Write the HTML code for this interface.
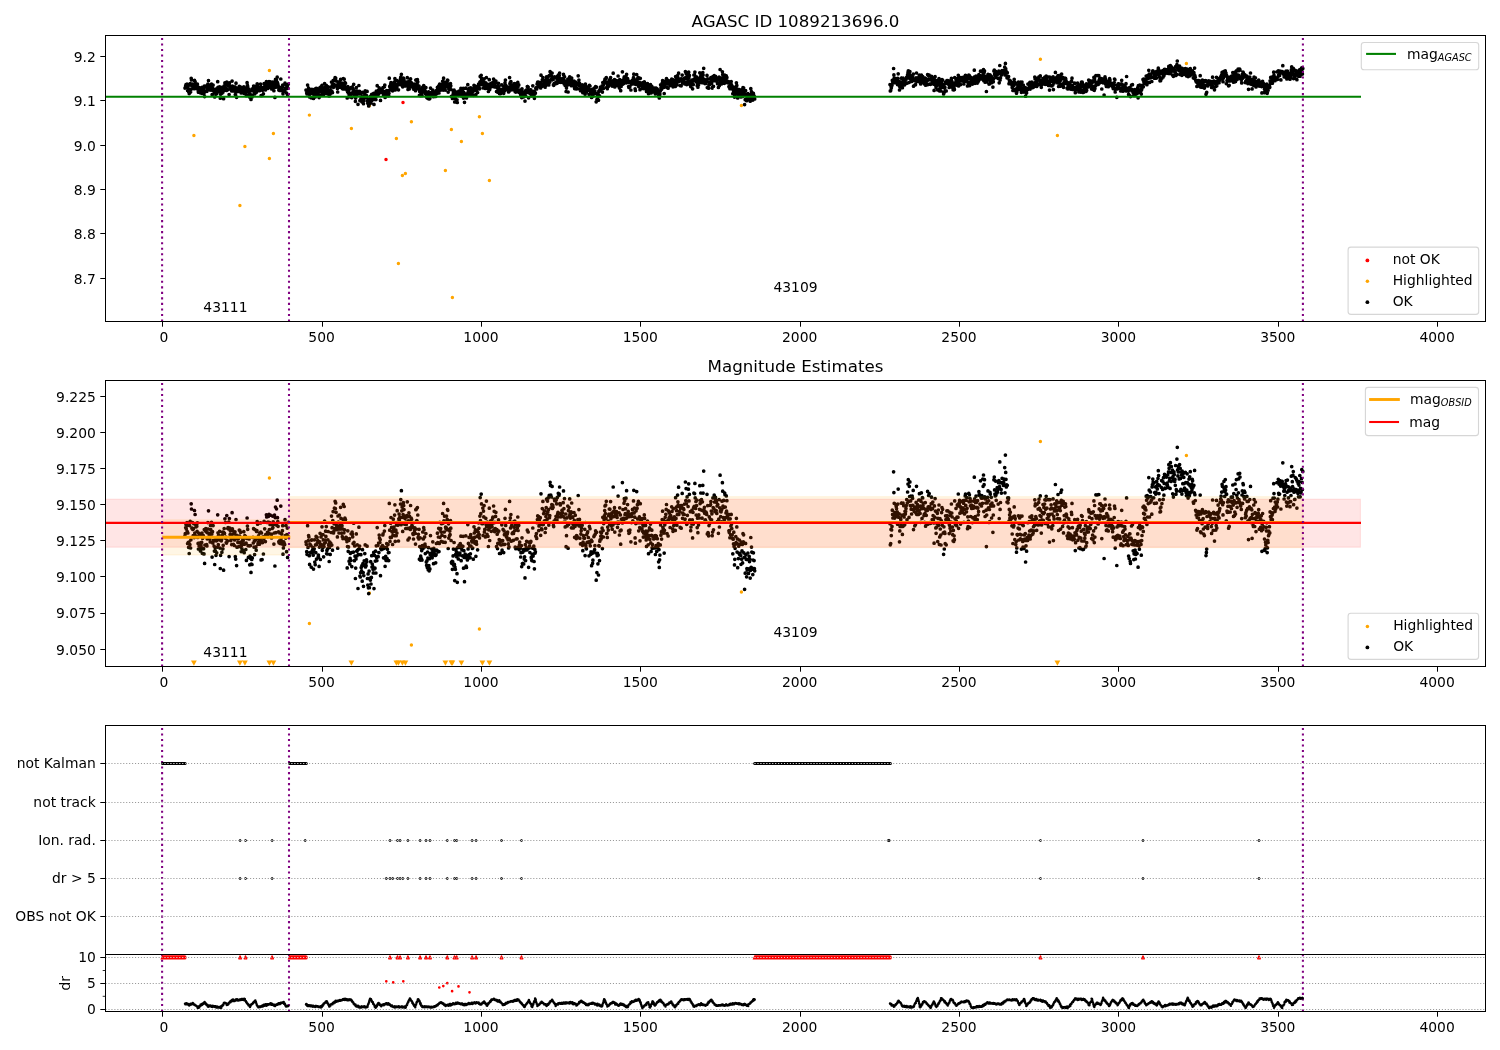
<!DOCTYPE html>
<html><head><meta charset="utf-8"><title>AGASC ID 1089213696.0</title>
<style>html,body{margin:0;padding:0;background:#fff}svg{display:block;will-change:transform}</style></head>
<body>
<svg width="1500" height="1050" viewBox="0 0 1500 1050" font-family="'DejaVu Sans','Liberation Sans',sans-serif" fill="#000">
<rect width="1500" height="1050" fill="#fff"/>
<defs>
<clipPath id="c0"><rect x="105.5" y="35.5" width="1380.0" height="286.0"/></clipPath>
<clipPath id="c1"><rect x="105.5" y="380.5" width="1380.0" height="286.0"/></clipPath>
<clipPath id="c2"><rect x="105.5" y="725.5" width="1380.0" height="286.0"/></clipPath>
</defs>
<g clip-path="url(#c0)">
<path d="M386.0 159.5h0M403.0 102.5h0" stroke="#ff0000" stroke-width="3.50" stroke-linecap="round" fill="none"/>
<path d="M269.4 70.4h0M193.9 135.5h0M244.9 146.5h0M273.4 133.5h0M269.4 158.5h0M239.9 205.5h0M309.4 115.1h0M351.4 128.5h0M369.4 105.7h0M396.4 138.5h0M411.4 121.7h0M402.4 175.5h0M405.4 173.5h0M398.4 263.5h0M445.4 170.5h0M451.4 129.5h0M461.4 141.5h0M479.4 116.8h0M482.4 133.5h0M489.4 180.5h0M452.4 297.5h0M741.4 105.4h0M1040.4 59.2h0M1057.4 135.5h0M1186.4 63.5h0" stroke="#ffa500" stroke-width="3.45" stroke-linecap="round" fill="none"/>
<path d="M185.0 88.1h0M185.3 87.5h0M185.7 85.6h0M186.0 84.7h0M186.3 86.1h0M186.6 85.1h0M187.0 84.2h0M187.3 86.8h0M187.6 90.5h0M187.9 87.3h0M188.3 90.2h0M188.6 91.7h0M188.9 90.1h0M189.2 93.6h0M189.6 85.0h0M189.9 90.9h0M190.2 83.7h0M190.6 91.9h0M190.9 89.4h0M191.2 78.3h0M191.5 79.9h0M191.9 85.8h0M192.2 85.8h0M192.5 84.1h0M192.8 86.2h0M193.2 88.1h0M193.5 86.0h0M193.8 84.5h0M194.2 88.7h0M194.5 80.4h0M194.8 87.3h0M195.1 81.6h0M195.5 88.3h0M195.8 84.9h0M196.1 85.4h0M196.4 88.4h0M196.8 85.2h0M197.1 86.8h0M197.4 84.2h0M197.7 88.7h0M198.1 90.5h0M198.4 92.2h0M198.7 87.3h0M199.1 91.3h0M199.4 90.4h0M199.7 87.9h0M200.0 91.3h0M200.4 92.8h0M200.7 87.9h0M201.0 91.0h0M201.3 91.7h0M201.7 90.2h0M202.0 87.3h0M202.3 93.5h0M202.6 88.9h0M203.0 92.2h0M203.3 88.1h0M203.6 92.1h0M204.0 93.7h0M204.3 86.2h0M204.6 96.6h0M204.9 91.0h0M205.3 86.6h0M205.6 91.1h0M205.9 86.0h0M206.2 86.9h0M206.6 90.8h0M206.9 91.3h0M207.2 89.1h0M207.6 87.2h0M207.9 84.1h0M208.2 86.1h0M208.5 80.5h0M208.9 88.4h0M209.2 87.5h0M209.5 88.4h0M209.8 89.2h0M210.2 90.1h0M210.5 85.0h0M210.8 86.3h0M211.1 87.3h0M211.5 84.1h0M211.8 87.6h0M212.1 94.7h0M212.5 86.9h0M212.8 90.4h0M213.1 85.0h0M213.4 89.6h0M213.8 89.8h0M214.1 91.3h0M214.4 92.9h0M214.7 97.0h0M215.1 91.7h0M215.4 92.8h0M215.7 89.2h0M216.0 94.2h0M216.4 89.7h0M216.7 93.4h0M217.0 88.6h0M217.4 91.6h0M217.7 81.7h0M218.0 87.3h0M218.3 90.9h0M218.7 88.0h0M219.0 88.6h0M219.3 89.4h0M219.6 86.8h0M220.0 92.0h0M220.3 98.2h0M220.6 94.2h0M221.0 88.6h0M221.3 89.7h0M221.6 89.3h0M221.9 93.2h0M222.3 87.9h0M222.6 87.0h0M222.9 92.2h0M223.2 91.1h0M223.6 98.7h0M223.9 87.2h0M224.2 85.9h0M224.5 87.4h0M224.9 82.9h0M225.2 88.9h0M225.5 84.1h0M225.9 88.6h0M226.2 90.2h0M226.5 90.4h0M226.8 82.0h0M227.2 89.6h0M227.5 89.8h0M227.8 85.9h0M228.1 85.6h0M228.5 86.0h0M228.8 83.9h0M229.1 94.6h0M229.4 82.9h0M229.8 85.8h0M230.1 87.8h0M230.4 86.7h0M230.8 89.6h0M231.1 89.2h0M231.4 87.9h0M231.7 90.9h0M232.1 81.1h0M232.4 86.0h0M232.7 86.5h0M233.0 89.0h0M233.4 90.8h0M233.7 87.6h0M234.0 87.3h0M234.4 91.1h0M234.7 89.4h0M235.0 86.9h0M235.3 94.6h0M235.7 95.3h0M236.0 83.2h0M236.3 87.9h0M236.6 97.3h0M237.0 91.7h0M237.3 89.0h0M237.6 88.9h0M237.9 90.2h0M238.3 89.1h0M238.6 88.2h0M238.9 91.5h0M239.3 86.4h0M239.6 88.3h0M239.9 86.6h0M240.2 90.3h0M240.6 87.1h0M240.9 90.1h0M241.2 93.0h0M241.5 91.2h0M241.9 92.1h0M242.2 88.8h0M242.5 90.5h0M242.8 89.5h0M243.2 89.6h0M243.5 92.7h0M243.8 86.9h0M244.2 93.4h0M244.5 90.8h0M244.8 88.1h0M245.1 88.8h0M245.5 88.4h0M245.8 92.4h0M246.1 90.4h0M246.4 95.7h0M246.8 89.0h0M247.1 82.7h0M247.4 85.2h0M247.7 86.2h0M248.1 91.2h0M248.4 94.8h0M248.7 89.1h0M249.1 89.1h0M249.4 91.3h0M249.7 97.1h0M250.0 94.4h0M250.4 91.1h0M250.7 95.1h0M251.0 99.4h0M251.3 96.8h0M251.7 95.4h0M252.0 97.0h0M252.3 95.0h0M252.7 88.7h0M253.0 88.7h0M253.3 90.4h0M253.6 86.0h0M254.0 91.6h0M254.3 89.8h0M254.6 94.0h0M254.9 86.3h0M255.3 89.2h0M255.6 89.3h0M255.9 91.6h0M256.2 92.6h0M256.6 86.8h0M256.9 86.6h0M257.2 83.8h0M257.6 84.6h0M257.9 90.7h0M258.2 90.0h0M258.5 88.2h0M258.9 89.1h0M259.2 90.0h0M259.5 90.7h0M259.8 87.3h0M260.2 89.4h0M260.5 84.2h0M260.8 87.0h0M261.1 95.6h0M261.5 87.3h0M261.8 90.0h0M262.1 95.5h0M262.5 90.3h0M262.8 88.6h0M263.1 88.5h0M263.4 93.8h0M263.8 89.1h0M264.1 83.7h0M264.4 88.6h0M264.7 86.0h0M265.1 88.3h0M265.4 89.9h0M265.7 87.8h0M266.1 87.9h0M266.4 81.7h0M266.7 82.4h0M267.0 84.1h0M267.4 87.1h0M267.7 88.4h0M268.0 83.9h0M268.3 82.2h0M268.7 87.4h0M269.0 81.6h0M269.3 86.3h0M269.6 84.1h0M270.0 84.7h0M270.3 81.8h0M270.6 84.7h0M271.0 87.7h0M271.3 87.9h0M271.6 88.9h0M271.9 84.7h0M272.3 85.9h0M272.6 82.1h0M272.9 85.6h0M273.2 83.9h0M273.6 84.7h0M273.9 90.7h0M274.2 87.3h0M274.5 81.8h0M274.9 97.4h0M275.2 82.6h0M275.5 79.3h0M275.9 87.2h0M276.2 84.4h0M276.5 79.9h0M276.8 84.9h0M277.2 77.2h0M277.5 82.6h0M277.8 83.8h0M278.1 85.2h0M278.5 86.9h0M278.8 90.0h0M279.1 90.3h0M279.5 89.7h0M279.8 87.3h0M280.1 90.5h0M280.4 89.8h0M280.8 79.0h0M281.1 88.9h0M281.4 89.8h0M281.7 87.6h0M282.1 90.7h0M282.4 86.6h0M282.7 85.1h0M283.0 93.8h0M283.4 91.9h0M283.7 90.0h0M284.0 91.0h0M284.4 90.5h0M284.7 90.8h0M285.0 83.2h0M285.3 88.1h0M285.7 88.9h0M286.0 85.0h0M286.3 88.7h0M286.6 93.0h0M287.0 87.8h0M287.3 85.8h0M287.6 94.8h0M287.9 88.2h0M288.3 84.1h0M306.0 90.0h0M306.3 90.8h0M306.7 93.0h0M307.0 93.9h0M307.3 93.2h0M307.6 85.1h0M308.0 91.7h0M308.3 89.7h0M308.6 88.1h0M308.9 88.5h0M309.3 94.3h0M309.6 96.9h0M309.9 90.7h0M310.2 90.8h0M310.6 93.3h0M310.9 91.2h0M311.2 97.8h0M311.6 89.5h0M311.9 89.4h0M312.2 93.4h0M312.5 92.6h0M312.9 91.8h0M313.2 94.1h0M313.5 98.4h0M313.8 92.9h0M314.2 92.2h0M314.5 89.4h0M314.8 96.2h0M315.2 97.0h0M315.5 91.0h0M315.8 93.3h0M316.1 88.4h0M316.5 95.3h0M316.8 90.7h0M317.1 88.6h0M317.4 90.3h0M317.8 89.6h0M318.1 94.7h0M318.4 94.1h0M318.7 94.8h0M319.1 97.6h0M319.4 91.6h0M319.7 90.1h0M320.1 87.4h0M320.4 95.4h0M320.7 90.9h0M321.0 88.5h0M321.4 91.0h0M321.7 91.1h0M322.0 85.4h0M322.3 92.6h0M322.7 91.8h0M323.0 87.8h0M323.3 89.4h0M323.6 94.6h0M324.0 91.5h0M324.3 90.6h0M324.6 83.6h0M325.0 89.5h0M325.3 90.2h0M325.6 86.7h0M325.9 88.4h0M326.3 85.3h0M326.6 93.6h0M326.9 92.6h0M327.2 93.7h0M327.6 92.2h0M327.9 89.4h0M328.2 86.8h0M328.6 91.1h0M328.9 90.6h0M329.2 96.0h0M329.5 91.7h0M329.9 90.1h0M330.2 93.9h0M330.5 91.0h0M330.8 90.5h0M331.2 87.1h0M331.5 82.1h0M331.8 91.0h0M332.1 85.7h0M332.5 92.6h0M332.8 83.5h0M333.1 80.7h0M333.5 87.3h0M333.8 86.8h0M334.1 84.5h0M334.4 79.7h0M334.8 85.9h0M335.1 77.6h0M335.4 79.8h0M335.7 78.0h0M336.1 80.9h0M336.4 86.0h0M336.7 85.1h0M337.0 86.3h0M337.4 88.5h0M337.7 92.0h0M338.0 82.1h0M338.4 83.9h0M338.7 85.7h0M339.0 87.3h0M339.3 81.8h0M339.7 85.1h0M340.0 86.1h0M340.3 84.4h0M340.6 79.4h0M341.0 82.8h0M341.3 82.9h0M341.6 87.3h0M342.0 85.0h0M342.3 88.5h0M342.6 86.1h0M342.9 89.0h0M343.3 78.5h0M343.6 83.3h0M343.9 87.2h0M344.2 79.2h0M344.6 86.3h0M344.9 82.7h0M345.2 89.0h0M345.5 83.2h0M345.9 88.7h0M346.2 88.6h0M346.5 89.3h0M346.9 90.0h0M347.2 98.0h0M347.5 91.4h0M347.8 86.6h0M348.2 92.9h0M348.5 91.6h0M348.8 89.6h0M349.1 96.0h0M349.5 89.0h0M349.8 96.8h0M350.1 95.1h0M350.4 93.5h0M350.8 95.7h0M351.1 87.5h0M351.4 93.3h0M351.8 97.6h0M352.1 87.0h0M352.4 87.6h0M352.7 88.5h0M353.1 90.6h0M353.4 93.2h0M353.7 84.3h0M354.0 90.2h0M354.4 95.8h0M354.7 91.3h0M355.0 94.4h0M355.4 101.3h0M355.7 98.1h0M356.0 95.3h0M356.3 87.6h0M356.7 92.9h0M357.0 94.3h0M357.3 91.0h0M357.6 92.6h0M358.0 104.3h0M358.3 93.9h0M358.6 92.3h0M358.9 85.5h0M359.3 92.1h0M359.6 91.3h0M359.9 100.5h0M360.3 100.8h0M360.6 99.5h0M360.9 94.0h0M361.2 97.9h0M361.6 99.0h0M361.9 97.3h0M362.2 102.1h0M362.5 92.4h0M362.9 96.8h0M363.2 99.4h0M363.5 103.7h0M363.8 100.4h0M364.2 95.9h0M364.5 97.4h0M364.8 93.6h0M365.2 90.9h0M365.5 97.7h0M365.8 97.1h0M366.1 97.4h0M366.5 95.5h0M366.8 96.2h0M367.1 91.4h0M367.4 101.3h0M367.8 103.3h0M368.1 99.9h0M368.4 104.1h0M368.7 105.9h0M369.1 99.0h0M369.4 104.1h0M369.7 101.3h0M370.1 101.3h0M370.4 101.8h0M370.7 96.1h0M371.0 103.0h0M371.4 100.9h0M371.7 94.3h0M372.0 97.8h0M372.3 96.8h0M372.7 97.6h0M373.0 98.4h0M373.3 99.6h0M373.7 93.3h0M374.0 104.4h0M374.3 98.3h0M374.6 94.2h0M375.0 98.1h0M375.3 95.9h0M375.6 92.9h0M375.9 99.6h0M376.3 91.2h0M376.6 94.8h0M376.9 95.8h0M377.2 85.7h0M377.6 94.5h0M377.9 91.1h0M378.2 94.6h0M378.6 90.4h0M378.9 93.3h0M379.2 87.9h0M379.5 88.9h0M379.9 90.2h0M380.2 89.3h0M380.5 100.4h0M380.8 92.0h0M381.2 92.4h0M381.5 92.4h0M381.8 91.5h0M382.1 92.3h0M382.5 91.2h0M382.8 87.9h0M383.1 87.6h0M383.5 94.9h0M383.8 92.0h0M384.1 91.6h0M384.4 86.7h0M384.8 85.0h0M385.1 97.5h0M385.4 95.3h0M385.7 94.5h0M386.1 95.7h0M386.4 91.8h0M386.7 90.5h0M387.1 95.2h0M387.4 92.3h0M387.7 90.9h0M388.0 90.8h0M388.4 93.4h0M388.7 95.8h0M389.0 93.3h0M389.3 78.2h0M389.7 86.4h0M390.0 89.9h0M390.3 88.6h0M390.6 84.3h0M391.0 82.5h0M391.3 88.7h0M391.6 85.6h0M392.0 86.9h0M392.3 87.0h0M392.6 90.8h0M392.9 88.0h0M393.3 83.1h0M393.6 86.2h0M393.9 85.5h0M394.2 88.1h0M394.6 81.8h0M394.9 78.6h0M395.2 89.9h0M395.5 86.8h0M395.9 86.4h0M396.2 88.1h0M396.5 84.8h0M396.9 87.3h0M397.2 80.5h0M397.5 84.0h0M397.8 84.9h0M398.2 84.3h0M398.5 89.8h0M398.8 82.9h0M399.1 81.5h0M399.5 83.2h0M399.8 82.5h0M400.1 84.4h0M400.5 78.4h0M400.8 77.0h0M401.1 84.8h0M401.4 74.3h0M401.8 80.5h0M402.1 79.3h0M402.4 82.5h0M402.7 86.8h0M403.1 81.6h0M403.4 78.0h0M403.7 78.9h0M404.0 80.1h0M404.4 84.6h0M404.7 82.1h0M405.0 82.9h0M405.4 82.4h0M405.7 85.9h0M406.0 84.0h0M406.3 84.7h0M406.7 82.0h0M407.0 82.4h0M407.3 77.7h0M407.6 85.9h0M408.0 89.4h0M408.3 83.6h0M408.6 83.6h0M408.9 81.1h0M409.3 88.9h0M409.6 82.2h0M409.9 85.7h0M410.3 86.2h0M410.6 78.9h0M410.9 83.5h0M411.2 82.7h0M411.6 83.1h0M411.9 85.0h0M412.2 85.6h0M412.5 85.3h0M412.9 87.5h0M413.2 87.7h0M413.5 89.1h0M413.9 85.8h0M414.2 84.1h0M414.5 86.6h0M414.8 85.7h0M415.2 87.4h0M415.5 90.7h0M415.8 80.1h0M416.1 86.1h0M416.5 79.9h0M416.8 83.5h0M417.1 83.7h0M417.4 79.5h0M417.8 81.8h0M418.1 88.7h0M418.4 87.7h0M418.8 89.1h0M419.1 86.2h0M419.4 95.3h0M419.7 91.4h0M420.1 88.8h0M420.4 95.6h0M420.7 94.4h0M421.0 91.8h0M421.4 95.2h0M421.7 92.7h0M422.0 95.6h0M422.3 91.2h0M422.7 87.0h0M423.0 92.0h0M423.3 89.1h0M423.7 85.7h0M424.0 86.3h0M424.3 91.6h0M424.6 88.5h0M425.0 90.7h0M425.3 93.6h0M425.6 91.5h0M425.9 87.5h0M426.3 96.2h0M426.6 97.2h0M426.9 95.9h0M427.3 97.9h0M427.6 93.1h0M427.9 95.0h0M428.2 98.6h0M428.6 91.8h0M428.9 97.4h0M429.2 98.9h0M429.5 95.2h0M429.9 98.3h0M430.2 94.0h0M430.5 88.1h0M430.8 93.6h0M431.2 94.6h0M431.5 93.9h0M431.8 92.2h0M432.2 94.9h0M432.5 92.6h0M432.8 90.0h0M433.1 93.5h0M433.5 96.7h0M433.8 92.0h0M434.1 94.0h0M434.4 93.5h0M434.8 92.8h0M435.1 92.7h0M435.4 94.2h0M435.7 96.4h0M436.1 94.0h0M436.4 90.5h0M436.7 92.6h0M437.1 92.7h0M437.4 87.4h0M437.7 90.3h0M438.0 93.1h0M438.4 88.5h0M438.7 85.9h0M439.0 93.0h0M439.3 90.5h0M439.7 84.0h0M440.0 88.6h0M440.3 86.4h0M440.7 85.9h0M441.0 86.9h0M441.3 89.9h0M441.6 84.5h0M442.0 88.0h0M442.3 84.3h0M442.6 81.3h0M442.9 84.3h0M443.3 90.1h0M443.6 78.2h0M443.9 83.6h0M444.2 87.0h0M444.6 82.1h0M444.9 88.4h0M445.2 90.1h0M445.6 85.5h0M445.9 86.0h0M446.2 85.6h0M446.5 82.1h0M446.9 86.3h0M447.2 83.1h0M447.5 80.1h0M447.8 80.3h0M448.2 92.1h0M448.5 84.5h0M448.8 88.9h0M449.1 86.2h0M449.5 88.1h0M449.8 86.7h0M450.1 87.8h0M450.5 83.5h0M450.8 85.8h0M451.1 89.6h0M451.4 96.3h0M451.8 96.7h0M452.1 96.0h0M452.4 98.4h0M452.7 96.1h0M453.1 94.3h0M453.4 92.3h0M453.7 97.2h0M454.1 90.2h0M454.4 97.0h0M454.7 101.9h0M455.0 97.8h0M455.4 98.5h0M455.7 93.8h0M456.0 92.2h0M456.3 93.0h0M456.7 94.6h0M457.0 99.8h0M457.3 102.5h0M457.6 91.8h0M458.0 93.6h0M458.3 95.3h0M458.6 93.5h0M459.0 91.1h0M459.3 91.7h0M459.6 94.1h0M459.9 93.4h0M460.3 90.5h0M460.6 91.3h0M460.9 88.3h0M461.2 95.8h0M461.6 91.6h0M461.9 92.5h0M462.2 91.4h0M462.5 94.3h0M462.9 91.4h0M463.2 88.3h0M463.5 98.1h0M463.9 92.7h0M464.2 94.8h0M464.5 102.3h0M464.8 94.4h0M465.2 93.8h0M465.5 94.2h0M465.8 88.2h0M466.1 97.5h0M466.5 97.9h0M466.8 94.2h0M467.1 95.1h0M467.4 95.6h0M467.8 84.7h0M468.1 92.2h0M468.4 90.5h0M468.8 94.0h0M469.1 88.6h0M469.4 95.0h0M469.7 91.2h0M470.1 94.9h0M470.4 93.7h0M470.7 87.8h0M471.0 91.4h0M471.4 88.7h0M471.7 89.8h0M472.0 90.0h0M472.4 92.1h0M472.7 91.9h0M473.0 89.4h0M473.3 95.3h0M473.7 89.5h0M474.0 85.4h0M474.3 87.3h0M474.6 88.6h0M475.0 90.4h0M475.3 86.5h0M475.6 86.3h0M475.9 94.5h0M476.3 90.0h0M476.6 90.7h0M476.9 88.4h0M477.3 86.7h0M477.6 92.5h0M477.9 88.0h0M478.2 87.0h0M478.6 84.2h0M478.9 85.8h0M479.2 87.8h0M479.5 88.8h0M479.9 82.1h0M480.2 76.4h0M480.5 83.5h0M480.8 81.4h0M481.2 75.3h0M481.5 78.4h0M481.8 84.4h0M482.2 84.1h0M482.5 84.5h0M482.8 79.6h0M483.1 88.0h0M483.5 80.6h0M483.8 82.4h0M484.1 78.9h0M484.4 87.0h0M484.8 86.2h0M485.1 86.2h0M485.4 88.5h0M485.8 82.8h0M486.1 84.7h0M486.4 77.5h0M486.7 85.3h0M487.1 87.7h0M487.4 84.0h0M487.7 84.8h0M488.0 88.3h0M488.4 91.5h0M488.7 86.3h0M489.0 85.9h0M489.3 79.7h0M489.7 89.6h0M490.0 85.0h0M490.3 85.5h0M490.7 83.6h0M491.0 84.8h0M491.3 86.8h0M491.6 84.7h0M492.0 85.3h0M492.3 83.9h0M492.6 82.8h0M492.9 82.4h0M493.3 84.2h0M493.6 79.0h0M493.9 86.3h0M494.2 80.6h0M494.6 86.9h0M494.9 84.1h0M495.2 85.9h0M495.6 82.2h0M495.9 81.0h0M496.2 86.4h0M496.5 91.5h0M496.9 86.3h0M497.2 87.7h0M497.5 92.1h0M497.8 90.5h0M498.2 87.0h0M498.5 83.3h0M498.8 86.7h0M499.2 89.3h0M499.5 93.6h0M499.8 90.7h0M500.1 89.7h0M500.5 93.6h0M500.8 89.7h0M501.1 91.0h0M501.4 89.8h0M501.8 84.8h0M502.1 92.6h0M502.4 89.7h0M502.7 89.6h0M503.1 86.2h0M503.4 90.8h0M503.7 93.3h0M504.1 86.6h0M504.4 87.8h0M504.7 90.8h0M505.0 82.8h0M505.4 80.1h0M505.7 85.0h0M506.0 87.4h0M506.3 88.3h0M506.7 88.3h0M507.0 88.8h0M507.3 87.5h0M507.6 87.0h0M508.0 89.4h0M508.3 90.7h0M508.6 91.9h0M509.0 91.6h0M509.3 89.1h0M509.6 77.6h0M509.9 83.7h0M510.3 82.7h0M510.6 85.7h0M510.9 81.6h0M511.2 89.8h0M511.6 85.1h0M511.9 85.0h0M512.2 87.5h0M512.6 87.2h0M512.9 87.5h0M513.2 89.6h0M513.5 87.5h0M513.9 83.8h0M514.2 85.5h0M514.5 86.6h0M514.8 83.7h0M515.2 91.7h0M515.5 84.6h0M515.8 92.1h0M516.1 89.1h0M516.5 84.5h0M516.8 86.4h0M517.1 89.1h0M517.5 85.6h0M517.8 82.4h0M518.1 86.5h0M518.4 91.6h0M518.8 84.9h0M519.1 92.4h0M519.4 91.0h0M519.7 90.1h0M520.1 91.9h0M520.4 91.6h0M520.7 94.7h0M521.0 93.4h0M521.4 91.2h0M521.7 97.6h0M522.0 88.8h0M522.4 96.7h0M522.7 93.2h0M523.0 96.6h0M523.3 92.4h0M523.7 96.8h0M524.0 92.8h0M524.3 95.3h0M524.6 94.6h0M525.0 101.1h0M525.3 90.9h0M525.6 95.8h0M526.0 92.0h0M526.3 91.8h0M526.6 89.8h0M526.9 92.5h0M527.3 86.5h0M527.6 86.7h0M527.9 92.2h0M528.2 87.0h0M528.6 97.8h0M528.9 90.1h0M529.2 91.9h0M529.5 91.2h0M529.9 93.3h0M530.2 90.2h0M530.5 90.2h0M530.9 89.9h0M531.2 94.8h0M531.5 95.4h0M531.8 95.8h0M532.2 93.9h0M532.5 92.0h0M532.8 85.8h0M533.1 94.4h0M533.5 93.8h0M533.8 91.3h0M534.1 96.0h0M534.4 98.3h0M534.8 92.3h0M535.1 93.5h0M535.4 93.1h0M535.8 88.3h0M536.1 88.4h0M536.4 87.5h0M536.7 89.0h0M537.1 84.1h0M537.4 83.2h0M537.7 82.0h0M538.0 83.1h0M538.4 82.2h0M538.7 86.6h0M539.0 85.1h0M539.4 83.3h0M539.7 84.3h0M540.0 84.7h0M540.3 82.6h0M540.7 88.0h0M541.0 75.2h0M541.3 84.3h0M541.6 86.0h0M542.0 86.3h0M542.3 79.8h0M542.6 84.7h0M542.9 77.6h0M543.3 84.7h0M543.6 81.4h0M543.9 83.9h0M544.3 80.6h0M544.6 83.6h0M544.9 80.5h0M545.2 87.2h0M545.6 85.9h0M545.9 82.2h0M546.2 79.5h0M546.5 76.9h0M546.9 81.5h0M547.2 83.1h0M547.5 77.5h0M547.8 80.9h0M548.2 76.5h0M548.5 80.1h0M548.8 84.9h0M549.2 75.7h0M549.5 82.6h0M549.8 81.9h0M550.1 71.7h0M550.5 72.7h0M550.8 75.7h0M551.1 79.5h0M551.4 76.2h0M551.8 78.6h0M552.1 73.0h0M552.4 79.8h0M552.8 78.8h0M553.1 79.4h0M553.4 84.9h0M553.7 85.3h0M554.1 83.7h0M554.4 76.8h0M554.7 77.4h0M555.0 83.9h0M555.4 83.2h0M555.7 77.4h0M556.0 82.2h0M556.3 77.1h0M556.7 78.3h0M557.0 83.3h0M557.3 76.3h0M557.7 81.4h0M558.0 80.9h0M558.3 75.1h0M558.6 82.3h0M559.0 75.8h0M559.3 75.4h0M559.6 73.2h0M559.9 78.3h0M560.3 78.7h0M560.6 81.3h0M560.9 82.3h0M561.2 82.1h0M561.6 81.4h0M561.9 80.4h0M562.2 80.3h0M562.6 81.1h0M562.9 82.2h0M563.2 78.0h0M563.5 74.4h0M563.9 79.8h0M564.2 84.0h0M564.5 76.7h0M564.8 82.7h0M565.2 85.4h0M565.5 83.9h0M565.8 81.5h0M566.1 91.5h0M566.5 88.1h0M566.8 82.7h0M567.1 85.1h0M567.5 84.9h0M567.8 79.0h0M568.1 92.0h0M568.4 80.4h0M568.8 84.6h0M569.1 79.5h0M569.4 82.0h0M569.7 76.8h0M570.1 81.3h0M570.4 82.7h0M570.7 81.4h0M571.1 80.8h0M571.4 85.7h0M571.7 78.1h0M572.0 82.5h0M572.4 82.5h0M572.7 82.4h0M573.0 84.6h0M573.3 85.7h0M573.7 84.6h0M574.0 81.0h0M574.3 83.4h0M574.6 88.6h0M575.0 85.3h0M575.3 81.8h0M575.6 84.6h0M576.0 84.8h0M576.3 89.0h0M576.6 88.1h0M576.9 88.2h0M577.3 83.9h0M577.6 88.7h0M577.9 83.2h0M578.2 75.8h0M578.6 84.3h0M578.9 80.1h0M579.2 85.2h0M579.5 83.1h0M579.9 88.9h0M580.2 84.5h0M580.5 90.7h0M580.9 87.6h0M581.2 86.6h0M581.5 85.7h0M581.8 90.6h0M582.2 84.9h0M582.5 91.1h0M582.8 92.7h0M583.1 90.1h0M583.5 88.1h0M583.8 88.9h0M584.1 90.7h0M584.5 88.9h0M584.8 86.2h0M585.1 94.2h0M585.4 84.1h0M585.8 91.1h0M586.1 91.9h0M586.4 92.1h0M586.7 87.8h0M587.1 90.2h0M587.4 87.2h0M587.7 86.9h0M588.0 90.2h0M588.4 88.7h0M588.7 90.0h0M589.0 94.3h0M589.4 85.3h0M589.7 90.3h0M590.0 86.0h0M590.3 91.2h0M590.7 93.9h0M591.0 93.1h0M591.3 89.5h0M591.6 97.4h0M592.0 89.8h0M592.3 93.5h0M592.6 96.6h0M592.9 95.7h0M593.3 93.1h0M593.6 93.0h0M593.9 88.4h0M594.3 88.1h0M594.6 92.4h0M594.9 91.2h0M595.2 87.7h0M595.6 86.6h0M595.9 93.5h0M596.2 101.8h0M596.5 87.1h0M596.9 99.5h0M597.2 94.3h0M597.5 93.5h0M597.9 96.8h0M598.2 94.1h0M598.5 100.2h0M598.8 91.2h0M599.2 91.3h0M599.5 95.8h0M599.8 89.8h0M600.1 89.4h0M600.5 87.0h0M600.8 88.3h0M601.1 89.1h0M601.4 87.3h0M601.8 88.4h0M602.1 85.8h0M602.4 92.1h0M602.8 82.5h0M603.1 86.6h0M603.4 88.5h0M603.7 84.4h0M604.1 83.3h0M604.4 82.0h0M604.7 80.4h0M605.0 79.0h0M605.4 81.3h0M605.7 78.7h0M606.0 82.8h0M606.3 77.6h0M606.7 87.4h0M607.0 87.4h0M607.3 88.7h0M607.7 85.5h0M608.0 83.6h0M608.3 86.4h0M608.6 81.9h0M609.0 81.5h0M609.3 79.9h0M609.6 84.6h0M609.9 80.0h0M610.3 82.2h0M610.6 77.6h0M610.9 82.9h0M611.3 85.1h0M611.6 82.0h0M611.9 81.1h0M612.2 86.1h0M612.6 82.3h0M612.9 84.8h0M613.2 73.2h0M613.5 80.7h0M613.9 82.3h0M614.2 80.5h0M614.5 79.5h0M614.8 87.0h0M615.2 81.5h0M615.5 81.0h0M615.8 84.2h0M616.2 81.4h0M616.5 80.7h0M616.8 82.1h0M617.1 82.5h0M617.5 85.6h0M617.8 83.9h0M618.1 76.0h0M618.4 84.4h0M618.8 83.9h0M619.1 81.1h0M619.4 87.9h0M619.7 79.6h0M620.1 86.7h0M620.4 81.8h0M620.7 90.7h0M621.1 86.4h0M621.4 83.0h0M621.7 84.1h0M622.0 84.2h0M622.4 71.8h0M622.7 84.2h0M623.0 80.1h0M623.3 82.8h0M623.7 83.4h0M624.0 78.1h0M624.3 76.8h0M624.7 77.4h0M625.0 81.7h0M625.3 81.4h0M625.6 79.8h0M626.0 76.6h0M626.3 82.8h0M626.6 74.3h0M626.9 81.4h0M627.3 81.5h0M627.6 78.6h0M627.9 82.4h0M628.2 80.7h0M628.6 86.6h0M628.9 87.4h0M629.2 82.3h0M629.6 87.1h0M629.9 86.4h0M630.2 82.2h0M630.5 81.6h0M630.9 90.0h0M631.2 82.0h0M631.5 84.1h0M631.8 82.2h0M632.2 81.2h0M632.5 80.0h0M632.8 83.6h0M633.1 83.8h0M633.5 77.5h0M633.8 74.2h0M634.1 81.1h0M634.5 79.6h0M634.8 82.4h0M635.1 88.8h0M635.4 90.4h0M635.8 84.4h0M636.1 80.5h0M636.4 84.2h0M636.7 74.6h0M637.1 79.7h0M637.4 78.6h0M637.7 83.0h0M638.1 78.2h0M638.4 77.6h0M638.7 86.6h0M639.0 84.1h0M639.4 82.3h0M639.7 85.6h0M640.0 89.7h0M640.3 78.3h0M640.7 86.0h0M641.0 83.4h0M641.3 83.4h0M641.6 84.2h0M642.0 86.0h0M642.3 82.8h0M642.6 86.8h0M643.0 85.0h0M643.3 88.6h0M643.6 87.3h0M643.9 85.1h0M644.3 81.8h0M644.6 82.8h0M644.9 87.5h0M645.2 88.5h0M645.6 85.0h0M645.9 86.7h0M646.2 89.4h0M646.5 91.4h0M646.9 87.6h0M647.2 88.6h0M647.5 83.6h0M647.9 86.7h0M648.2 90.9h0M648.5 93.7h0M648.8 88.9h0M649.2 88.1h0M649.5 85.7h0M649.8 89.3h0M650.1 86.2h0M650.5 84.6h0M650.8 90.3h0M651.1 93.0h0M651.5 88.0h0M651.8 86.4h0M652.1 91.8h0M652.4 90.8h0M652.8 92.0h0M653.1 88.6h0M653.4 88.6h0M653.7 89.1h0M654.1 88.7h0M654.4 88.2h0M654.7 91.9h0M655.0 88.9h0M655.4 93.9h0M655.7 88.1h0M656.0 91.2h0M656.4 88.3h0M656.7 93.0h0M657.0 91.7h0M657.3 89.1h0M657.7 91.7h0M658.0 91.4h0M658.3 90.6h0M658.6 96.1h0M659.0 92.4h0M659.3 97.9h0M659.6 95.5h0M659.9 94.1h0M660.3 91.0h0M660.6 84.8h0M660.9 88.0h0M661.3 86.9h0M661.6 89.2h0M661.9 86.7h0M662.2 83.1h0M662.6 80.6h0M662.9 85.6h0M663.2 85.9h0M663.5 83.4h0M663.9 87.3h0M664.2 93.5h0M664.5 86.5h0M664.8 84.8h0M665.2 82.5h0M665.5 84.1h0M665.8 81.6h0M666.2 80.1h0M666.5 78.5h0M666.8 83.6h0M667.1 87.5h0M667.5 83.8h0M667.8 83.8h0M668.1 88.2h0M668.4 80.5h0M668.8 83.1h0M669.1 82.6h0M669.4 81.1h0M669.8 82.3h0M670.1 85.6h0M670.4 82.3h0M670.7 82.0h0M671.1 82.8h0M671.4 82.8h0M671.7 79.2h0M672.0 80.7h0M672.4 83.1h0M672.7 86.1h0M673.0 86.8h0M673.3 79.8h0M673.7 85.0h0M674.0 83.4h0M674.3 82.3h0M674.7 83.2h0M675.0 84.5h0M675.3 86.5h0M675.6 76.5h0M676.0 82.8h0M676.3 79.4h0M676.6 80.5h0M676.9 84.9h0M677.3 81.7h0M677.6 75.7h0M677.9 77.7h0M678.2 78.7h0M678.6 73.2h0M678.9 81.6h0M679.2 79.1h0M679.6 80.7h0M679.9 80.8h0M680.2 85.6h0M680.5 79.7h0M680.9 78.9h0M681.2 85.8h0M681.5 79.6h0M681.8 78.9h0M682.2 75.1h0M682.5 82.8h0M682.8 81.2h0M683.2 81.6h0M683.5 79.8h0M683.8 80.1h0M684.1 81.6h0M684.5 78.4h0M684.8 83.9h0M685.1 83.0h0M685.4 71.6h0M685.8 77.3h0M686.1 73.6h0M686.4 78.3h0M686.7 84.6h0M687.1 76.2h0M687.4 81.9h0M687.7 84.2h0M688.1 79.2h0M688.4 73.9h0M688.7 72.2h0M689.0 77.4h0M689.4 75.4h0M689.7 83.3h0M690.0 83.2h0M690.3 80.8h0M690.7 86.6h0M691.0 85.4h0M691.3 84.2h0M691.6 84.4h0M692.0 80.2h0M692.3 83.2h0M692.6 88.8h0M693.0 80.9h0M693.3 84.6h0M693.6 79.5h0M693.9 75.0h0M694.3 79.1h0M694.6 75.2h0M694.9 72.1h0M695.2 76.5h0M695.6 79.8h0M695.9 77.6h0M696.2 81.8h0M696.6 78.9h0M696.9 77.2h0M697.2 85.7h0M697.5 82.8h0M697.9 87.2h0M698.2 81.8h0M698.5 84.9h0M698.8 81.7h0M699.2 82.7h0M699.5 80.0h0M699.8 72.8h0M700.1 78.3h0M700.5 77.3h0M700.8 75.0h0M701.1 77.9h0M701.5 77.0h0M701.8 80.3h0M702.1 82.7h0M702.4 77.7h0M702.8 72.6h0M703.1 75.0h0M703.4 80.5h0M703.7 68.3h0M704.1 80.3h0M704.4 79.4h0M704.7 81.3h0M705.0 83.6h0M705.4 83.3h0M705.7 83.5h0M706.0 80.8h0M706.4 81.2h0M706.7 81.6h0M707.0 75.4h0M707.3 87.6h0M707.7 78.9h0M708.0 87.2h0M708.3 87.4h0M708.6 88.2h0M709.0 85.0h0M709.3 82.4h0M709.6 84.4h0M710.0 78.8h0M710.3 83.0h0M710.6 78.6h0M710.9 77.6h0M711.3 80.5h0M711.6 83.3h0M711.9 81.4h0M712.2 88.1h0M712.6 87.0h0M712.9 76.5h0M713.2 79.5h0M713.5 86.3h0M713.9 79.9h0M714.2 75.7h0M714.5 77.8h0M714.9 80.7h0M715.2 80.6h0M715.5 76.3h0M715.8 77.2h0M716.2 80.4h0M716.5 77.9h0M716.8 81.3h0M717.1 79.0h0M717.5 83.7h0M717.8 78.5h0M718.1 83.6h0M718.4 87.4h0M718.8 83.0h0M719.1 77.0h0M719.4 85.5h0M719.8 79.6h0M720.1 69.5h0M720.4 80.6h0M720.7 82.3h0M721.1 80.8h0M721.4 83.9h0M721.7 80.1h0M722.0 77.5h0M722.4 71.8h0M722.7 74.5h0M723.0 79.1h0M723.4 82.6h0M723.7 77.3h0M724.0 79.4h0M724.3 83.3h0M724.7 75.1h0M725.0 75.5h0M725.3 79.3h0M725.6 82.6h0M726.0 81.1h0M726.3 75.9h0M726.6 80.6h0M726.9 77.4h0M727.3 82.3h0M727.6 81.6h0M727.9 82.6h0M728.3 83.0h0M728.6 81.6h0M728.9 86.6h0M729.2 87.1h0M729.6 86.6h0M729.9 88.7h0M730.2 82.9h0M730.5 87.8h0M730.9 85.2h0M731.2 81.6h0M731.5 84.6h0M731.8 85.9h0M732.2 87.9h0M732.5 88.9h0M732.8 93.7h0M733.2 89.2h0M733.5 90.7h0M733.8 87.0h0M734.1 91.4h0M734.5 97.1h0M734.8 95.4h0M735.1 92.0h0M735.4 90.7h0M735.8 88.4h0M736.1 90.2h0M736.4 82.8h0M736.8 85.4h0M737.1 93.2h0M737.4 89.1h0M737.7 98.0h0M738.1 90.7h0M738.4 95.2h0M738.7 91.4h0M739.0 93.5h0M739.4 89.5h0M739.7 93.9h0M740.0 93.6h0M740.3 90.7h0M740.7 94.2h0M741.0 96.9h0M741.3 90.1h0M741.7 95.3h0M742.0 92.8h0M742.3 90.8h0M742.6 96.5h0M743.0 87.5h0M743.3 90.0h0M743.6 87.8h0M743.9 93.4h0M744.3 94.8h0M744.6 104.6h0M744.9 94.9h0M745.2 99.7h0M745.6 90.5h0M745.9 94.0h0M746.2 95.4h0M746.6 100.7h0M746.9 98.2h0M747.2 98.6h0M747.5 98.5h0M747.9 93.5h0M748.2 95.5h0M748.5 99.7h0M748.8 98.3h0M749.2 94.5h0M749.5 96.1h0M749.8 95.3h0M750.2 101.2h0M750.5 98.8h0M750.8 88.7h0M751.1 97.8h0M751.5 91.6h0M751.8 93.2h0M752.1 98.1h0M752.4 93.3h0M752.8 100.1h0M753.1 95.6h0M753.4 93.4h0M753.7 98.5h0M754.1 95.8h0M754.4 98.2h0M754.7 98.9h0M890.0 84.5h0M890.3 90.9h0M890.7 90.6h0M891.0 86.2h0M891.3 88.1h0M891.6 86.3h0M892.0 85.3h0M892.3 80.3h0M892.6 81.6h0M892.9 82.7h0M893.3 81.7h0M893.6 68.5h0M893.9 74.9h0M894.2 78.2h0M894.6 82.7h0M894.9 80.9h0M895.2 82.5h0M895.6 81.8h0M895.9 78.6h0M896.2 79.1h0M896.5 79.8h0M896.9 81.8h0M897.2 80.8h0M897.5 84.6h0M897.8 78.4h0M898.2 73.8h0M898.5 82.5h0M898.8 81.5h0M899.2 81.4h0M899.5 90.0h0M899.8 86.7h0M900.1 85.3h0M900.5 82.7h0M900.8 83.2h0M901.1 84.8h0M901.4 78.2h0M901.8 78.1h0M902.1 81.8h0M902.4 87.7h0M902.7 85.3h0M903.1 78.2h0M903.4 85.1h0M903.7 78.9h0M904.1 82.4h0M904.4 81.7h0M904.7 84.8h0M905.0 80.6h0M905.4 81.5h0M905.7 80.6h0M906.0 79.7h0M906.3 78.9h0M906.7 77.0h0M907.0 83.2h0M907.3 78.1h0M907.6 74.7h0M908.0 72.3h0M908.3 70.9h0M908.6 77.6h0M909.0 82.5h0M909.3 73.0h0M909.6 76.1h0M909.9 71.6h0M910.3 78.9h0M910.6 77.4h0M910.9 75.9h0M911.2 80.0h0M911.6 81.5h0M911.9 78.8h0M912.2 76.0h0M912.6 76.7h0M912.9 78.8h0M913.2 74.2h0M913.5 86.2h0M913.9 80.2h0M914.2 80.6h0M914.5 79.8h0M914.8 85.1h0M915.2 79.3h0M915.5 84.7h0M915.8 81.1h0M916.1 77.9h0M916.5 73.0h0M916.8 81.6h0M917.1 79.8h0M917.5 78.6h0M917.8 80.5h0M918.1 79.5h0M918.4 81.6h0M918.8 77.2h0M919.1 80.5h0M919.4 75.2h0M919.7 77.1h0M920.1 81.3h0M920.4 79.1h0M920.7 84.0h0M921.0 77.6h0M921.4 75.0h0M921.7 79.8h0M922.0 82.8h0M922.4 76.4h0M922.7 76.6h0M923.0 78.9h0M923.3 78.2h0M923.7 79.7h0M924.0 82.0h0M924.3 81.5h0M924.6 84.1h0M925.0 81.3h0M925.3 78.0h0M925.6 85.2h0M926.0 80.5h0M926.3 81.9h0M926.6 79.9h0M926.9 84.6h0M927.3 80.4h0M927.6 74.5h0M927.9 84.6h0M928.2 79.3h0M928.6 75.8h0M928.9 79.4h0M929.2 75.2h0M929.5 84.1h0M929.9 79.3h0M930.2 79.7h0M930.5 84.3h0M930.9 80.0h0M931.2 78.3h0M931.5 76.3h0M931.8 78.2h0M932.2 83.1h0M932.5 79.8h0M932.8 77.8h0M933.1 82.0h0M933.5 83.2h0M933.8 84.2h0M934.1 90.4h0M934.4 79.0h0M934.8 82.5h0M935.1 76.7h0M935.4 80.5h0M935.8 85.7h0M936.1 87.4h0M936.4 80.8h0M936.7 85.5h0M937.1 84.4h0M937.4 81.3h0M937.7 89.9h0M938.0 82.8h0M938.4 80.2h0M938.7 84.9h0M939.0 78.7h0M939.4 90.8h0M939.7 88.5h0M940.0 82.9h0M940.3 86.1h0M940.7 87.9h0M941.0 91.0h0M941.3 83.5h0M941.6 81.0h0M942.0 79.5h0M942.3 84.9h0M942.6 80.0h0M942.9 84.1h0M943.3 87.3h0M943.6 93.9h0M943.9 85.4h0M944.3 92.2h0M944.6 87.0h0M944.9 87.4h0M945.2 90.6h0M945.6 82.0h0M945.9 83.2h0M946.2 90.9h0M946.5 83.3h0M946.9 80.5h0M947.2 82.0h0M947.5 82.8h0M947.8 80.5h0M948.2 83.0h0M948.5 84.2h0M948.8 83.6h0M949.2 87.5h0M949.5 84.9h0M949.8 80.9h0M950.1 85.8h0M950.5 81.9h0M950.8 86.7h0M951.1 83.9h0M951.4 78.4h0M951.8 81.2h0M952.1 82.3h0M952.4 85.5h0M952.7 87.8h0M953.1 89.7h0M953.4 86.5h0M953.7 89.9h0M954.1 88.2h0M954.4 89.4h0M954.7 77.5h0M955.0 82.9h0M955.4 84.7h0M955.7 84.9h0M956.0 79.7h0M956.3 83.6h0M956.7 85.1h0M957.0 82.4h0M957.3 78.7h0M957.7 79.0h0M958.0 82.5h0M958.3 75.3h0M958.6 85.9h0M959.0 78.1h0M959.3 78.3h0M959.6 77.3h0M959.9 81.2h0M960.3 79.2h0M960.6 84.6h0M960.9 79.6h0M961.2 80.5h0M961.6 79.9h0M961.9 77.6h0M962.2 80.9h0M962.6 80.9h0M962.9 79.6h0M963.2 77.4h0M963.5 78.2h0M963.9 84.0h0M964.2 80.0h0M964.5 81.4h0M964.8 77.3h0M965.2 75.9h0M965.5 75.4h0M965.8 78.8h0M966.1 77.2h0M966.5 80.8h0M966.8 76.4h0M967.1 79.7h0M967.5 86.0h0M967.8 82.3h0M968.1 85.4h0M968.4 83.6h0M968.8 75.1h0M969.1 77.7h0M969.4 75.6h0M969.7 85.6h0M970.1 76.8h0M970.4 79.0h0M970.7 82.2h0M971.1 77.5h0M971.4 78.7h0M971.7 79.8h0M972.0 79.7h0M972.4 84.1h0M972.7 82.6h0M973.0 82.7h0M973.3 79.7h0M973.7 79.0h0M974.0 77.5h0M974.3 70.2h0M974.6 76.8h0M975.0 83.3h0M975.3 82.3h0M975.6 77.9h0M976.0 76.0h0M976.3 77.9h0M976.6 79.6h0M976.9 79.4h0M977.3 83.1h0M977.6 77.4h0M977.9 79.6h0M978.2 81.7h0M978.6 80.7h0M978.9 74.5h0M979.2 75.4h0M979.5 75.8h0M979.9 78.4h0M980.2 78.5h0M980.5 71.2h0M980.9 76.2h0M981.2 76.6h0M981.5 79.0h0M981.8 75.8h0M982.2 76.6h0M982.5 78.2h0M982.8 70.7h0M983.1 73.0h0M983.5 69.5h0M983.8 80.7h0M984.1 72.5h0M984.5 70.9h0M984.8 76.2h0M985.1 82.2h0M985.4 76.9h0M985.8 78.1h0M986.1 80.3h0M986.4 91.5h0M986.7 81.8h0M987.1 78.1h0M987.4 77.7h0M987.7 76.3h0M988.0 74.4h0M988.4 79.6h0M988.7 77.4h0M989.0 84.1h0M989.4 80.1h0M989.7 83.8h0M990.0 74.8h0M990.3 75.3h0M990.7 78.6h0M991.0 79.0h0M991.3 76.3h0M991.6 82.7h0M992.0 78.1h0M992.3 78.8h0M992.6 78.9h0M992.9 87.1h0M993.3 81.8h0M993.6 79.0h0M993.9 71.0h0M994.3 70.1h0M994.6 74.0h0M994.9 75.4h0M995.2 75.9h0M995.6 71.4h0M995.9 75.7h0M996.2 77.3h0M996.5 74.9h0M996.9 75.0h0M997.2 73.3h0M997.5 74.7h0M997.9 73.9h0M998.2 78.4h0M998.5 71.8h0M998.8 71.2h0M999.2 82.8h0M999.5 73.1h0M999.8 65.5h0M1000.1 80.0h0M1000.5 77.9h0M1000.8 71.9h0M1001.1 73.9h0M1001.4 75.1h0M1001.8 71.9h0M1002.1 70.5h0M1002.4 71.8h0M1002.8 71.9h0M1003.1 72.2h0M1003.4 72.6h0M1003.7 71.9h0M1004.1 70.7h0M1004.4 70.8h0M1004.7 67.2h0M1005.0 75.0h0M1005.4 63.4h0M1005.7 68.7h0M1006.0 70.8h0M1006.3 73.2h0M1006.7 72.5h0M1007.0 77.8h0M1007.3 72.7h0M1007.7 76.5h0M1008.0 78.0h0M1008.3 77.0h0M1008.6 76.5h0M1009.0 83.7h0M1009.3 80.1h0M1009.6 81.7h0M1009.9 82.8h0M1010.3 80.9h0M1010.6 83.3h0M1010.9 82.8h0M1011.3 82.8h0M1011.6 82.8h0M1011.9 85.1h0M1012.2 87.6h0M1012.6 82.5h0M1012.9 90.5h0M1013.2 82.3h0M1013.5 85.5h0M1013.9 85.1h0M1014.2 79.3h0M1014.5 82.1h0M1014.8 89.3h0M1015.2 82.8h0M1015.5 84.0h0M1015.8 90.9h0M1016.2 89.9h0M1016.5 93.2h0M1016.8 91.9h0M1017.1 87.8h0M1017.5 87.9h0M1017.8 87.8h0M1018.1 85.8h0M1018.4 82.0h0M1018.8 89.5h0M1019.1 84.4h0M1019.4 86.0h0M1019.7 82.7h0M1020.1 87.7h0M1020.4 89.1h0M1020.7 82.1h0M1021.1 87.8h0M1021.4 92.3h0M1021.7 89.4h0M1022.0 82.1h0M1022.4 84.8h0M1022.7 89.9h0M1023.0 91.7h0M1023.3 85.0h0M1023.7 89.5h0M1024.0 92.1h0M1024.3 87.9h0M1024.7 89.2h0M1025.0 89.6h0M1025.3 87.5h0M1025.6 96.2h0M1026.0 91.2h0M1026.3 89.6h0M1026.6 92.9h0M1026.9 89.2h0M1027.3 88.7h0M1027.6 89.6h0M1027.9 84.1h0M1028.2 89.0h0M1028.6 88.9h0M1028.9 87.9h0M1029.2 83.8h0M1029.6 86.7h0M1029.9 82.4h0M1030.2 89.1h0M1030.5 88.3h0M1030.9 88.1h0M1031.2 86.4h0M1031.5 82.6h0M1031.8 82.1h0M1032.2 83.6h0M1032.5 84.0h0M1032.8 87.6h0M1033.1 87.4h0M1033.5 85.4h0M1033.8 86.6h0M1034.1 83.1h0M1034.5 84.9h0M1034.8 77.1h0M1035.1 78.9h0M1035.4 78.4h0M1035.8 82.3h0M1036.1 82.9h0M1036.4 82.9h0M1036.7 86.5h0M1037.1 78.4h0M1037.4 84.6h0M1037.7 84.8h0M1038.1 80.0h0M1038.4 84.8h0M1038.7 77.9h0M1039.0 76.9h0M1039.4 79.7h0M1039.7 83.6h0M1040.0 82.0h0M1040.3 75.9h0M1040.7 80.3h0M1041.0 82.2h0M1041.3 87.3h0M1041.6 84.8h0M1042.0 83.3h0M1042.3 81.0h0M1042.6 83.9h0M1043.0 78.5h0M1043.3 83.4h0M1043.6 81.4h0M1043.9 79.4h0M1044.3 81.0h0M1044.6 78.4h0M1044.9 77.1h0M1045.2 84.3h0M1045.6 80.0h0M1045.9 77.2h0M1046.2 76.0h0M1046.5 79.7h0M1046.9 79.7h0M1047.2 82.8h0M1047.5 84.5h0M1047.9 81.7h0M1048.2 77.0h0M1048.5 85.4h0M1048.8 82.1h0M1049.2 83.4h0M1049.5 90.1h0M1049.8 77.1h0M1050.1 81.5h0M1050.5 79.9h0M1050.8 85.5h0M1051.1 78.6h0M1051.4 79.7h0M1051.8 86.0h0M1052.1 81.5h0M1052.4 79.8h0M1052.8 85.0h0M1053.1 76.8h0M1053.4 89.6h0M1053.7 82.2h0M1054.1 83.0h0M1054.4 80.5h0M1054.7 78.3h0M1055.0 79.8h0M1055.4 72.4h0M1055.7 80.3h0M1056.0 79.1h0M1056.4 80.6h0M1056.7 77.4h0M1057.0 78.1h0M1057.3 81.6h0M1057.7 82.9h0M1058.0 75.5h0M1058.3 80.2h0M1058.6 86.5h0M1059.0 79.4h0M1059.3 77.9h0M1059.6 83.0h0M1059.9 79.5h0M1060.3 80.4h0M1060.6 86.1h0M1060.9 74.8h0M1061.3 77.3h0M1061.6 74.1h0M1061.9 78.8h0M1062.2 77.8h0M1062.6 85.3h0M1062.9 83.9h0M1063.2 77.6h0M1063.5 87.3h0M1063.9 84.2h0M1064.2 82.0h0M1064.5 83.4h0M1064.8 79.3h0M1065.2 78.4h0M1065.5 78.3h0M1065.8 79.1h0M1066.2 81.5h0M1066.5 81.7h0M1066.8 82.4h0M1067.1 88.2h0M1067.5 84.0h0M1067.8 89.0h0M1068.1 85.4h0M1068.4 87.3h0M1068.8 82.9h0M1069.1 87.6h0M1069.4 85.8h0M1069.8 83.9h0M1070.1 87.6h0M1070.4 88.6h0M1070.7 89.1h0M1071.1 88.1h0M1071.4 81.0h0M1071.7 81.6h0M1072.0 78.2h0M1072.4 85.7h0M1072.7 89.4h0M1073.0 88.2h0M1073.3 88.9h0M1073.7 88.4h0M1074.0 88.4h0M1074.3 89.2h0M1074.7 83.2h0M1075.0 87.3h0M1075.3 92.7h0M1075.6 90.3h0M1076.0 87.4h0M1076.3 87.7h0M1076.6 87.9h0M1076.9 86.5h0M1077.3 86.1h0M1077.6 83.1h0M1077.9 89.5h0M1078.2 85.4h0M1078.6 85.1h0M1078.9 91.9h0M1079.2 88.6h0M1079.6 85.6h0M1079.9 91.8h0M1080.2 84.9h0M1080.5 92.1h0M1080.9 88.9h0M1081.2 86.7h0M1081.5 82.0h0M1081.8 89.8h0M1082.2 82.2h0M1082.5 83.5h0M1082.8 92.4h0M1083.2 86.3h0M1083.5 92.3h0M1083.8 86.2h0M1084.1 89.8h0M1084.5 87.4h0M1084.8 88.9h0M1085.1 87.8h0M1085.4 85.0h0M1085.8 91.5h0M1086.1 91.3h0M1086.4 83.8h0M1086.7 90.3h0M1087.1 86.7h0M1087.4 85.9h0M1087.7 87.0h0M1088.1 85.5h0M1088.4 87.0h0M1088.7 80.1h0M1089.0 80.8h0M1089.4 82.5h0M1089.7 85.8h0M1090.0 80.9h0M1090.3 85.9h0M1090.7 84.7h0M1091.0 81.2h0M1091.3 84.3h0M1091.6 89.0h0M1092.0 82.9h0M1092.3 81.1h0M1092.6 87.9h0M1093.0 89.4h0M1093.3 80.8h0M1093.6 86.7h0M1093.9 77.4h0M1094.3 90.3h0M1094.6 78.9h0M1094.9 88.6h0M1095.2 81.9h0M1095.6 85.7h0M1095.9 75.6h0M1096.2 82.7h0M1096.6 84.1h0M1096.9 84.2h0M1097.2 75.6h0M1097.5 82.0h0M1097.9 84.2h0M1098.2 84.5h0M1098.5 82.8h0M1098.8 75.5h0M1099.2 79.9h0M1099.5 83.0h0M1099.8 78.3h0M1100.1 81.9h0M1100.5 78.3h0M1100.8 80.5h0M1101.1 82.2h0M1101.5 78.8h0M1101.8 89.0h0M1102.1 78.8h0M1102.4 80.4h0M1102.8 79.9h0M1103.1 82.8h0M1103.4 82.7h0M1103.7 79.8h0M1104.1 95.1h0M1104.4 82.2h0M1104.7 82.7h0M1105.0 76.9h0M1105.4 78.7h0M1105.7 84.2h0M1106.0 85.0h0M1106.4 86.5h0M1106.7 81.3h0M1107.0 86.3h0M1107.3 84.0h0M1107.7 82.0h0M1108.0 82.4h0M1108.3 86.7h0M1108.6 85.1h0M1109.0 83.2h0M1109.3 79.8h0M1109.6 78.7h0M1110.0 79.9h0M1110.3 85.0h0M1110.6 84.3h0M1110.9 83.1h0M1111.3 85.2h0M1111.6 84.5h0M1111.9 86.0h0M1112.2 83.5h0M1112.6 86.9h0M1112.9 85.4h0M1113.2 88.6h0M1113.5 85.8h0M1113.9 84.0h0M1114.2 82.5h0M1114.5 79.0h0M1114.9 79.7h0M1115.2 92.0h0M1115.5 89.4h0M1115.8 89.2h0M1116.2 88.3h0M1116.5 88.8h0M1116.8 97.3h0M1117.1 85.4h0M1117.5 88.8h0M1117.8 88.1h0M1118.1 83.8h0M1118.4 84.6h0M1118.8 83.9h0M1119.1 88.4h0M1119.4 85.1h0M1119.8 88.3h0M1120.1 84.5h0M1120.4 89.0h0M1120.7 91.0h0M1121.1 90.7h0M1121.4 83.9h0M1121.7 80.3h0M1122.0 84.1h0M1122.4 85.1h0M1122.7 87.1h0M1123.0 91.2h0M1123.4 86.6h0M1123.7 88.4h0M1124.0 89.7h0M1124.3 88.9h0M1124.7 85.4h0M1125.0 86.1h0M1125.3 89.1h0M1125.6 87.9h0M1126.0 83.7h0M1126.3 90.9h0M1126.6 76.5h0M1126.9 89.5h0M1127.3 89.6h0M1127.6 90.5h0M1127.9 88.3h0M1128.3 91.1h0M1128.6 94.4h0M1128.9 89.4h0M1129.2 95.1h0M1129.6 87.6h0M1129.9 87.6h0M1130.2 96.0h0M1130.5 96.6h0M1130.9 88.8h0M1131.2 89.1h0M1131.5 85.1h0M1131.8 90.8h0M1132.2 89.7h0M1132.5 84.7h0M1132.8 90.9h0M1133.2 92.8h0M1133.5 90.2h0M1133.8 95.5h0M1134.1 93.7h0M1134.5 91.0h0M1134.8 89.6h0M1135.1 92.5h0M1135.4 95.3h0M1135.8 93.9h0M1136.1 93.3h0M1136.4 89.8h0M1136.8 91.0h0M1137.1 93.6h0M1137.4 90.5h0M1137.7 87.6h0M1138.1 97.8h0M1138.4 85.6h0M1138.7 89.9h0M1139.0 91.2h0M1139.4 92.3h0M1139.7 85.0h0M1140.0 89.8h0M1140.3 86.0h0M1140.7 89.8h0M1141.0 90.8h0M1141.3 94.1h0M1141.7 89.6h0M1142.0 88.1h0M1142.3 85.4h0M1142.6 85.5h0M1143.0 79.4h0M1143.3 86.8h0M1143.6 81.3h0M1143.9 79.0h0M1144.3 82.8h0M1144.6 81.5h0M1144.9 79.9h0M1145.2 79.5h0M1145.6 83.5h0M1145.9 80.2h0M1146.2 76.0h0M1146.6 77.2h0M1146.9 84.7h0M1147.2 75.8h0M1147.5 82.4h0M1147.9 76.6h0M1148.2 78.3h0M1148.5 76.1h0M1148.8 70.3h0M1149.2 74.1h0M1149.5 82.4h0M1149.8 74.4h0M1150.1 78.0h0M1150.5 74.7h0M1150.8 76.1h0M1151.1 77.5h0M1151.5 77.2h0M1151.8 81.5h0M1152.1 73.1h0M1152.4 72.4h0M1152.8 70.8h0M1153.1 71.6h0M1153.4 72.0h0M1153.7 76.5h0M1154.1 71.8h0M1154.4 78.2h0M1154.7 74.8h0M1155.1 74.8h0M1155.4 73.1h0M1155.7 75.4h0M1156.0 74.8h0M1156.4 78.1h0M1156.7 71.4h0M1157.0 72.9h0M1157.3 73.8h0M1157.7 72.3h0M1158.0 70.5h0M1158.3 68.2h0M1158.6 69.6h0M1159.0 75.2h0M1159.3 72.6h0M1159.6 77.1h0M1160.0 80.8h0M1160.3 79.6h0M1160.6 80.7h0M1160.9 79.4h0M1161.3 73.2h0M1161.6 71.2h0M1161.9 78.2h0M1162.2 71.3h0M1162.6 73.9h0M1162.9 71.5h0M1163.2 77.0h0M1163.5 70.3h0M1163.9 75.7h0M1164.2 72.1h0M1164.5 69.3h0M1164.9 73.5h0M1165.2 73.6h0M1165.5 69.6h0M1165.8 69.9h0M1166.2 69.9h0M1166.5 70.1h0M1166.8 72.4h0M1167.1 72.0h0M1167.5 72.7h0M1167.8 69.4h0M1168.1 73.3h0M1168.5 68.5h0M1168.8 66.3h0M1169.1 67.4h0M1169.4 71.2h0M1169.8 70.5h0M1170.1 73.6h0M1170.4 65.7h0M1170.7 68.7h0M1171.1 71.5h0M1171.4 66.9h0M1171.7 70.4h0M1172.0 68.7h0M1172.4 68.0h0M1172.7 75.2h0M1173.0 70.0h0M1173.4 76.3h0M1173.7 71.0h0M1174.0 68.5h0M1174.3 69.4h0M1174.7 71.5h0M1175.0 70.8h0M1175.3 72.7h0M1175.6 66.6h0M1176.0 75.4h0M1176.3 74.0h0M1176.6 74.4h0M1176.9 64.6h0M1177.3 61.0h0M1177.6 67.9h0M1177.9 69.8h0M1178.3 68.5h0M1178.6 67.0h0M1178.9 66.6h0M1179.2 70.7h0M1179.6 66.2h0M1179.9 74.4h0M1180.2 67.5h0M1180.5 70.5h0M1180.9 73.9h0M1181.2 68.6h0M1181.5 69.5h0M1181.9 75.3h0M1182.2 68.3h0M1182.5 74.3h0M1182.8 72.1h0M1183.2 69.0h0M1183.5 70.1h0M1183.8 70.2h0M1184.1 72.1h0M1184.5 73.5h0M1184.8 73.7h0M1185.1 74.2h0M1185.4 68.7h0M1185.8 71.8h0M1186.1 74.8h0M1186.4 75.8h0M1186.8 74.1h0M1187.1 69.1h0M1187.4 71.8h0M1187.7 75.6h0M1188.1 76.6h0M1188.4 72.2h0M1188.7 74.9h0M1189.0 70.8h0M1189.4 75.9h0M1189.7 70.0h0M1190.0 72.8h0M1190.3 68.5h0M1190.7 74.9h0M1191.0 74.7h0M1191.3 73.3h0M1191.7 72.3h0M1192.0 74.0h0M1192.3 70.8h0M1192.6 71.3h0M1193.0 73.2h0M1193.3 77.8h0M1193.6 78.1h0M1193.9 72.7h0M1194.3 74.9h0M1194.6 68.1h0M1194.9 75.5h0M1195.3 77.3h0M1195.6 80.3h0M1195.9 80.6h0M1196.2 81.8h0M1196.6 80.7h0M1196.9 86.4h0M1197.2 82.5h0M1197.5 85.9h0M1197.9 80.7h0M1198.2 81.3h0M1198.5 82.7h0M1198.8 80.7h0M1199.2 81.6h0M1199.5 83.7h0M1199.8 81.0h0M1200.2 75.7h0M1200.5 86.9h0M1200.8 81.4h0M1201.1 87.2h0M1201.5 83.4h0M1201.8 80.6h0M1202.1 84.4h0M1202.4 80.2h0M1202.8 84.0h0M1203.1 82.9h0M1203.4 86.1h0M1203.7 87.6h0M1204.1 81.2h0M1204.4 88.1h0M1204.7 80.9h0M1205.1 85.5h0M1205.4 81.1h0M1205.7 80.7h0M1206.0 94.3h0M1206.4 93.3h0M1206.7 92.3h0M1207.0 82.2h0M1207.3 85.4h0M1207.7 85.9h0M1208.0 84.5h0M1208.3 84.4h0M1208.7 80.9h0M1209.0 81.3h0M1209.3 81.1h0M1209.6 82.1h0M1210.0 83.7h0M1210.3 81.7h0M1210.6 81.3h0M1210.9 82.7h0M1211.3 85.3h0M1211.6 87.4h0M1211.9 84.1h0M1212.2 84.3h0M1212.6 77.2h0M1212.9 82.9h0M1213.2 86.5h0M1213.6 81.0h0M1213.9 81.4h0M1214.2 81.1h0M1214.5 89.8h0M1214.9 82.8h0M1215.2 81.5h0M1215.5 83.4h0M1215.8 86.4h0M1216.2 85.0h0M1216.5 77.3h0M1216.8 85.7h0M1217.1 83.4h0M1217.5 81.1h0M1217.8 81.6h0M1218.1 78.7h0M1218.5 82.4h0M1218.8 80.9h0M1219.1 82.7h0M1219.4 80.4h0M1219.8 79.8h0M1220.1 77.9h0M1220.4 77.9h0M1220.7 76.9h0M1221.1 76.0h0M1221.4 77.2h0M1221.7 74.8h0M1222.1 72.4h0M1222.4 73.0h0M1222.7 78.6h0M1223.0 81.7h0M1223.4 77.9h0M1223.7 73.3h0M1224.0 71.4h0M1224.3 74.1h0M1224.7 76.0h0M1225.0 74.6h0M1225.3 70.9h0M1225.6 74.1h0M1226.0 73.1h0M1226.3 83.6h0M1226.6 75.4h0M1227.0 80.6h0M1227.3 80.9h0M1227.6 77.8h0M1227.9 79.1h0M1228.3 77.1h0M1228.6 85.8h0M1228.9 80.9h0M1229.2 85.3h0M1229.6 79.1h0M1229.9 77.6h0M1230.2 80.9h0M1230.5 79.3h0M1230.9 77.5h0M1231.2 76.3h0M1231.5 79.8h0M1231.9 76.2h0M1232.2 78.0h0M1232.5 76.3h0M1232.8 72.5h0M1233.2 78.7h0M1233.5 82.2h0M1233.8 75.2h0M1234.1 77.3h0M1234.5 82.0h0M1234.8 80.8h0M1235.1 72.2h0M1235.5 81.5h0M1235.8 78.1h0M1236.1 73.9h0M1236.4 70.9h0M1236.8 75.7h0M1237.1 79.4h0M1237.4 76.5h0M1237.7 77.9h0M1238.1 69.1h0M1238.4 75.0h0M1238.7 70.7h0M1239.0 77.1h0M1239.4 77.7h0M1239.7 69.0h0M1240.0 70.1h0M1240.4 78.5h0M1240.7 79.0h0M1241.0 78.1h0M1241.3 80.1h0M1241.7 82.9h0M1242.0 75.6h0M1242.3 74.4h0M1242.6 78.2h0M1243.0 72.1h0M1243.3 72.5h0M1243.6 74.7h0M1243.9 76.2h0M1244.3 74.4h0M1244.6 76.9h0M1244.9 74.8h0M1245.3 82.6h0M1245.6 81.6h0M1245.9 81.0h0M1246.2 82.1h0M1246.6 80.3h0M1246.9 76.1h0M1247.2 77.6h0M1247.5 79.8h0M1247.9 83.6h0M1248.2 77.6h0M1248.5 89.3h0M1248.8 79.8h0M1249.2 83.2h0M1249.5 79.3h0M1249.8 77.0h0M1250.2 82.7h0M1250.5 73.0h0M1250.8 84.1h0M1251.1 79.7h0M1251.5 82.5h0M1251.8 80.2h0M1252.1 88.9h0M1252.4 81.6h0M1252.8 82.8h0M1253.1 84.9h0M1253.4 85.3h0M1253.8 78.7h0M1254.1 77.0h0M1254.4 82.8h0M1254.7 85.3h0M1255.1 81.0h0M1255.4 77.8h0M1255.7 81.3h0M1256.0 86.9h0M1256.4 83.7h0M1256.7 82.6h0M1257.0 82.2h0M1257.3 83.8h0M1257.7 82.1h0M1258.0 81.7h0M1258.3 81.2h0M1258.7 80.1h0M1259.0 82.4h0M1259.3 86.1h0M1259.6 83.7h0M1260.0 82.7h0M1260.3 86.0h0M1260.6 85.6h0M1260.9 83.2h0M1261.3 82.0h0M1261.6 86.6h0M1261.9 92.9h0M1262.2 84.5h0M1262.6 81.3h0M1262.9 86.2h0M1263.2 83.9h0M1263.6 83.7h0M1263.9 85.4h0M1264.2 92.6h0M1264.5 89.2h0M1264.9 92.6h0M1265.2 92.1h0M1265.5 90.1h0M1265.8 91.0h0M1266.2 85.5h0M1266.5 86.7h0M1266.8 84.2h0M1267.2 93.3h0M1267.5 91.8h0M1267.8 89.5h0M1268.1 90.2h0M1268.5 88.1h0M1268.8 86.7h0M1269.1 87.7h0M1269.4 85.4h0M1269.8 87.3h0M1270.1 80.8h0M1270.4 82.3h0M1270.7 77.4h0M1271.1 83.2h0M1271.4 82.1h0M1271.7 81.1h0M1272.1 81.8h0M1272.4 83.2h0M1272.7 81.2h0M1273.0 76.6h0M1273.4 79.8h0M1273.7 72.2h0M1274.0 75.2h0M1274.3 76.6h0M1274.7 79.3h0M1275.0 80.7h0M1275.3 77.8h0M1275.6 80.0h0M1276.0 79.2h0M1276.3 78.5h0M1276.6 78.6h0M1277.0 71.8h0M1277.3 77.7h0M1277.6 79.3h0M1277.9 76.9h0M1278.3 70.8h0M1278.6 75.1h0M1278.9 75.4h0M1279.2 72.3h0M1279.6 75.4h0M1279.9 71.2h0M1280.2 72.2h0M1280.6 72.9h0M1280.9 79.9h0M1281.2 72.5h0M1281.5 71.6h0M1281.9 72.6h0M1282.2 71.5h0M1282.5 72.7h0M1282.8 65.7h0M1283.2 72.2h0M1283.5 73.1h0M1283.8 74.5h0M1284.1 76.8h0M1284.5 73.9h0M1284.8 75.8h0M1285.1 73.3h0M1285.5 72.2h0M1285.8 72.6h0M1286.1 71.2h0M1286.4 77.8h0M1286.8 79.0h0M1287.1 74.8h0M1287.4 71.0h0M1287.7 73.0h0M1288.1 78.0h0M1288.4 76.5h0M1288.7 74.2h0M1289.0 73.2h0M1289.4 74.4h0M1289.7 77.7h0M1290.0 79.2h0M1290.4 73.7h0M1290.7 77.7h0M1291.0 75.8h0M1291.3 69.9h0M1291.7 66.9h0M1292.0 74.2h0M1292.3 71.5h0M1292.6 73.1h0M1293.0 69.6h0M1293.3 68.4h0M1293.6 78.6h0M1294.0 74.8h0M1294.3 73.8h0M1294.6 77.0h0M1294.9 77.0h0M1295.3 70.3h0M1295.6 74.5h0M1295.9 70.5h0M1296.2 73.9h0M1296.6 70.9h0M1296.9 79.7h0M1297.2 71.4h0M1297.5 74.1h0M1297.9 75.1h0M1298.2 72.1h0M1298.5 76.2h0M1298.9 72.6h0M1299.2 71.5h0M1299.5 74.7h0M1299.8 69.6h0M1300.2 76.2h0M1300.5 73.6h0M1300.8 75.0h0M1301.1 74.7h0M1301.5 70.5h0M1301.8 67.8h0M1302.1 71.7h0M1302.4 73.9h0M1302.8 68.4h0" stroke="#000" stroke-width="3.70" stroke-linecap="round" fill="none"/>
<line x1="105.5" y1="96.7" x2="1361.0" y2="96.7" stroke="#008000" stroke-width="2.08"/>
<line x1="162.1" y1="321.5" x2="162.1" y2="35.5" stroke="#800080" stroke-width="2.08" stroke-dasharray="2.08 3.44"/>
<line x1="289.0" y1="321.5" x2="289.0" y2="35.5" stroke="#800080" stroke-width="2.08" stroke-dasharray="2.08 3.44"/>
<line x1="1302.9" y1="321.5" x2="1302.9" y2="35.5" stroke="#800080" stroke-width="2.08" stroke-dasharray="2.08 3.44"/>
</g>
<rect x="105.5" y="35.5" width="1380.0" height="286.0" fill="none" stroke="#000" stroke-width="1"/>
<line x1="162.5" y1="321.5" x2="162.5" y2="326.7" stroke="#000" stroke-width="1"/>
<text x="163.8" y="341.8" text-anchor="middle" font-size="13.89">0</text>
<line x1="322.5" y1="321.5" x2="322.5" y2="326.7" stroke="#000" stroke-width="1"/>
<text x="321.6" y="341.8" text-anchor="middle" font-size="13.89">500</text>
<line x1="481.5" y1="321.5" x2="481.5" y2="326.7" stroke="#000" stroke-width="1"/>
<text x="481.0" y="341.8" text-anchor="middle" font-size="13.89">1000</text>
<line x1="640.5" y1="321.5" x2="640.5" y2="326.7" stroke="#000" stroke-width="1"/>
<text x="640.3" y="341.8" text-anchor="middle" font-size="13.89">1500</text>
<line x1="800.5" y1="321.5" x2="800.5" y2="326.7" stroke="#000" stroke-width="1"/>
<text x="799.7" y="341.8" text-anchor="middle" font-size="13.89">2000</text>
<line x1="959.5" y1="321.5" x2="959.5" y2="326.7" stroke="#000" stroke-width="1"/>
<text x="959.0" y="341.8" text-anchor="middle" font-size="13.89">2500</text>
<line x1="1118.5" y1="321.5" x2="1118.5" y2="326.7" stroke="#000" stroke-width="1"/>
<text x="1118.4" y="341.8" text-anchor="middle" font-size="13.89">3000</text>
<line x1="1278.5" y1="321.5" x2="1278.5" y2="326.7" stroke="#000" stroke-width="1"/>
<text x="1277.8" y="341.8" text-anchor="middle" font-size="13.89">3500</text>
<line x1="1437.5" y1="321.5" x2="1437.5" y2="326.7" stroke="#000" stroke-width="1"/>
<text x="1437.1" y="341.8" text-anchor="middle" font-size="13.89">4000</text>
<line x1="100.3" y1="56.5" x2="105.5" y2="56.5" stroke="#000" stroke-width="1"/>
<text x="95.8" y="61.7" text-anchor="end" font-size="13.89">9.2</text>
<line x1="100.3" y1="100.5" x2="105.5" y2="100.5" stroke="#000" stroke-width="1"/>
<text x="95.8" y="106.1" text-anchor="end" font-size="13.89">9.1</text>
<line x1="100.3" y1="145.5" x2="105.5" y2="145.5" stroke="#000" stroke-width="1"/>
<text x="95.8" y="150.5" text-anchor="end" font-size="13.89">9.0</text>
<line x1="100.3" y1="189.5" x2="105.5" y2="189.5" stroke="#000" stroke-width="1"/>
<text x="95.8" y="194.9" text-anchor="end" font-size="13.89">8.9</text>
<line x1="100.3" y1="233.5" x2="105.5" y2="233.5" stroke="#000" stroke-width="1"/>
<text x="95.8" y="239.3" text-anchor="end" font-size="13.89">8.8</text>
<line x1="100.3" y1="278.5" x2="105.5" y2="278.5" stroke="#000" stroke-width="1"/>
<text x="95.8" y="283.7" text-anchor="end" font-size="13.89">8.7</text>
<text x="795.5" y="26.7" text-anchor="middle" font-size="16.67">AGASC ID 1089213696.0</text>
<text x="225.4" y="311.6" text-anchor="middle" font-size="13.89">43111</text>
<text x="795.5" y="292.0" text-anchor="middle" font-size="13.89">43109</text>
<rect x="1361.3" y="42.5" width="117.4" height="27.2" rx="2.8" fill="#fff" fill-opacity="0.8" stroke="#ccc" stroke-opacity="0.8" stroke-width="1.11"/>
<line x1="1366.1" y1="53.9" x2="1396" y2="53.9" stroke="#008000" stroke-width="2.08"/>
<text x="1407.0" y="58.8" font-size="13.89">mag<tspan font-size="9.72" font-style="oblique" dy="2.1">AGASC</tspan></text>
<rect x="1348.1" y="247.1" width="130.6" height="67.3" rx="2.8" fill="#fff" fill-opacity="0.8" stroke="#ccc" stroke-opacity="0.8" stroke-width="1.11"/>
<circle cx="1367.4" cy="260.4" r="1.90" fill="#ff0000"/>
<text x="1392.7" y="263.9" font-size="13.89">not OK</text>
<circle cx="1367.4" cy="281.3" r="1.75" fill="#ffa500"/>
<text x="1392.7" y="284.9" font-size="13.89">Highlighted</text>
<circle cx="1367.4" cy="302.2" r="1.90" fill="#000"/>
<text x="1392.7" y="305.5" font-size="13.89">OK</text>
<g clip-path="url(#c1)">
<path d="M269.4 478.0h0M309.4 623.5h0M369.4 593.0h0M411.4 645.0h0M479.4 629.0h0M741.4 592.0h0M1040.4 441.4h0M1186.4 455.4h0" stroke="#ffa500" stroke-width="3.45" stroke-linecap="round" fill="none"/>
<path d="M185.0 535.6h0M185.3 533.5h0M185.7 527.6h0M186.0 524.4h0M186.3 528.9h0M186.6 525.8h0M187.0 522.7h0M187.3 531.5h0M187.6 543.5h0M187.9 533.0h0M188.3 542.4h0M188.6 547.3h0M188.9 542.0h0M189.2 553.5h0M189.6 525.6h0M189.9 544.6h0M190.2 521.4h0M190.6 548.0h0M190.9 539.8h0M191.2 503.8h0M191.5 509.0h0M191.9 528.2h0M192.2 528.0h0M192.5 522.6h0M192.8 529.4h0M193.2 535.7h0M193.5 528.6h0M193.8 523.7h0M194.2 537.6h0M194.5 510.5h0M194.8 533.0h0M195.1 514.5h0M195.5 536.1h0M195.8 525.0h0M196.1 526.8h0M196.4 536.4h0M196.8 526.2h0M197.1 531.4h0M197.4 522.9h0M197.7 537.4h0M198.1 543.4h0M198.4 549.0h0M198.7 533.1h0M199.1 546.0h0M199.4 543.2h0M199.7 534.9h0M200.0 545.9h0M200.4 550.9h0M200.7 534.9h0M201.0 545.0h0M201.3 547.3h0M201.7 542.3h0M202.0 533.1h0M202.3 553.3h0M202.6 538.3h0M203.0 548.8h0M203.3 535.5h0M203.6 548.7h0M204.0 553.9h0M204.3 529.5h0M204.6 563.4h0M204.9 545.0h0M205.3 530.7h0M205.6 545.2h0M205.9 528.6h0M206.2 531.8h0M206.6 544.5h0M206.9 545.9h0M207.2 538.8h0M207.6 532.8h0M207.9 522.6h0M208.2 529.0h0M208.5 510.8h0M208.9 536.7h0M209.2 533.6h0M209.5 536.7h0M209.8 539.1h0M210.2 542.0h0M210.5 525.5h0M210.8 529.7h0M211.1 533.1h0M211.5 522.4h0M211.8 534.1h0M212.1 557.1h0M212.5 531.7h0M212.8 543.0h0M213.1 525.6h0M213.4 540.4h0M213.8 541.0h0M214.1 546.1h0M214.4 551.1h0M214.7 564.5h0M215.1 547.4h0M215.4 550.9h0M215.7 539.3h0M216.0 555.3h0M216.4 540.8h0M216.7 552.8h0M217.0 537.4h0M217.4 547.1h0M217.7 514.8h0M218.0 532.8h0M218.3 544.7h0M218.7 535.2h0M219.0 537.1h0M219.3 539.8h0M219.6 531.4h0M220.0 548.1h0M220.3 568.5h0M220.6 555.3h0M221.0 537.3h0M221.3 540.8h0M221.6 539.4h0M221.9 552.2h0M222.3 535.0h0M222.6 532.0h0M222.9 548.8h0M223.2 545.3h0M223.6 570.2h0M223.9 532.7h0M224.2 528.6h0M224.5 533.4h0M224.9 518.8h0M225.2 538.1h0M225.5 522.5h0M225.9 537.2h0M226.2 542.6h0M226.5 543.1h0M226.8 515.6h0M227.2 540.6h0M227.5 541.0h0M227.8 528.4h0M228.1 527.5h0M228.5 528.9h0M228.8 522.0h0M229.1 556.6h0M229.4 518.5h0M229.8 528.1h0M230.1 534.6h0M230.4 531.0h0M230.8 540.6h0M231.1 539.1h0M231.4 534.9h0M231.7 544.6h0M232.1 512.7h0M232.4 528.9h0M232.7 530.4h0M233.0 538.5h0M233.4 544.3h0M233.7 534.0h0M234.0 532.9h0M234.4 545.5h0M234.7 539.9h0M235.0 531.8h0M235.3 556.6h0M235.7 559.1h0M236.0 519.5h0M236.3 535.1h0M236.6 565.6h0M237.0 547.2h0M237.3 538.6h0M237.6 538.1h0M237.9 542.4h0M238.3 538.7h0M238.6 536.0h0M238.9 546.6h0M239.3 530.1h0M239.6 536.1h0M239.9 530.7h0M240.2 542.8h0M240.6 532.3h0M240.9 542.1h0M241.2 551.6h0M241.5 545.5h0M241.9 548.6h0M242.2 537.9h0M242.5 543.5h0M242.8 540.0h0M243.2 540.5h0M243.5 550.5h0M243.8 531.7h0M244.2 552.7h0M244.5 544.2h0M244.8 535.7h0M245.1 537.7h0M245.5 536.4h0M245.8 549.5h0M246.1 543.1h0M246.4 560.4h0M246.8 538.5h0M247.1 518.0h0M247.4 526.0h0M247.7 529.3h0M248.1 545.7h0M248.4 557.4h0M248.7 538.8h0M249.1 538.9h0M249.4 545.9h0M249.7 564.8h0M250.0 556.2h0M250.4 545.5h0M250.7 558.5h0M251.0 572.4h0M251.3 564.1h0M251.7 559.5h0M252.0 564.5h0M252.3 557.9h0M252.7 537.5h0M253.0 537.4h0M253.3 543.0h0M253.6 528.7h0M254.0 547.1h0M254.3 541.2h0M254.6 554.6h0M254.9 529.6h0M255.3 539.0h0M255.6 539.4h0M255.9 546.9h0M256.2 550.2h0M256.6 531.4h0M256.9 530.7h0M257.2 521.6h0M257.6 524.2h0M257.9 544.1h0M258.2 541.9h0M258.5 535.9h0M258.9 538.8h0M259.2 541.8h0M259.5 544.2h0M259.8 533.0h0M260.2 539.7h0M260.5 522.9h0M260.8 532.1h0M261.1 559.9h0M261.5 533.0h0M261.8 541.7h0M262.1 559.6h0M262.5 542.6h0M262.8 537.2h0M263.1 536.8h0M263.4 554.0h0M263.8 538.9h0M264.1 521.4h0M264.4 537.3h0M264.7 528.8h0M265.1 536.2h0M265.4 541.6h0M265.7 534.5h0M266.1 534.9h0M266.4 514.8h0M266.7 517.0h0M267.0 522.5h0M267.4 532.4h0M267.7 536.6h0M268.0 522.0h0M268.3 516.4h0M268.7 533.3h0M269.0 514.4h0M269.3 529.7h0M269.6 522.7h0M270.0 524.5h0M270.3 515.2h0M270.6 524.5h0M271.0 534.2h0M271.3 534.8h0M271.6 538.0h0M271.9 524.6h0M272.3 528.5h0M272.6 516.1h0M272.9 527.5h0M273.2 521.9h0M273.6 524.4h0M273.9 544.1h0M274.2 533.0h0M274.5 515.2h0M274.9 566.0h0M275.2 517.6h0M275.5 507.0h0M275.9 532.7h0M276.2 523.5h0M276.5 508.8h0M276.8 525.3h0M277.2 500.2h0M277.5 517.7h0M277.8 521.6h0M278.1 526.3h0M278.5 531.8h0M278.8 541.7h0M279.1 542.7h0M279.5 540.9h0M279.8 533.0h0M280.1 543.5h0M280.4 541.2h0M280.8 506.1h0M281.1 538.2h0M281.4 541.0h0M281.7 534.1h0M282.1 543.9h0M282.4 530.7h0M282.7 525.7h0M283.0 554.2h0M283.4 547.9h0M283.7 541.8h0M284.0 544.9h0M284.4 543.5h0M284.7 544.5h0M285.0 519.7h0M285.3 535.5h0M285.7 538.1h0M286.0 525.5h0M286.3 537.5h0M286.6 551.7h0M287.0 534.5h0M287.3 528.1h0M287.6 557.4h0M287.9 535.8h0M288.3 522.4h0M306.0 541.9h0M306.3 544.3h0M306.7 551.7h0M307.0 554.3h0M307.3 552.3h0M307.6 525.7h0M308.0 547.4h0M308.3 540.7h0M308.6 535.5h0M308.9 537.0h0M309.3 555.7h0M309.6 564.4h0M309.9 544.0h0M310.2 544.5h0M310.6 552.4h0M310.9 545.6h0M311.2 567.1h0M311.6 540.2h0M311.9 539.9h0M312.2 552.9h0M312.5 550.2h0M312.9 547.6h0M313.2 555.2h0M313.5 569.1h0M313.8 551.4h0M314.2 548.8h0M314.5 539.8h0M314.8 562.1h0M315.2 564.7h0M315.5 544.9h0M315.8 552.6h0M316.1 536.4h0M316.5 559.1h0M316.8 544.2h0M317.1 537.3h0M317.4 542.8h0M317.8 540.6h0M318.1 557.0h0M318.4 555.1h0M318.7 557.5h0M319.1 566.4h0M319.4 547.1h0M319.7 541.9h0M320.1 533.3h0M320.4 559.5h0M320.7 544.6h0M321.0 536.9h0M321.4 544.9h0M321.7 545.4h0M322.0 526.8h0M322.3 550.3h0M322.7 547.5h0M323.0 534.6h0M323.3 539.9h0M323.6 556.8h0M324.0 546.7h0M324.3 543.6h0M324.6 521.1h0M325.0 540.2h0M325.3 542.6h0M325.6 531.2h0M325.9 536.4h0M326.3 526.6h0M326.6 553.5h0M326.9 550.4h0M327.2 553.9h0M327.6 548.9h0M327.9 539.8h0M328.2 531.5h0M328.6 545.2h0M328.9 543.8h0M329.2 561.5h0M329.5 547.4h0M329.9 542.2h0M330.2 554.4h0M330.5 545.0h0M330.8 543.3h0M331.2 532.5h0M331.5 516.1h0M331.8 545.1h0M332.1 527.7h0M332.5 550.2h0M332.8 520.6h0M333.1 511.6h0M333.5 532.9h0M333.8 531.4h0M334.1 523.8h0M334.4 508.2h0M334.8 528.5h0M335.1 501.3h0M335.4 508.6h0M335.7 502.9h0M336.1 512.3h0M336.4 528.9h0M336.7 525.7h0M337.0 529.7h0M337.4 536.9h0M337.7 548.2h0M338.0 516.0h0M338.4 522.0h0M338.7 527.8h0M339.0 533.0h0M339.3 515.0h0M339.7 525.7h0M340.0 529.1h0M340.3 523.5h0M340.6 507.3h0M341.0 518.4h0M341.3 518.6h0M341.6 533.1h0M342.0 525.7h0M342.3 536.7h0M342.6 528.9h0M342.9 538.6h0M343.3 504.4h0M343.6 520.1h0M343.9 532.8h0M344.2 506.5h0M344.6 529.8h0M344.9 518.0h0M345.2 538.7h0M345.5 519.5h0M345.9 537.4h0M346.2 537.3h0M346.5 539.4h0M346.9 541.6h0M347.2 567.9h0M347.5 546.5h0M347.8 530.8h0M348.2 551.3h0M348.5 546.9h0M348.8 540.4h0M349.1 561.2h0M349.5 538.5h0M349.8 564.0h0M350.1 558.3h0M350.4 553.3h0M350.8 560.4h0M351.1 533.8h0M351.4 552.5h0M351.8 566.6h0M352.1 532.0h0M352.4 534.0h0M352.7 536.8h0M353.1 543.6h0M353.4 552.1h0M353.7 523.2h0M354.0 542.4h0M354.4 560.7h0M354.7 545.9h0M355.0 556.2h0M355.4 578.5h0M355.7 568.1h0M356.0 559.0h0M356.3 533.9h0M356.7 551.1h0M357.0 555.8h0M357.3 544.9h0M357.6 550.2h0M358.0 588.5h0M358.3 554.4h0M358.6 549.2h0M358.9 527.2h0M359.3 548.7h0M359.6 546.0h0M359.9 576.0h0M360.3 577.0h0M360.6 572.6h0M360.9 554.7h0M361.2 567.5h0M361.6 570.9h0M361.9 565.6h0M362.2 581.2h0M362.5 549.7h0M362.9 563.7h0M363.2 572.5h0M363.5 586.3h0M363.8 575.6h0M364.2 560.9h0M364.5 565.7h0M364.8 553.6h0M365.2 544.9h0M365.5 566.9h0M365.8 564.7h0M366.1 565.8h0M366.5 559.8h0M366.8 561.8h0M367.1 546.2h0M367.4 578.5h0M367.8 585.0h0M368.1 573.9h0M368.4 587.8h0M368.7 593.6h0M369.1 571.1h0M369.4 587.7h0M369.7 578.4h0M370.1 578.4h0M370.4 580.1h0M370.7 561.7h0M371.0 584.0h0M371.4 577.4h0M371.7 555.7h0M372.0 567.1h0M372.3 564.0h0M372.7 566.4h0M373.0 569.2h0M373.3 572.9h0M373.7 552.4h0M374.0 588.6h0M374.3 568.9h0M374.6 555.4h0M375.0 568.2h0M375.3 561.1h0M375.6 551.2h0M375.9 573.0h0M376.3 545.8h0M376.6 557.4h0M376.9 560.6h0M377.2 527.6h0M377.6 556.6h0M377.9 545.5h0M378.2 556.7h0M378.6 543.0h0M378.9 552.6h0M379.2 535.0h0M379.5 538.1h0M379.9 542.5h0M380.2 539.6h0M380.5 575.7h0M380.8 548.4h0M381.2 549.5h0M381.5 549.6h0M381.8 546.5h0M382.1 549.2h0M382.5 545.7h0M382.8 535.0h0M383.1 533.8h0M383.5 557.8h0M383.8 548.4h0M384.1 547.0h0M384.4 531.1h0M384.8 525.5h0M385.1 566.3h0M385.4 559.0h0M385.7 556.3h0M386.1 560.5h0M386.4 547.6h0M386.7 543.6h0M387.1 558.6h0M387.4 549.2h0M387.7 544.8h0M388.0 544.5h0M388.4 552.7h0M388.7 560.6h0M389.0 552.5h0M389.3 503.4h0M389.7 530.2h0M390.0 541.4h0M390.3 537.3h0M390.6 523.2h0M391.0 517.5h0M391.3 537.5h0M391.6 527.3h0M392.0 531.7h0M392.3 532.1h0M392.6 544.5h0M392.9 535.3h0M393.3 519.2h0M393.6 529.3h0M393.9 527.2h0M394.2 535.6h0M394.6 515.1h0M394.9 504.8h0M395.2 541.4h0M395.5 531.4h0M395.9 530.2h0M396.2 535.7h0M396.5 525.0h0M396.9 533.0h0M397.2 510.7h0M397.5 522.4h0M397.8 525.2h0M398.2 523.1h0M398.5 541.0h0M398.8 518.8h0M399.1 514.0h0M399.5 519.8h0M399.8 517.2h0M400.1 523.5h0M400.5 504.0h0M400.8 499.6h0M401.1 524.7h0M401.4 490.7h0M401.8 510.8h0M402.1 507.1h0M402.4 517.3h0M402.7 531.4h0M403.1 514.6h0M403.4 502.7h0M403.7 505.5h0M404.0 509.6h0M404.4 524.1h0M404.7 516.2h0M405.0 518.5h0M405.4 517.1h0M405.7 528.5h0M406.0 522.1h0M406.3 524.5h0M406.7 515.7h0M407.0 516.9h0M407.3 501.8h0M407.6 528.4h0M408.0 539.9h0M408.3 520.9h0M408.6 521.1h0M408.9 512.8h0M409.3 538.1h0M409.6 516.4h0M409.9 527.9h0M410.3 529.4h0M410.6 505.5h0M410.9 520.6h0M411.2 518.1h0M411.6 519.2h0M411.9 525.4h0M412.2 527.5h0M412.5 526.6h0M412.9 533.7h0M413.2 534.4h0M413.5 539.0h0M413.9 528.0h0M414.2 522.5h0M414.5 530.8h0M414.8 527.8h0M415.2 533.4h0M415.5 544.1h0M415.8 509.7h0M416.1 529.0h0M416.5 508.9h0M416.8 520.6h0M417.1 521.2h0M417.4 507.6h0M417.8 515.0h0M418.1 537.4h0M418.4 534.3h0M418.8 538.9h0M419.1 529.3h0M419.4 559.2h0M419.7 546.5h0M420.1 537.8h0M420.4 560.1h0M420.7 556.2h0M421.0 547.7h0M421.4 558.7h0M421.7 550.6h0M422.0 560.1h0M422.3 545.6h0M422.7 532.0h0M423.0 548.4h0M423.3 538.9h0M423.7 527.7h0M424.0 529.8h0M424.3 547.1h0M424.6 536.9h0M425.0 544.1h0M425.3 553.6h0M425.6 546.6h0M425.9 533.5h0M426.3 562.0h0M426.6 565.3h0M426.9 560.9h0M427.3 567.5h0M427.6 552.0h0M427.9 558.1h0M428.2 569.7h0M428.6 547.7h0M428.9 565.7h0M429.2 570.8h0M429.5 558.7h0M429.9 568.9h0M430.2 554.7h0M430.5 535.6h0M430.8 553.4h0M431.2 556.6h0M431.5 554.3h0M431.8 549.0h0M432.2 557.8h0M432.5 550.1h0M432.8 541.8h0M433.1 553.2h0M433.5 563.7h0M433.8 548.3h0M434.1 554.9h0M434.4 553.1h0M434.8 550.7h0M435.1 550.5h0M435.4 555.4h0M435.7 562.8h0M436.1 554.8h0M436.4 543.5h0M436.7 550.2h0M437.1 550.6h0M437.4 533.2h0M437.7 542.7h0M438.0 551.8h0M438.4 537.0h0M438.7 528.3h0M439.0 551.6h0M439.3 543.4h0M439.7 522.3h0M440.0 537.3h0M440.3 530.2h0M440.7 528.5h0M441.0 531.8h0M441.3 541.3h0M441.6 523.7h0M442.0 535.2h0M442.3 523.4h0M442.6 513.5h0M442.9 523.2h0M443.3 542.2h0M443.6 503.4h0M443.9 520.9h0M444.2 532.0h0M444.6 516.2h0M444.9 536.6h0M445.2 542.3h0M445.6 527.2h0M445.9 528.6h0M446.2 527.5h0M446.5 516.0h0M446.9 529.8h0M447.2 519.4h0M447.5 509.6h0M447.8 510.3h0M448.2 548.5h0M448.5 523.8h0M448.8 538.1h0M449.1 529.3h0M449.5 535.7h0M449.8 531.1h0M450.1 534.7h0M450.5 520.7h0M450.8 528.2h0M451.1 540.5h0M451.4 562.4h0M451.8 563.4h0M452.1 561.4h0M452.4 569.3h0M452.7 561.5h0M453.1 555.9h0M453.4 549.1h0M453.7 565.2h0M454.1 542.5h0M454.4 564.4h0M454.7 580.6h0M455.0 567.1h0M455.4 569.3h0M455.7 554.3h0M456.0 549.0h0M456.3 551.6h0M456.7 556.7h0M457.0 573.7h0M457.3 582.3h0M457.6 547.7h0M458.0 553.4h0M458.3 558.9h0M458.6 553.2h0M459.0 545.4h0M459.3 547.4h0M459.6 555.0h0M459.9 553.0h0M460.3 543.5h0M460.6 546.1h0M460.9 536.2h0M461.2 560.7h0M461.6 547.1h0M461.9 549.8h0M462.2 546.2h0M462.5 555.8h0M462.9 546.3h0M463.2 536.3h0M463.5 568.2h0M463.9 550.7h0M464.2 557.4h0M464.5 581.7h0M464.8 556.2h0M465.2 554.0h0M465.5 555.3h0M465.8 535.8h0M466.1 566.2h0M466.5 567.4h0M466.8 555.5h0M467.1 558.5h0M467.4 560.0h0M467.8 524.6h0M468.1 548.9h0M468.4 543.4h0M468.8 554.8h0M469.1 537.4h0M469.4 557.9h0M469.7 545.8h0M470.1 557.6h0M470.4 553.8h0M470.7 534.5h0M471.0 546.2h0M471.4 537.6h0M471.7 541.1h0M472.0 541.9h0M472.4 548.5h0M472.7 548.0h0M473.0 539.8h0M473.3 559.2h0M473.7 540.2h0M474.0 526.8h0M474.3 533.0h0M474.6 537.3h0M475.0 543.2h0M475.3 530.4h0M475.6 529.8h0M475.9 556.3h0M476.3 541.7h0M476.6 544.2h0M476.9 536.5h0M477.3 531.2h0M477.6 549.8h0M477.9 535.3h0M478.2 532.0h0M478.6 522.8h0M478.9 528.3h0M479.2 534.6h0M479.5 537.9h0M479.9 516.1h0M480.2 497.6h0M480.5 520.6h0M480.8 513.7h0M481.2 494.1h0M481.5 503.9h0M481.8 523.6h0M482.2 522.6h0M482.5 523.7h0M482.8 508.1h0M483.1 535.4h0M483.5 511.1h0M483.8 516.9h0M484.1 505.6h0M484.4 531.9h0M484.8 529.3h0M485.1 529.4h0M485.4 536.9h0M485.8 518.3h0M486.1 524.6h0M486.4 501.1h0M486.7 526.5h0M487.1 534.4h0M487.4 522.1h0M487.7 524.8h0M488.0 536.3h0M488.4 546.5h0M488.7 529.8h0M489.0 528.4h0M489.3 508.2h0M489.7 540.5h0M490.0 525.4h0M490.3 527.3h0M490.7 520.9h0M491.0 524.9h0M491.3 531.3h0M491.6 524.4h0M492.0 526.6h0M492.3 521.8h0M492.6 518.2h0M492.9 517.0h0M493.3 522.9h0M493.6 506.0h0M493.9 529.9h0M494.2 511.3h0M494.6 531.6h0M494.9 522.4h0M495.2 528.5h0M495.6 516.4h0M495.9 512.3h0M496.2 530.1h0M496.5 546.6h0M496.9 529.7h0M497.2 534.2h0M497.5 548.6h0M497.8 543.4h0M498.2 531.9h0M498.5 519.9h0M498.8 531.0h0M499.2 539.6h0M499.5 553.5h0M499.8 544.1h0M500.1 541.0h0M500.5 553.4h0M500.8 540.7h0M501.1 544.9h0M501.4 541.1h0M501.8 524.8h0M502.1 550.2h0M502.4 540.8h0M502.7 540.5h0M503.1 529.4h0M503.4 544.4h0M503.7 552.6h0M504.1 530.9h0M504.4 534.7h0M504.7 544.3h0M505.0 518.3h0M505.4 509.4h0M505.7 525.4h0M506.0 533.4h0M506.3 536.4h0M506.7 536.2h0M507.0 537.9h0M507.3 533.7h0M507.6 532.2h0M508.0 539.8h0M508.3 543.9h0M508.6 548.0h0M509.0 546.9h0M509.3 538.9h0M509.6 501.4h0M509.9 521.4h0M510.3 517.9h0M510.6 527.9h0M510.9 514.5h0M511.2 541.2h0M511.6 525.7h0M511.9 525.4h0M512.2 533.6h0M512.6 532.8h0M512.9 533.5h0M513.2 540.4h0M513.5 533.5h0M513.9 521.6h0M514.2 527.2h0M514.5 530.8h0M514.8 521.2h0M515.2 547.2h0M515.5 524.3h0M515.8 548.7h0M516.1 539.0h0M516.5 523.8h0M516.8 530.0h0M517.1 538.8h0M517.5 527.4h0M517.8 517.0h0M518.1 530.5h0M518.4 547.0h0M518.8 525.3h0M519.1 549.6h0M519.4 544.9h0M519.7 542.0h0M520.1 547.9h0M520.4 547.1h0M520.7 557.0h0M521.0 552.7h0M521.4 545.5h0M521.7 566.6h0M522.0 537.8h0M522.4 563.6h0M522.7 552.2h0M523.0 563.3h0M523.3 549.6h0M523.7 564.0h0M524.0 550.8h0M524.3 559.1h0M524.6 556.9h0M525.0 577.9h0M525.3 544.7h0M525.6 560.6h0M526.0 548.3h0M526.3 547.7h0M526.6 541.3h0M526.9 550.0h0M527.3 530.2h0M527.6 531.1h0M527.9 548.8h0M528.2 532.0h0M528.6 567.3h0M528.9 542.2h0M529.2 548.0h0M529.5 545.8h0M529.9 552.5h0M530.2 542.4h0M530.5 542.4h0M530.9 541.4h0M531.2 557.4h0M531.5 559.5h0M531.8 560.6h0M532.2 554.4h0M532.5 548.1h0M532.8 528.0h0M533.1 556.1h0M533.5 554.1h0M533.8 546.2h0M534.1 561.5h0M534.4 568.8h0M534.8 549.4h0M535.1 553.1h0M535.4 551.8h0M535.8 536.1h0M536.1 536.7h0M536.4 533.5h0M536.7 538.4h0M537.1 522.7h0M537.4 519.6h0M537.7 515.9h0M538.0 519.3h0M538.4 516.4h0M538.7 530.6h0M539.0 526.0h0M539.4 520.1h0M539.7 523.4h0M540.0 524.5h0M540.3 517.7h0M540.7 535.3h0M541.0 493.8h0M541.3 523.2h0M541.6 528.9h0M542.0 529.7h0M542.3 508.6h0M542.6 524.7h0M542.9 501.4h0M543.3 524.5h0M543.6 513.6h0M543.9 521.8h0M544.3 511.1h0M544.6 520.9h0M544.9 510.8h0M545.2 532.5h0M545.6 528.3h0M545.9 516.5h0M546.2 507.5h0M546.5 499.2h0M546.9 514.1h0M547.2 519.2h0M547.5 501.1h0M547.8 512.1h0M548.2 497.9h0M548.5 509.7h0M548.8 525.1h0M549.2 495.4h0M549.5 517.7h0M549.8 515.6h0M550.1 482.3h0M550.5 485.4h0M550.8 495.2h0M551.1 507.6h0M551.4 497.0h0M551.8 504.6h0M552.1 486.4h0M552.4 508.5h0M552.8 505.2h0M553.1 507.3h0M553.4 525.3h0M553.7 526.6h0M554.1 521.2h0M554.4 499.0h0M554.7 500.7h0M555.0 521.8h0M555.4 519.7h0M555.7 500.9h0M556.0 516.3h0M556.3 499.7h0M556.7 503.8h0M557.0 520.1h0M557.3 497.4h0M557.7 513.7h0M558.0 512.3h0M558.3 493.3h0M558.6 516.8h0M559.0 495.5h0M559.3 494.1h0M559.6 487.0h0M559.9 503.6h0M560.3 505.0h0M560.6 513.5h0M560.9 516.8h0M561.2 516.1h0M561.6 513.9h0M561.9 510.5h0M562.2 510.1h0M562.6 512.8h0M562.9 516.4h0M563.2 502.7h0M563.5 490.9h0M563.9 508.7h0M564.2 522.1h0M564.5 498.6h0M564.8 518.0h0M565.2 526.9h0M565.5 522.0h0M565.8 514.0h0M566.1 546.7h0M566.5 535.7h0M566.8 517.9h0M567.1 525.9h0M567.5 525.3h0M567.8 506.1h0M568.1 548.2h0M568.4 510.6h0M568.8 524.3h0M569.1 507.5h0M569.4 515.7h0M569.7 498.9h0M570.1 513.6h0M570.4 518.1h0M570.7 513.8h0M571.1 511.9h0M571.4 527.8h0M571.7 503.0h0M572.0 517.3h0M572.4 517.2h0M572.7 517.2h0M573.0 524.3h0M573.3 527.9h0M573.7 524.2h0M574.0 512.5h0M574.3 520.4h0M574.6 537.3h0M575.0 526.4h0M575.3 515.2h0M575.6 524.2h0M576.0 524.9h0M576.3 538.6h0M576.6 535.6h0M576.9 535.8h0M577.3 522.0h0M577.6 537.6h0M577.9 519.6h0M578.2 495.5h0M578.6 523.3h0M578.9 509.6h0M579.2 526.0h0M579.5 519.4h0M579.9 538.2h0M580.2 523.7h0M580.5 543.9h0M580.9 534.1h0M581.2 530.8h0M581.5 527.9h0M581.8 543.7h0M582.2 525.2h0M582.5 545.3h0M582.8 550.7h0M583.1 542.2h0M583.5 535.7h0M583.8 538.1h0M584.1 544.0h0M584.5 538.2h0M584.8 529.3h0M585.1 555.6h0M585.4 522.5h0M585.8 545.5h0M586.1 547.9h0M586.4 548.8h0M586.7 534.6h0M587.1 542.4h0M587.4 532.7h0M587.7 531.8h0M588.0 542.4h0M588.4 537.5h0M588.7 541.9h0M589.0 555.8h0M589.4 526.4h0M589.7 542.9h0M590.0 528.7h0M590.3 545.8h0M590.7 554.3h0M591.0 551.9h0M591.3 540.2h0M591.6 565.7h0M592.0 541.3h0M592.3 553.3h0M592.6 563.3h0M592.9 560.2h0M593.3 552.0h0M593.6 551.5h0M593.9 536.6h0M594.3 535.6h0M594.6 549.7h0M594.9 545.7h0M595.2 534.2h0M595.6 530.8h0M595.9 553.0h0M596.2 580.2h0M596.5 532.3h0M596.9 572.6h0M597.2 555.7h0M597.5 553.3h0M597.9 563.8h0M598.2 555.1h0M598.5 575.0h0M598.8 545.7h0M599.2 546.1h0M599.5 560.6h0M599.8 541.2h0M600.1 539.8h0M600.5 532.0h0M600.8 536.2h0M601.1 538.9h0M601.4 533.0h0M601.8 536.5h0M602.1 528.2h0M602.4 548.6h0M602.8 517.3h0M603.1 530.6h0M603.4 537.0h0M603.7 523.6h0M604.1 519.8h0M604.4 515.7h0M604.7 510.5h0M605.0 505.9h0M605.4 513.5h0M605.7 505.1h0M606.0 518.2h0M606.3 501.3h0M606.7 533.5h0M607.0 533.3h0M607.3 537.4h0M607.7 527.1h0M608.0 521.0h0M608.3 530.1h0M608.6 515.5h0M609.0 514.1h0M609.3 509.0h0M609.6 524.1h0M609.9 509.2h0M610.3 516.4h0M610.6 501.6h0M610.9 518.7h0M611.3 525.8h0M611.6 515.7h0M611.9 512.8h0M612.2 529.2h0M612.6 516.7h0M612.9 525.0h0M613.2 487.0h0M613.5 511.5h0M613.9 516.6h0M614.2 510.8h0M614.5 507.7h0M614.8 532.1h0M615.2 514.2h0M615.5 512.4h0M615.8 523.0h0M616.2 513.9h0M616.5 511.5h0M616.8 516.0h0M617.1 517.4h0M617.5 527.3h0M617.8 522.1h0M618.1 496.1h0M618.4 523.5h0M618.8 522.0h0M619.1 512.8h0M619.4 535.0h0M619.7 507.8h0M620.1 530.9h0M620.4 514.9h0M620.7 544.2h0M621.1 530.2h0M621.4 519.1h0M621.7 522.5h0M622.0 522.8h0M622.4 482.6h0M622.7 522.8h0M623.0 509.5h0M623.3 518.3h0M623.7 520.4h0M624.0 503.2h0M624.3 498.7h0M624.7 500.7h0M625.0 514.7h0M625.3 513.7h0M625.6 508.7h0M626.0 498.2h0M626.3 518.3h0M626.6 490.7h0M626.9 513.8h0M627.3 514.1h0M627.6 504.6h0M627.9 516.9h0M628.2 511.4h0M628.6 530.9h0M628.9 533.3h0M629.2 516.7h0M629.6 532.4h0M629.9 530.1h0M630.2 516.4h0M630.5 514.4h0M630.9 541.8h0M631.2 515.7h0M631.5 522.6h0M631.8 516.3h0M632.2 513.3h0M632.5 509.4h0M632.8 520.9h0M633.1 521.6h0M633.5 500.9h0M633.8 490.3h0M634.1 512.9h0M634.5 508.0h0M634.8 517.2h0M635.1 537.9h0M635.4 543.2h0M635.8 523.6h0M636.1 510.8h0M636.4 522.8h0M636.7 491.6h0M637.1 508.3h0M637.4 504.7h0M637.7 518.9h0M638.1 503.5h0M638.4 501.4h0M638.7 530.8h0M639.0 522.7h0M639.4 516.8h0M639.7 527.5h0M640.0 540.8h0M640.3 503.7h0M640.7 528.7h0M641.0 520.2h0M641.3 520.3h0M641.6 522.8h0M642.0 528.9h0M642.3 518.5h0M642.6 531.3h0M643.0 525.4h0M643.3 537.1h0M643.6 533.0h0M643.9 525.7h0M644.3 514.9h0M644.6 518.4h0M644.9 533.7h0M645.2 536.9h0M645.6 525.4h0M645.9 531.0h0M646.2 539.9h0M646.5 546.4h0M646.9 534.0h0M647.2 537.4h0M647.5 521.0h0M647.9 531.0h0M648.2 544.8h0M648.5 553.7h0M648.8 538.1h0M649.2 535.7h0M649.5 527.9h0M649.8 539.4h0M650.1 529.4h0M650.5 524.1h0M650.8 542.9h0M651.1 551.4h0M651.5 535.3h0M651.8 530.2h0M652.1 547.8h0M652.4 544.4h0M652.8 548.2h0M653.1 537.2h0M653.4 537.2h0M653.7 539.0h0M654.1 537.5h0M654.4 535.9h0M654.7 547.9h0M655.0 538.2h0M655.4 554.5h0M655.7 535.5h0M656.0 545.7h0M656.4 536.1h0M656.7 551.4h0M657.0 547.5h0M657.3 538.7h0M657.7 547.4h0M658.0 546.2h0M658.3 543.7h0M658.6 561.8h0M659.0 549.6h0M659.3 567.4h0M659.6 559.8h0M659.9 555.1h0M660.3 544.9h0M660.6 524.9h0M660.9 535.2h0M661.3 531.8h0M661.6 539.1h0M661.9 531.1h0M662.2 519.5h0M662.6 511.2h0M662.9 527.6h0M663.2 528.5h0M663.5 520.4h0M663.9 533.1h0M664.2 553.1h0M664.5 530.3h0M664.8 524.8h0M665.2 517.3h0M665.5 522.6h0M665.8 514.3h0M666.2 509.4h0M666.5 504.5h0M666.8 521.0h0M667.1 533.7h0M667.5 521.4h0M667.8 521.7h0M668.1 535.9h0M668.4 510.9h0M668.8 519.4h0M669.1 517.8h0M669.4 512.9h0M669.8 516.7h0M670.1 527.5h0M670.4 516.8h0M670.7 515.7h0M671.1 518.2h0M671.4 518.5h0M671.7 506.8h0M672.0 511.4h0M672.4 519.3h0M672.7 529.1h0M673.0 531.3h0M673.3 508.7h0M673.7 525.6h0M674.0 520.3h0M674.3 516.8h0M674.7 519.7h0M675.0 523.8h0M675.3 530.4h0M675.6 497.7h0M676.0 518.4h0M676.3 507.2h0M676.6 510.7h0M676.9 525.2h0M677.3 514.6h0M677.6 495.1h0M677.9 501.8h0M678.2 505.0h0M678.6 487.2h0M678.9 514.4h0M679.2 506.2h0M679.6 511.4h0M679.9 511.7h0M680.2 527.4h0M680.5 508.3h0M680.9 505.6h0M681.2 528.2h0M681.5 507.8h0M681.8 505.5h0M682.2 493.4h0M682.5 518.3h0M682.8 513.2h0M683.2 514.3h0M683.5 508.7h0M683.8 509.4h0M684.1 514.4h0M684.5 504.1h0M684.8 521.8h0M685.1 519.1h0M685.4 482.0h0M685.8 500.5h0M686.1 488.6h0M686.4 503.6h0M686.7 524.3h0M687.1 496.9h0M687.4 515.3h0M687.7 523.0h0M688.1 506.5h0M688.4 489.2h0M688.7 483.8h0M689.0 500.9h0M689.4 494.3h0M689.7 520.0h0M690.0 519.8h0M690.3 511.7h0M690.7 530.7h0M691.0 527.0h0M691.3 522.9h0M691.6 523.5h0M692.0 510.0h0M692.3 519.8h0M692.6 537.9h0M693.0 512.3h0M693.3 524.1h0M693.6 507.6h0M693.9 493.1h0M694.3 506.3h0M694.6 493.6h0M694.9 483.4h0M695.2 497.9h0M695.6 508.5h0M695.9 501.5h0M696.2 515.0h0M696.6 505.6h0M696.9 500.2h0M697.2 527.6h0M697.5 518.2h0M697.9 532.7h0M698.2 515.0h0M698.5 525.0h0M698.8 514.9h0M699.2 518.0h0M699.5 509.3h0M699.8 485.7h0M700.1 503.6h0M700.5 500.3h0M700.8 493.0h0M701.1 502.3h0M701.5 499.5h0M701.8 510.2h0M702.1 518.2h0M702.4 501.8h0M702.8 485.3h0M703.1 493.1h0M703.4 510.9h0M703.7 471.1h0M704.1 510.3h0M704.4 507.3h0M704.7 513.3h0M705.0 521.0h0M705.4 519.9h0M705.7 520.8h0M706.0 512.0h0M706.4 513.0h0M706.7 514.4h0M707.0 494.3h0M707.3 533.9h0M707.7 505.6h0M708.0 532.7h0M708.3 533.2h0M708.6 535.8h0M709.0 525.6h0M709.3 516.9h0M709.6 523.5h0M710.0 505.3h0M710.3 519.1h0M710.6 504.6h0M710.9 501.6h0M711.3 511.0h0M711.6 519.8h0M711.9 513.8h0M712.2 535.7h0M712.6 532.1h0M712.9 497.9h0M713.2 507.6h0M713.5 529.8h0M713.9 508.8h0M714.2 495.2h0M714.5 502.0h0M714.9 511.6h0M715.2 511.1h0M715.5 497.3h0M715.8 500.2h0M716.2 510.7h0M716.5 502.3h0M716.8 513.4h0M717.1 505.9h0M717.5 521.3h0M717.8 504.5h0M718.1 521.0h0M718.4 533.3h0M718.8 519.0h0M719.1 499.6h0M719.4 527.0h0M719.8 507.9h0M720.1 475.2h0M720.4 511.2h0M720.7 516.6h0M721.1 511.8h0M721.4 521.8h0M721.7 509.6h0M722.0 501.2h0M722.4 482.7h0M722.7 491.2h0M723.0 506.2h0M723.4 517.7h0M723.7 500.4h0M724.0 507.3h0M724.3 520.1h0M724.7 493.1h0M725.0 494.7h0M725.3 507.0h0M725.6 517.6h0M726.0 512.9h0M726.3 495.9h0M726.6 511.2h0M726.9 500.7h0M727.3 516.6h0M727.6 514.3h0M727.9 517.7h0M728.3 518.9h0M728.6 514.4h0M728.9 530.8h0M729.2 532.3h0M729.6 530.6h0M729.9 537.7h0M730.2 518.8h0M730.5 534.5h0M730.9 526.1h0M731.2 514.4h0M731.5 524.1h0M731.8 528.5h0M732.2 534.8h0M732.5 538.3h0M732.8 553.8h0M733.2 539.2h0M733.5 543.9h0M733.8 532.2h0M734.1 546.4h0M734.5 564.9h0M734.8 559.3h0M735.1 548.3h0M735.4 544.1h0M735.8 536.5h0M736.1 542.6h0M736.4 518.3h0M736.8 526.9h0M737.1 552.1h0M737.4 538.9h0M737.7 567.7h0M738.1 544.2h0M738.4 558.6h0M738.7 546.2h0M739.0 553.3h0M739.4 540.0h0M739.7 554.6h0M740.0 553.6h0M740.3 544.2h0M740.7 555.5h0M741.0 564.3h0M741.3 542.2h0M741.7 559.2h0M742.0 550.9h0M742.3 544.4h0M742.6 562.9h0M743.0 533.7h0M743.3 541.8h0M743.6 534.8h0M743.9 552.9h0M744.3 557.3h0M744.6 589.3h0M744.9 557.6h0M745.2 573.2h0M745.6 543.4h0M745.9 554.8h0M746.2 559.3h0M746.6 576.8h0M746.9 568.5h0M747.2 569.9h0M747.5 569.4h0M747.9 553.0h0M748.2 559.6h0M748.5 573.4h0M748.8 568.9h0M749.2 556.4h0M749.5 561.6h0M749.8 559.1h0M750.2 578.1h0M750.5 570.3h0M750.8 537.5h0M751.1 567.3h0M751.5 547.1h0M751.8 552.1h0M752.1 568.2h0M752.4 552.5h0M752.8 574.6h0M753.1 560.0h0M753.4 552.8h0M753.7 569.5h0M754.1 560.6h0M754.4 568.5h0M754.7 570.8h0M890.0 523.7h0M890.3 544.8h0M890.7 543.6h0M891.0 529.4h0M891.3 535.6h0M891.6 529.9h0M892.0 526.4h0M892.3 510.2h0M892.6 514.4h0M892.9 518.0h0M893.3 514.7h0M893.6 471.8h0M893.9 492.6h0M894.2 503.3h0M894.6 518.1h0M894.9 512.3h0M895.2 517.3h0M895.6 515.1h0M895.9 504.7h0M896.2 506.4h0M896.5 508.5h0M896.9 515.1h0M897.2 511.8h0M897.5 524.2h0M897.8 504.1h0M898.2 489.1h0M898.5 517.2h0M898.8 514.2h0M899.2 513.9h0M899.5 541.8h0M899.8 530.9h0M900.1 526.5h0M900.5 518.2h0M900.8 519.5h0M901.1 524.7h0M901.4 503.2h0M901.8 503.1h0M902.1 515.1h0M902.4 534.4h0M902.7 526.4h0M903.1 503.2h0M903.4 525.8h0M903.7 505.7h0M904.1 517.0h0M904.4 514.6h0M904.7 524.8h0M905.0 511.3h0M905.4 514.0h0M905.7 511.3h0M906.0 508.4h0M906.3 505.6h0M906.7 499.5h0M907.0 519.8h0M907.3 503.1h0M907.6 492.0h0M908.0 484.0h0M908.3 479.7h0M908.6 501.4h0M909.0 517.4h0M909.3 486.3h0M909.6 496.5h0M909.9 481.9h0M910.3 505.6h0M910.6 500.9h0M910.9 496.0h0M911.2 509.2h0M911.6 514.0h0M911.9 505.5h0M912.2 496.2h0M912.6 498.3h0M912.9 505.4h0M913.2 490.4h0M913.5 529.6h0M913.9 509.9h0M914.2 511.3h0M914.5 508.5h0M914.8 525.8h0M915.2 507.1h0M915.5 524.6h0M915.8 512.8h0M916.1 502.4h0M916.5 486.3h0M916.8 514.5h0M917.1 508.5h0M917.5 504.6h0M917.8 510.8h0M918.1 507.6h0M918.4 514.5h0M918.8 500.0h0M919.1 510.7h0M919.4 493.7h0M919.7 500.0h0M920.1 513.4h0M920.4 506.2h0M920.7 522.3h0M921.0 501.3h0M921.4 492.8h0M921.7 508.7h0M922.0 518.4h0M922.4 497.6h0M922.7 498.0h0M923.0 505.7h0M923.3 503.3h0M923.7 508.3h0M924.0 515.6h0M924.3 514.1h0M924.6 522.4h0M925.0 513.6h0M925.3 502.6h0M925.6 526.2h0M926.0 510.7h0M926.3 515.3h0M926.6 509.0h0M926.9 524.0h0M927.3 510.5h0M927.6 491.4h0M927.9 524.2h0M928.2 506.8h0M928.6 495.5h0M928.9 507.1h0M929.2 493.5h0M929.5 522.5h0M929.9 506.9h0M930.2 508.3h0M930.5 523.3h0M930.9 509.4h0M931.2 503.7h0M931.5 497.2h0M931.8 503.4h0M932.2 519.5h0M932.5 508.6h0M932.8 502.1h0M933.1 515.6h0M933.5 519.6h0M933.8 522.9h0M934.1 543.2h0M934.4 505.9h0M934.8 517.2h0M935.1 498.6h0M935.4 511.0h0M935.8 527.9h0M936.1 533.3h0M936.4 511.7h0M936.7 527.1h0M937.1 523.6h0M937.4 513.3h0M937.7 541.6h0M938.0 518.4h0M938.4 510.0h0M938.7 525.2h0M939.0 505.0h0M939.4 544.5h0M939.7 536.9h0M940.0 518.7h0M940.3 529.0h0M940.7 535.0h0M941.0 545.0h0M941.3 520.7h0M941.6 512.6h0M942.0 507.6h0M942.3 525.2h0M942.6 509.3h0M942.9 522.5h0M943.3 532.9h0M943.6 554.3h0M943.9 526.8h0M944.3 549.0h0M944.6 532.0h0M944.9 533.4h0M945.2 543.7h0M945.6 515.8h0M945.9 519.5h0M946.2 544.8h0M946.5 520.1h0M946.9 510.8h0M947.2 515.7h0M947.5 518.3h0M947.8 510.8h0M948.2 518.9h0M948.5 522.8h0M948.8 520.8h0M949.2 533.6h0M949.5 525.2h0M949.8 512.3h0M950.1 528.2h0M950.5 515.4h0M950.8 531.0h0M951.1 522.0h0M951.4 504.0h0M951.8 513.0h0M952.1 516.8h0M952.4 527.0h0M952.7 534.7h0M953.1 540.8h0M953.4 530.3h0M953.7 541.4h0M954.1 535.8h0M954.4 539.7h0M954.7 500.9h0M955.0 518.8h0M955.4 524.5h0M955.7 525.1h0M956.0 508.4h0M956.3 520.9h0M956.7 525.7h0M957.0 517.1h0M957.3 504.9h0M957.7 505.9h0M958.0 517.2h0M958.3 494.0h0M958.6 528.3h0M959.0 503.2h0M959.3 503.7h0M959.6 500.4h0M959.9 513.2h0M960.3 506.7h0M960.6 524.1h0M960.9 508.0h0M961.2 510.7h0M961.6 509.0h0M961.9 501.4h0M962.2 512.3h0M962.6 512.1h0M962.9 507.8h0M963.2 500.7h0M963.5 503.2h0M963.9 522.3h0M964.2 509.4h0M964.5 513.9h0M964.8 500.4h0M965.2 495.9h0M965.5 494.2h0M965.8 505.4h0M966.1 500.2h0M966.5 511.8h0M966.8 497.5h0M967.1 508.3h0M967.5 528.7h0M967.8 516.8h0M968.1 526.7h0M968.4 521.1h0M968.8 493.4h0M969.1 501.8h0M969.4 494.8h0M969.7 527.4h0M970.1 498.7h0M970.4 505.8h0M970.7 516.5h0M971.1 501.1h0M971.4 505.0h0M971.7 508.4h0M972.0 508.3h0M972.4 522.6h0M972.7 517.6h0M973.0 518.0h0M973.3 508.2h0M973.7 506.0h0M974.0 501.2h0M974.3 477.2h0M974.6 498.9h0M975.0 520.1h0M975.3 516.7h0M975.6 502.5h0M976.0 496.2h0M976.3 502.4h0M976.6 507.8h0M976.9 507.3h0M977.3 519.5h0M977.6 500.7h0M977.9 507.8h0M978.2 514.8h0M978.6 511.4h0M978.9 491.5h0M979.2 494.2h0M979.5 495.5h0M979.9 504.0h0M980.2 504.5h0M980.5 480.8h0M980.9 496.9h0M981.2 498.1h0M981.5 506.0h0M981.8 495.6h0M982.2 498.2h0M982.5 503.3h0M982.8 479.0h0M983.1 486.3h0M983.5 475.0h0M983.8 511.6h0M984.1 484.7h0M984.5 479.7h0M984.8 496.8h0M985.1 516.5h0M985.4 499.0h0M985.8 503.0h0M986.1 510.2h0M986.4 546.6h0M986.7 515.0h0M987.1 503.0h0M987.4 501.7h0M987.7 497.3h0M988.0 490.9h0M988.4 507.8h0M988.7 500.8h0M989.0 522.4h0M989.4 509.5h0M989.7 521.7h0M990.0 492.3h0M990.3 494.1h0M990.7 504.6h0M991.0 506.1h0M991.3 497.3h0M991.6 518.0h0M992.0 503.1h0M992.3 505.4h0M992.6 505.7h0M992.9 532.3h0M993.3 515.0h0M993.6 505.9h0M993.9 479.8h0M994.3 477.0h0M994.6 489.9h0M994.9 494.1h0M995.2 495.9h0M995.6 481.1h0M995.9 495.3h0M996.2 500.3h0M996.5 492.7h0M996.9 492.9h0M997.2 487.5h0M997.5 492.1h0M997.9 489.3h0M998.2 504.1h0M998.5 482.7h0M998.8 480.6h0M999.2 518.5h0M999.5 486.7h0M999.8 461.9h0M1000.1 509.4h0M1000.5 502.5h0M1000.8 482.7h0M1001.1 489.4h0M1001.4 493.1h0M1001.8 482.9h0M1002.1 478.3h0M1002.4 482.5h0M1002.8 482.9h0M1003.1 483.7h0M1003.4 485.3h0M1003.7 482.8h0M1004.1 479.1h0M1004.4 479.4h0M1004.7 467.6h0M1005.0 492.8h0M1005.4 455.1h0M1005.7 472.4h0M1006.0 479.3h0M1006.3 487.0h0M1006.7 484.9h0M1007.0 502.0h0M1007.3 485.3h0M1007.7 497.9h0M1008.0 502.8h0M1008.3 499.4h0M1008.6 497.9h0M1009.0 521.2h0M1009.3 509.4h0M1009.6 514.8h0M1009.9 518.2h0M1010.3 512.2h0M1010.6 519.9h0M1010.9 518.4h0M1011.3 518.4h0M1011.6 518.3h0M1011.9 525.8h0M1012.2 534.0h0M1012.6 517.3h0M1012.9 543.5h0M1013.2 516.8h0M1013.5 527.0h0M1013.9 525.7h0M1014.2 506.9h0M1014.5 516.2h0M1014.8 539.6h0M1015.2 518.4h0M1015.5 522.1h0M1015.8 544.6h0M1016.2 541.6h0M1016.5 552.2h0M1016.8 547.9h0M1017.1 534.5h0M1017.5 535.1h0M1017.8 534.5h0M1018.1 528.2h0M1018.4 515.8h0M1018.8 540.0h0M1019.1 523.7h0M1019.4 528.9h0M1019.7 517.9h0M1020.1 534.3h0M1020.4 538.8h0M1020.7 516.2h0M1021.1 534.8h0M1021.4 549.1h0M1021.7 539.7h0M1022.0 516.1h0M1022.4 524.7h0M1022.7 541.4h0M1023.0 547.2h0M1023.3 525.6h0M1023.7 540.2h0M1024.0 548.6h0M1024.3 534.9h0M1024.7 539.1h0M1025.0 540.5h0M1025.3 533.6h0M1025.6 562.0h0M1026.0 545.8h0M1026.3 540.4h0M1026.6 551.2h0M1026.9 539.2h0M1027.3 537.4h0M1027.6 540.5h0M1027.9 522.7h0M1028.2 538.7h0M1028.6 538.3h0M1028.9 535.0h0M1029.2 521.5h0M1029.6 531.0h0M1029.9 517.0h0M1030.2 538.9h0M1030.5 536.4h0M1030.9 535.5h0M1031.2 530.1h0M1031.5 517.8h0M1031.8 515.9h0M1032.2 520.8h0M1032.5 522.1h0M1032.8 534.1h0M1033.1 533.2h0M1033.5 526.7h0M1033.8 530.8h0M1034.1 519.5h0M1034.5 525.3h0M1034.8 499.8h0M1035.1 505.8h0M1035.4 503.9h0M1035.8 516.6h0M1036.1 518.8h0M1036.4 518.6h0M1036.7 530.3h0M1037.1 504.2h0M1037.4 524.3h0M1037.7 524.8h0M1038.1 509.1h0M1038.4 525.0h0M1038.7 502.5h0M1039.0 499.2h0M1039.4 508.3h0M1039.7 520.8h0M1040.0 515.6h0M1040.3 495.9h0M1040.7 510.4h0M1041.0 516.5h0M1041.3 533.1h0M1041.6 524.9h0M1042.0 519.9h0M1042.3 512.5h0M1042.6 521.9h0M1043.0 504.5h0M1043.3 520.4h0M1043.6 513.7h0M1043.9 507.4h0M1044.3 512.5h0M1044.6 504.0h0M1044.9 499.8h0M1045.2 523.4h0M1045.6 509.2h0M1045.9 500.1h0M1046.2 496.3h0M1046.5 508.3h0M1046.9 508.2h0M1047.2 518.4h0M1047.5 523.9h0M1047.9 514.6h0M1048.2 499.6h0M1048.5 526.8h0M1048.8 516.2h0M1049.2 520.2h0M1049.5 542.1h0M1049.8 499.7h0M1050.1 514.3h0M1050.5 509.0h0M1050.8 527.2h0M1051.1 504.8h0M1051.4 508.3h0M1051.8 528.8h0M1052.1 514.0h0M1052.4 508.5h0M1052.8 525.6h0M1053.1 498.9h0M1053.4 540.6h0M1053.7 516.3h0M1054.1 518.9h0M1054.4 511.0h0M1054.7 503.9h0M1055.0 508.5h0M1055.4 484.5h0M1055.7 510.2h0M1056.0 506.2h0M1056.4 511.0h0M1056.7 500.8h0M1057.0 503.0h0M1057.3 514.5h0M1057.7 518.7h0M1058.0 494.5h0M1058.3 509.8h0M1058.6 530.5h0M1059.0 507.3h0M1059.3 502.5h0M1059.6 518.9h0M1059.9 507.6h0M1060.3 510.6h0M1060.6 529.1h0M1060.9 492.3h0M1061.3 500.3h0M1061.6 490.0h0M1061.9 505.2h0M1062.2 501.9h0M1062.6 526.4h0M1062.9 522.0h0M1063.2 501.3h0M1063.5 532.9h0M1063.9 522.8h0M1064.2 515.6h0M1064.5 520.2h0M1064.8 507.1h0M1065.2 503.9h0M1065.5 503.8h0M1065.8 506.5h0M1066.2 514.2h0M1066.5 514.8h0M1066.8 517.0h0M1067.1 535.8h0M1067.5 522.3h0M1067.8 538.5h0M1068.1 526.8h0M1068.4 533.0h0M1068.8 518.8h0M1069.1 533.9h0M1069.4 528.1h0M1069.8 521.9h0M1070.1 534.0h0M1070.4 537.1h0M1070.7 539.0h0M1071.1 535.6h0M1071.4 512.3h0M1071.7 514.4h0M1072.0 503.4h0M1072.4 527.7h0M1072.7 539.8h0M1073.0 536.0h0M1073.3 538.1h0M1073.7 536.6h0M1074.0 536.4h0M1074.3 539.3h0M1074.7 519.7h0M1075.0 532.8h0M1075.3 550.6h0M1075.6 542.7h0M1076.0 533.3h0M1076.3 534.1h0M1076.6 534.9h0M1076.9 530.4h0M1077.3 529.0h0M1077.6 519.4h0M1077.9 540.2h0M1078.2 526.8h0M1078.6 526.0h0M1078.9 548.0h0M1079.2 537.3h0M1079.6 527.5h0M1079.9 547.7h0M1080.2 525.3h0M1080.5 548.7h0M1080.9 538.1h0M1081.2 531.2h0M1081.5 515.6h0M1081.8 541.0h0M1082.2 516.3h0M1082.5 520.5h0M1082.8 549.6h0M1083.2 529.7h0M1083.5 549.3h0M1083.8 529.3h0M1084.1 541.0h0M1084.5 533.4h0M1084.8 538.2h0M1085.1 534.8h0M1085.4 525.6h0M1085.8 546.8h0M1086.1 546.0h0M1086.4 521.5h0M1086.7 542.7h0M1087.1 531.2h0M1087.4 528.6h0M1087.7 532.1h0M1088.1 527.2h0M1088.4 531.9h0M1088.7 509.7h0M1089.0 511.7h0M1089.4 517.2h0M1089.7 528.2h0M1090.0 512.2h0M1090.3 528.6h0M1090.7 524.5h0M1091.0 513.2h0M1091.3 523.1h0M1091.6 538.6h0M1092.0 518.7h0M1092.3 512.9h0M1092.6 535.0h0M1093.0 539.8h0M1093.3 511.8h0M1093.6 530.9h0M1093.9 500.9h0M1094.3 542.6h0M1094.6 505.5h0M1094.9 537.1h0M1095.2 515.5h0M1095.6 527.8h0M1095.9 494.8h0M1096.2 518.1h0M1096.6 522.5h0M1096.9 522.8h0M1097.2 494.9h0M1097.5 515.8h0M1097.9 522.9h0M1098.2 524.0h0M1098.5 518.2h0M1098.8 494.5h0M1099.2 508.9h0M1099.5 519.1h0M1099.8 503.8h0M1100.1 515.3h0M1100.5 503.8h0M1100.8 510.9h0M1101.1 516.3h0M1101.5 505.3h0M1101.8 538.6h0M1102.1 505.5h0M1102.4 510.4h0M1102.8 508.9h0M1103.1 518.3h0M1103.4 517.9h0M1103.7 508.4h0M1104.1 558.5h0M1104.4 516.5h0M1104.7 517.9h0M1105.0 499.0h0M1105.4 505.1h0M1105.7 522.8h0M1106.0 525.5h0M1106.4 530.4h0M1106.7 513.5h0M1107.0 529.8h0M1107.3 522.2h0M1107.7 515.7h0M1108.0 517.0h0M1108.3 530.9h0M1108.6 525.9h0M1109.0 519.6h0M1109.3 508.5h0M1109.6 505.0h0M1110.0 508.9h0M1110.3 525.6h0M1110.6 523.2h0M1110.9 519.3h0M1111.3 526.0h0M1111.6 524.0h0M1111.9 528.6h0M1112.2 520.6h0M1112.6 531.7h0M1112.9 526.7h0M1113.2 537.2h0M1113.5 528.1h0M1113.9 522.1h0M1114.2 517.5h0M1114.5 506.1h0M1114.9 508.4h0M1115.2 548.1h0M1115.5 539.7h0M1115.8 539.2h0M1116.2 536.3h0M1116.5 537.9h0M1116.8 565.5h0M1117.1 526.9h0M1117.5 538.0h0M1117.8 535.4h0M1118.1 521.6h0M1118.4 524.2h0M1118.8 521.9h0M1119.1 536.5h0M1119.4 525.7h0M1119.8 536.2h0M1120.1 524.0h0M1120.4 538.5h0M1120.7 545.1h0M1121.1 543.9h0M1121.4 522.1h0M1121.7 510.3h0M1122.0 522.5h0M1122.4 526.0h0M1122.7 532.2h0M1123.0 545.7h0M1123.4 530.8h0M1123.7 536.5h0M1124.0 540.6h0M1124.3 538.3h0M1124.7 526.7h0M1125.0 529.1h0M1125.3 538.9h0M1125.6 534.9h0M1126.0 521.4h0M1126.3 544.7h0M1126.6 497.9h0M1126.9 540.3h0M1127.3 540.6h0M1127.6 543.5h0M1127.9 536.2h0M1128.3 545.4h0M1128.6 556.1h0M1128.9 539.8h0M1129.2 558.5h0M1129.6 533.9h0M1129.9 533.8h0M1130.2 561.3h0M1130.5 563.4h0M1130.9 538.0h0M1131.2 538.7h0M1131.5 526.0h0M1131.8 544.3h0M1132.2 540.7h0M1132.5 524.6h0M1132.8 544.6h0M1133.2 550.8h0M1133.5 542.3h0M1133.8 559.6h0M1134.1 553.8h0M1134.5 544.9h0M1134.8 540.6h0M1135.1 550.0h0M1135.4 559.0h0M1135.8 554.5h0M1136.1 552.6h0M1136.4 541.3h0M1136.8 545.1h0M1137.1 553.5h0M1137.4 543.5h0M1137.7 533.9h0M1138.1 567.2h0M1138.4 527.5h0M1138.7 541.5h0M1139.0 545.8h0M1139.4 549.2h0M1139.7 525.4h0M1140.0 541.3h0M1140.3 528.8h0M1140.7 541.0h0M1141.0 544.4h0M1141.3 555.2h0M1141.7 540.6h0M1142.0 535.5h0M1142.3 526.9h0M1142.6 527.3h0M1143.0 507.1h0M1143.3 531.4h0M1143.6 513.4h0M1143.9 506.0h0M1144.3 518.4h0M1144.6 514.1h0M1144.9 509.0h0M1145.2 507.5h0M1145.6 520.7h0M1145.9 509.9h0M1146.2 496.2h0M1146.6 500.2h0M1146.9 524.4h0M1147.2 495.5h0M1147.5 517.0h0M1147.9 498.1h0M1148.2 503.6h0M1148.5 496.6h0M1148.8 477.6h0M1149.2 490.2h0M1149.5 517.0h0M1149.8 491.0h0M1150.1 502.6h0M1150.5 492.0h0M1150.8 496.5h0M1151.1 501.2h0M1151.5 500.2h0M1151.8 514.2h0M1152.1 486.9h0M1152.4 484.6h0M1152.8 479.1h0M1153.1 482.0h0M1153.4 483.3h0M1153.7 497.8h0M1154.1 482.7h0M1154.4 503.3h0M1154.7 492.5h0M1155.1 492.4h0M1155.4 486.8h0M1155.7 494.1h0M1156.0 492.4h0M1156.4 503.1h0M1156.7 481.3h0M1157.0 486.1h0M1157.3 488.9h0M1157.7 484.3h0M1158.0 478.3h0M1158.3 470.7h0M1158.6 475.5h0M1159.0 493.6h0M1159.3 485.3h0M1159.6 499.8h0M1160.0 512.0h0M1160.3 508.1h0M1160.6 511.6h0M1160.9 507.2h0M1161.3 487.3h0M1161.6 480.5h0M1161.9 503.5h0M1162.2 481.0h0M1162.6 489.4h0M1162.9 481.6h0M1163.2 499.4h0M1163.5 477.7h0M1163.9 495.2h0M1164.2 483.5h0M1164.5 474.4h0M1164.9 488.0h0M1165.2 488.4h0M1165.5 475.4h0M1165.8 476.5h0M1166.2 476.2h0M1166.5 477.1h0M1166.8 484.6h0M1167.1 483.1h0M1167.5 485.4h0M1167.8 474.8h0M1168.1 487.4h0M1168.5 471.9h0M1168.8 464.7h0M1169.1 468.3h0M1169.4 480.7h0M1169.8 478.3h0M1170.1 488.4h0M1170.4 462.7h0M1170.7 472.3h0M1171.1 481.5h0M1171.4 466.5h0M1171.7 478.0h0M1172.0 472.6h0M1172.4 470.0h0M1172.7 493.8h0M1173.0 476.6h0M1173.4 497.1h0M1173.7 479.9h0M1174.0 471.9h0M1174.3 474.6h0M1174.7 481.5h0M1175.0 479.4h0M1175.3 485.3h0M1175.6 465.5h0M1176.0 494.2h0M1176.3 489.7h0M1176.6 491.1h0M1176.9 459.1h0M1177.3 447.3h0M1177.6 469.9h0M1177.9 475.9h0M1178.3 471.9h0M1178.6 466.9h0M1178.9 465.5h0M1179.2 479.0h0M1179.6 464.5h0M1179.9 491.1h0M1180.2 468.4h0M1180.5 478.4h0M1180.9 489.3h0M1181.2 472.2h0M1181.5 475.0h0M1181.9 494.1h0M1182.2 471.2h0M1182.5 490.6h0M1182.8 483.7h0M1183.2 473.4h0M1183.5 477.0h0M1183.8 477.3h0M1184.1 483.6h0M1184.5 488.2h0M1184.8 488.7h0M1185.1 490.2h0M1185.4 472.4h0M1185.8 482.7h0M1186.1 492.5h0M1186.4 495.6h0M1186.8 490.0h0M1187.1 473.8h0M1187.4 482.6h0M1187.7 494.9h0M1188.1 498.1h0M1188.4 483.9h0M1188.7 492.5h0M1189.0 479.1h0M1189.4 495.8h0M1189.7 476.8h0M1190.0 485.7h0M1190.3 471.7h0M1190.7 492.7h0M1191.0 491.9h0M1191.3 487.4h0M1191.7 484.3h0M1192.0 489.8h0M1192.3 479.3h0M1192.6 480.8h0M1193.0 487.2h0M1193.3 502.0h0M1193.6 503.2h0M1193.9 485.3h0M1194.3 492.8h0M1194.6 470.4h0M1194.9 494.7h0M1195.3 500.6h0M1195.6 510.3h0M1195.9 511.1h0M1196.2 515.1h0M1196.6 511.6h0M1196.9 530.1h0M1197.2 517.5h0M1197.5 528.5h0M1197.9 511.5h0M1198.2 513.6h0M1198.5 518.1h0M1198.8 511.5h0M1199.2 514.3h0M1199.5 521.2h0M1199.8 512.5h0M1200.2 495.1h0M1200.5 531.8h0M1200.8 513.9h0M1201.1 532.7h0M1201.5 520.4h0M1201.8 511.3h0M1202.1 523.7h0M1202.4 509.7h0M1202.8 522.1h0M1203.1 518.7h0M1203.4 529.0h0M1203.7 534.0h0M1204.1 513.1h0M1204.4 535.6h0M1204.7 512.2h0M1205.1 527.2h0M1205.4 512.8h0M1205.7 511.6h0M1206.0 555.6h0M1206.4 552.4h0M1206.7 549.1h0M1207.0 516.5h0M1207.3 526.7h0M1207.7 528.4h0M1208.0 523.9h0M1208.3 523.7h0M1208.7 512.2h0M1209.0 513.6h0M1209.3 513.0h0M1209.6 516.0h0M1210.0 521.4h0M1210.3 514.7h0M1210.6 513.5h0M1210.9 518.0h0M1211.3 526.6h0M1211.6 533.4h0M1211.9 522.6h0M1212.2 523.3h0M1212.6 500.0h0M1212.9 518.5h0M1213.2 530.4h0M1213.6 512.3h0M1213.9 513.7h0M1214.2 512.9h0M1214.5 541.1h0M1214.9 518.3h0M1215.2 514.0h0M1215.5 520.4h0M1215.8 530.1h0M1216.2 525.6h0M1216.5 500.4h0M1216.8 527.9h0M1217.1 520.4h0M1217.5 512.7h0M1217.8 514.5h0M1218.1 505.1h0M1218.5 516.9h0M1218.8 512.2h0M1219.1 518.0h0M1219.4 510.6h0M1219.8 508.6h0M1220.1 502.4h0M1220.4 502.5h0M1220.7 499.1h0M1221.1 496.2h0M1221.4 500.2h0M1221.7 492.1h0M1222.1 484.4h0M1222.4 486.3h0M1222.7 504.7h0M1223.0 514.9h0M1223.4 502.5h0M1223.7 487.3h0M1224.0 481.3h0M1224.3 489.9h0M1224.7 496.4h0M1225.0 491.8h0M1225.3 479.6h0M1225.6 490.1h0M1226.0 486.7h0M1226.3 520.8h0M1226.6 494.2h0M1227.0 511.1h0M1227.3 512.3h0M1227.6 502.0h0M1227.9 506.3h0M1228.3 499.8h0M1228.6 528.2h0M1228.9 512.2h0M1229.2 526.4h0M1229.6 506.3h0M1229.9 501.5h0M1230.2 512.0h0M1230.5 506.8h0M1230.9 501.0h0M1231.2 497.2h0M1231.5 508.5h0M1231.9 497.0h0M1232.2 502.7h0M1232.5 497.2h0M1232.8 485.0h0M1233.2 505.1h0M1233.5 516.4h0M1233.8 493.6h0M1234.1 500.5h0M1234.5 515.6h0M1234.8 512.0h0M1235.1 484.0h0M1235.5 514.0h0M1235.8 502.9h0M1236.1 489.5h0M1236.4 479.6h0M1236.8 495.3h0M1237.1 507.3h0M1237.4 498.0h0M1237.7 502.3h0M1238.1 473.8h0M1238.4 492.8h0M1238.7 478.8h0M1239.0 499.7h0M1239.4 501.9h0M1239.7 473.3h0M1240.0 477.0h0M1240.4 504.5h0M1240.7 506.0h0M1241.0 503.0h0M1241.3 509.4h0M1241.7 518.6h0M1242.0 495.0h0M1242.3 490.9h0M1242.6 503.4h0M1243.0 483.5h0M1243.3 484.7h0M1243.6 492.0h0M1243.9 496.7h0M1244.3 491.1h0M1244.6 499.0h0M1244.9 492.4h0M1245.3 517.7h0M1245.6 514.3h0M1245.9 512.5h0M1246.2 516.1h0M1246.6 510.3h0M1246.9 496.4h0M1247.2 501.4h0M1247.5 508.7h0M1247.9 521.1h0M1248.2 501.4h0M1248.5 539.6h0M1248.8 508.7h0M1249.2 519.8h0M1249.5 506.9h0M1249.8 499.5h0M1250.2 518.2h0M1250.5 486.4h0M1250.8 522.4h0M1251.1 508.4h0M1251.5 517.3h0M1251.8 509.8h0M1252.1 538.3h0M1252.4 514.3h0M1252.8 518.5h0M1253.1 525.3h0M1253.4 526.5h0M1253.8 505.0h0M1254.1 499.5h0M1254.4 518.3h0M1254.7 526.5h0M1255.1 512.6h0M1255.4 502.0h0M1255.7 513.6h0M1256.0 531.6h0M1256.4 521.1h0M1256.7 517.6h0M1257.0 516.4h0M1257.3 521.8h0M1257.7 516.1h0M1258.0 514.9h0M1258.3 513.3h0M1258.7 509.7h0M1259.0 517.1h0M1259.3 529.2h0M1259.6 521.1h0M1260.0 518.1h0M1260.3 528.9h0M1260.6 527.4h0M1260.9 519.7h0M1261.3 515.7h0M1261.6 530.7h0M1261.9 551.3h0M1262.2 524.0h0M1262.6 513.5h0M1262.9 529.3h0M1263.2 521.9h0M1263.6 521.3h0M1263.9 526.8h0M1264.2 550.2h0M1264.5 539.0h0M1264.9 550.3h0M1265.2 548.6h0M1265.5 542.3h0M1265.8 545.0h0M1266.2 527.3h0M1266.5 530.9h0M1266.8 522.8h0M1267.2 552.6h0M1267.5 547.8h0M1267.8 540.3h0M1268.1 542.5h0M1268.5 535.7h0M1268.8 531.2h0M1269.1 534.3h0M1269.4 526.7h0M1269.8 532.9h0M1270.1 511.9h0M1270.4 516.7h0M1270.7 500.7h0M1271.1 519.5h0M1271.4 516.2h0M1271.7 512.9h0M1272.1 515.0h0M1272.4 519.7h0M1272.7 513.1h0M1273.0 498.2h0M1273.4 508.5h0M1273.7 483.7h0M1274.0 493.6h0M1274.3 498.1h0M1274.7 507.1h0M1275.0 511.4h0M1275.3 502.0h0M1275.6 509.2h0M1276.0 506.5h0M1276.3 504.2h0M1276.6 504.7h0M1277.0 482.6h0M1277.3 501.9h0M1277.6 507.0h0M1277.9 499.2h0M1278.3 479.3h0M1278.6 493.3h0M1278.9 494.3h0M1279.2 484.2h0M1279.6 494.1h0M1279.9 480.5h0M1280.2 483.8h0M1280.6 486.1h0M1280.9 509.0h0M1281.2 484.7h0M1281.5 481.8h0M1281.9 485.2h0M1282.2 481.4h0M1282.5 485.5h0M1282.8 462.8h0M1283.2 484.0h0M1283.5 486.9h0M1283.8 491.2h0M1284.1 499.0h0M1284.5 489.3h0M1284.8 495.5h0M1285.1 487.5h0M1285.5 483.8h0M1285.8 485.2h0M1286.1 480.6h0M1286.4 502.1h0M1286.8 506.1h0M1287.1 492.2h0M1287.4 480.1h0M1287.7 486.5h0M1288.1 502.9h0M1288.4 497.9h0M1288.7 490.3h0M1289.0 487.2h0M1289.4 490.9h0M1289.7 501.8h0M1290.0 506.7h0M1290.4 488.6h0M1290.7 501.7h0M1291.0 495.5h0M1291.3 476.2h0M1291.7 466.6h0M1292.0 490.4h0M1292.3 481.7h0M1292.6 486.7h0M1293.0 475.3h0M1293.3 471.6h0M1293.6 504.7h0M1294.0 492.2h0M1294.3 489.1h0M1294.6 499.5h0M1294.9 499.4h0M1295.3 477.5h0M1295.6 491.3h0M1295.9 478.3h0M1296.2 489.5h0M1296.6 479.7h0M1296.9 508.1h0M1297.2 481.2h0M1297.5 490.2h0M1297.9 493.3h0M1298.2 483.4h0M1298.5 496.8h0M1298.9 485.1h0M1299.2 481.6h0M1299.5 491.9h0M1299.8 475.5h0M1300.2 496.8h0M1300.5 488.3h0M1300.8 492.9h0M1301.1 492.1h0M1301.5 478.5h0M1301.8 469.6h0M1302.1 482.3h0M1302.4 489.4h0M1302.8 471.4h0" stroke="#000" stroke-width="3.70" stroke-linecap="round" fill="none"/>
<path d="M193.9 665.8l-2.9 -5.2h5.8z" fill="#ffa500"/>
<path d="M244.9 665.8l-2.9 -5.2h5.8z" fill="#ffa500"/>
<path d="M273.4 665.8l-2.9 -5.2h5.8z" fill="#ffa500"/>
<path d="M269.4 665.8l-2.9 -5.2h5.8z" fill="#ffa500"/>
<path d="M239.9 665.8l-2.9 -5.2h5.8z" fill="#ffa500"/>
<path d="M351.4 665.8l-2.9 -5.2h5.8z" fill="#ffa500"/>
<path d="M396.4 665.8l-2.9 -5.2h5.8z" fill="#ffa500"/>
<path d="M402.4 665.8l-2.9 -5.2h5.8z" fill="#ffa500"/>
<path d="M405.4 665.8l-2.9 -5.2h5.8z" fill="#ffa500"/>
<path d="M398.4 665.8l-2.9 -5.2h5.8z" fill="#ffa500"/>
<path d="M445.4 665.8l-2.9 -5.2h5.8z" fill="#ffa500"/>
<path d="M451.4 665.8l-2.9 -5.2h5.8z" fill="#ffa500"/>
<path d="M461.4 665.8l-2.9 -5.2h5.8z" fill="#ffa500"/>
<path d="M482.4 665.8l-2.9 -5.2h5.8z" fill="#ffa500"/>
<path d="M489.4 665.8l-2.9 -5.2h5.8z" fill="#ffa500"/>
<path d="M452.4 665.8l-2.9 -5.2h5.8z" fill="#ffa500"/>
<path d="M1057.4 665.8l-2.9 -5.2h5.8z" fill="#ffa500"/>
<rect x="105.5" y="499.2" width="1254.9" height="48.0" fill="#ff0000" fill-opacity="0.1" stroke="#ff0000" stroke-opacity="0.1" stroke-width="1.1"/>
<rect x="162" y="519.8" width="127" height="35.2" fill="#ffa500" fill-opacity="0.1" stroke="#ffa500" stroke-opacity="0.1" stroke-width="1.1"/>
<rect x="289" y="496.7" width="1014" height="51" fill="#ffa500" fill-opacity="0.1" stroke="#ffa500" stroke-opacity="0.1" stroke-width="1.1"/>
<line x1="162.3" y1="537.3" x2="290.3" y2="537.3" stroke="#ffa500" stroke-width="2.9"/>
<line x1="289" y1="522.4" x2="1303" y2="522.4" stroke="#ffa500" stroke-width="2.9" stroke-linecap="square"/>
<line x1="105.5" y1="522.9" x2="1361.0" y2="522.9" stroke="#ff0000" stroke-width="2.08"/>
<line x1="162.1" y1="666.5" x2="162.1" y2="380.5" stroke="#800080" stroke-width="2.08" stroke-dasharray="2.08 3.44"/>
<line x1="289.0" y1="666.5" x2="289.0" y2="380.5" stroke="#800080" stroke-width="2.08" stroke-dasharray="2.08 3.44"/>
<line x1="1302.9" y1="666.5" x2="1302.9" y2="380.5" stroke="#800080" stroke-width="2.08" stroke-dasharray="2.08 3.44"/>
</g>
<rect x="105.5" y="380.5" width="1380.0" height="286.0" fill="none" stroke="#000" stroke-width="1"/>
<line x1="162.5" y1="666.5" x2="162.5" y2="671.7" stroke="#000" stroke-width="1"/>
<text x="163.8" y="686.8" text-anchor="middle" font-size="13.89">0</text>
<line x1="322.5" y1="666.5" x2="322.5" y2="671.7" stroke="#000" stroke-width="1"/>
<text x="321.6" y="686.8" text-anchor="middle" font-size="13.89">500</text>
<line x1="481.5" y1="666.5" x2="481.5" y2="671.7" stroke="#000" stroke-width="1"/>
<text x="481.0" y="686.8" text-anchor="middle" font-size="13.89">1000</text>
<line x1="640.5" y1="666.5" x2="640.5" y2="671.7" stroke="#000" stroke-width="1"/>
<text x="640.3" y="686.8" text-anchor="middle" font-size="13.89">1500</text>
<line x1="800.5" y1="666.5" x2="800.5" y2="671.7" stroke="#000" stroke-width="1"/>
<text x="799.7" y="686.8" text-anchor="middle" font-size="13.89">2000</text>
<line x1="959.5" y1="666.5" x2="959.5" y2="671.7" stroke="#000" stroke-width="1"/>
<text x="959.0" y="686.8" text-anchor="middle" font-size="13.89">2500</text>
<line x1="1118.5" y1="666.5" x2="1118.5" y2="671.7" stroke="#000" stroke-width="1"/>
<text x="1118.4" y="686.8" text-anchor="middle" font-size="13.89">3000</text>
<line x1="1278.5" y1="666.5" x2="1278.5" y2="671.7" stroke="#000" stroke-width="1"/>
<text x="1277.8" y="686.8" text-anchor="middle" font-size="13.89">3500</text>
<line x1="1437.5" y1="666.5" x2="1437.5" y2="671.7" stroke="#000" stroke-width="1"/>
<text x="1437.1" y="686.8" text-anchor="middle" font-size="13.89">4000</text>
<line x1="100.3" y1="396.5" x2="105.5" y2="396.5" stroke="#000" stroke-width="1"/>
<text x="95.8" y="401.6" text-anchor="end" font-size="13.89">9.225</text>
<line x1="100.3" y1="432.5" x2="105.5" y2="432.5" stroke="#000" stroke-width="1"/>
<text x="95.8" y="437.7" text-anchor="end" font-size="13.89">9.200</text>
<line x1="100.3" y1="468.5" x2="105.5" y2="468.5" stroke="#000" stroke-width="1"/>
<text x="95.8" y="473.8" text-anchor="end" font-size="13.89">9.175</text>
<line x1="100.3" y1="504.5" x2="105.5" y2="504.5" stroke="#000" stroke-width="1"/>
<text x="95.8" y="510.0" text-anchor="end" font-size="13.89">9.150</text>
<line x1="100.3" y1="540.5" x2="105.5" y2="540.5" stroke="#000" stroke-width="1"/>
<text x="95.8" y="546.1" text-anchor="end" font-size="13.89">9.125</text>
<line x1="100.3" y1="576.5" x2="105.5" y2="576.5" stroke="#000" stroke-width="1"/>
<text x="95.8" y="582.2" text-anchor="end" font-size="13.89">9.100</text>
<line x1="100.3" y1="613.5" x2="105.5" y2="613.5" stroke="#000" stroke-width="1"/>
<text x="95.8" y="618.4" text-anchor="end" font-size="13.89">9.075</text>
<line x1="100.3" y1="649.5" x2="105.5" y2="649.5" stroke="#000" stroke-width="1"/>
<text x="95.8" y="654.5" text-anchor="end" font-size="13.89">9.050</text>
<text x="795.5" y="371.8" text-anchor="middle" font-size="16.67">Magnitude Estimates</text>
<text x="225.4" y="656.7" text-anchor="middle" font-size="13.89">43111</text>
<text x="795.5" y="637.1" text-anchor="middle" font-size="13.89">43109</text>
<rect x="1365.4" y="387.4" width="113.1" height="48.2" rx="2.8" fill="#fff" fill-opacity="0.8" stroke="#ccc" stroke-opacity="0.8" stroke-width="1.11"/>
<line x1="1370.6" y1="399.5" x2="1398.4" y2="399.5" stroke="#ffa500" stroke-width="2.9" stroke-linecap="square"/>
<line x1="1370.2" y1="422.0" x2="1398.0" y2="422.0" stroke="#ff0000" stroke-width="2.08" stroke-linecap="square"/>
<text x="1410.0" y="403.8" font-size="13.89">mag<tspan font-size="9.72" font-style="oblique" dy="2.1">OBSID</tspan></text>
<text x="1409.2" y="426.5" font-size="13.89">mag</text>
<rect x="1348.1" y="613.2" width="130.5" height="46.2" rx="2.8" fill="#fff" fill-opacity="0.8" stroke="#ccc" stroke-opacity="0.8" stroke-width="1.11"/>
<circle cx="1367.4" cy="626.4" r="1.75" fill="#ffa500"/>
<circle cx="1367.4" cy="647.4" r="1.9" fill="#000"/>
<text x="1393.2" y="629.7" font-size="13.89">Highlighted</text>
<text x="1393.2" y="650.7" font-size="13.89">OK</text>
<g clip-path="url(#c2)">
<line x1="162.1" y1="1011.5" x2="162.1" y2="725.5" stroke="#800080" stroke-width="2.08" stroke-dasharray="2.08 3.44"/>
<line x1="289.0" y1="1011.5" x2="289.0" y2="725.5" stroke="#800080" stroke-width="2.08" stroke-dasharray="2.08 3.44"/>
<line x1="1302.9" y1="1011.5" x2="1302.9" y2="725.5" stroke="#800080" stroke-width="2.08" stroke-dasharray="2.08 3.44"/>
<line x1="105.5" y1="954.5" x2="1485.5" y2="954.5" stroke="#000" stroke-width="1"/>
<line x1="162.5" y1="763.5" x2="185.1" y2="763.5" stroke="#000" stroke-width="3" stroke-linecap="round"/>
<path d="M160.4 959.6L162.2 955.2H184.6Q186.6 955.2 186.6 957.4T184.6 959.6z" fill="#ff0000"/>
<line x1="289.7" y1="763.5" x2="306.3" y2="763.5" stroke="#000" stroke-width="3" stroke-linecap="round"/>
<path d="M287.6 959.6L289.4 955.2H305.8Q307.8 955.2 307.8 957.4T305.8 959.6z" fill="#ff0000"/>
<line x1="754.7" y1="763.5" x2="890.4" y2="763.5" stroke="#000" stroke-width="3" stroke-linecap="round"/>
<path d="M752.6 959.6L754.4 955.2H889.9Q891.9 955.2 891.9 957.4T889.9 959.6z" fill="#ff0000"/>
<path d="M239.1 840.5a1 1 0 1 0 2 0a1 1 0 1 0 -2 0zM244.5 840.5a1 1 0 1 0 2 0a1 1 0 1 0 -2 0zM271.1 840.5a1 1 0 1 0 2 0a1 1 0 1 0 -2 0zM304.2 840.5a1 1 0 1 0 2 0a1 1 0 1 0 -2 0zM389.0 840.5a1 1 0 1 0 2 0a1 1 0 1 0 -2 0zM396.5 840.5a1 1 0 1 0 2 0a1 1 0 1 0 -2 0zM399.1 840.5a1 1 0 1 0 2 0a1 1 0 1 0 -2 0zM406.9 840.5a1 1 0 1 0 2 0a1 1 0 1 0 -2 0zM419.1 840.5a1 1 0 1 0 2 0a1 1 0 1 0 -2 0zM425.0 840.5a1 1 0 1 0 2 0a1 1 0 1 0 -2 0zM429.0 840.5a1 1 0 1 0 2 0a1 1 0 1 0 -2 0zM446.3 840.5a1 1 0 1 0 2 0a1 1 0 1 0 -2 0zM453.5 840.5a1 1 0 1 0 2 0a1 1 0 1 0 -2 0zM455.7 840.5a1 1 0 1 0 2 0a1 1 0 1 0 -2 0zM471.1 840.5a1 1 0 1 0 2 0a1 1 0 1 0 -2 0zM475.1 840.5a1 1 0 1 0 2 0a1 1 0 1 0 -2 0zM500.5 840.5a1 1 0 1 0 2 0a1 1 0 1 0 -2 0zM520.5 840.5a1 1 0 1 0 2 0a1 1 0 1 0 -2 0zM887.3 840.5a1 1 0 1 0 2 0a1 1 0 1 0 -2 0zM888.3 840.5a1 1 0 1 0 2 0a1 1 0 1 0 -2 0zM1039.5 840.5a1 1 0 1 0 2 0a1 1 0 1 0 -2 0zM1142.0 840.5a1 1 0 1 0 2 0a1 1 0 1 0 -2 0zM1258.0 840.5a1 1 0 1 0 2 0a1 1 0 1 0 -2 0z" fill="#fff" stroke="#000" stroke-width="1"/>
<path d="M239.1 878.5a1 1 0 1 0 2 0a1 1 0 1 0 -2 0zM244.5 878.5a1 1 0 1 0 2 0a1 1 0 1 0 -2 0zM271.1 878.5a1 1 0 1 0 2 0a1 1 0 1 0 -2 0zM385.3 878.5a1 1 0 1 0 2 0a1 1 0 1 0 -2 0zM389.0 878.5a1 1 0 1 0 2 0a1 1 0 1 0 -2 0zM391.7 878.5a1 1 0 1 0 2 0a1 1 0 1 0 -2 0zM396.5 878.5a1 1 0 1 0 2 0a1 1 0 1 0 -2 0zM399.1 878.5a1 1 0 1 0 2 0a1 1 0 1 0 -2 0zM401.8 878.5a1 1 0 1 0 2 0a1 1 0 1 0 -2 0zM406.9 878.5a1 1 0 1 0 2 0a1 1 0 1 0 -2 0zM419.1 878.5a1 1 0 1 0 2 0a1 1 0 1 0 -2 0zM425.0 878.5a1 1 0 1 0 2 0a1 1 0 1 0 -2 0zM429.0 878.5a1 1 0 1 0 2 0a1 1 0 1 0 -2 0zM446.3 878.5a1 1 0 1 0 2 0a1 1 0 1 0 -2 0zM453.5 878.5a1 1 0 1 0 2 0a1 1 0 1 0 -2 0zM455.7 878.5a1 1 0 1 0 2 0a1 1 0 1 0 -2 0zM471.1 878.5a1 1 0 1 0 2 0a1 1 0 1 0 -2 0zM475.1 878.5a1 1 0 1 0 2 0a1 1 0 1 0 -2 0zM500.5 878.5a1 1 0 1 0 2 0a1 1 0 1 0 -2 0zM520.5 878.5a1 1 0 1 0 2 0a1 1 0 1 0 -2 0zM1039.5 878.5a1 1 0 1 0 2 0a1 1 0 1 0 -2 0zM1142.0 878.5a1 1 0 1 0 2 0a1 1 0 1 0 -2 0zM1258.0 878.5a1 1 0 1 0 2 0a1 1 0 1 0 -2 0z" fill="#fff" stroke="#000" stroke-width="1"/>
<path d="M240.1 955.8l-1.4 3h2.8zM245.5 955.8l-1.4 3h2.8zM272.1 955.8l-1.4 3h2.8zM390.0 955.8l-1.4 3h2.8zM397.5 955.8l-1.4 3h2.8zM400.1 955.8l-1.4 3h2.8zM407.9 955.8l-1.4 3h2.8zM420.1 955.8l-1.4 3h2.8zM426.0 955.8l-1.4 3h2.8zM430.0 955.8l-1.4 3h2.8zM447.3 955.8l-1.4 3h2.8zM454.5 955.8l-1.4 3h2.8zM456.7 955.8l-1.4 3h2.8zM472.1 955.8l-1.4 3h2.8zM476.1 955.8l-1.4 3h2.8zM501.5 955.8l-1.4 3h2.8zM521.5 955.8l-1.4 3h2.8zM1040.5 955.8l-1.4 3h2.8zM1143.0 955.8l-1.4 3h2.8zM1259.0 955.8l-1.4 3h2.8z" fill="#fff" stroke="#ff0000" stroke-width="1.15" stroke-linejoin="round"/>
<path d="M386.3 981.3h0M393.2 982.4h0M403.3 981.3h0M439.3 987.5h0M443.3 986.1h0M447.3 983.2h0M452.1 991.2h0M458.5 986.4h0M469.5 992.3h0" stroke="#ff0000" stroke-width="2.70" stroke-linecap="round" fill="none"/>
<path d="M185.0 1003.7h0M185.3 1004.2h0M185.7 1004.1h0M186.0 1004.0h0M186.3 1003.3h0M186.6 1003.9h0M187.0 1004.2h0M187.3 1003.9h0M187.6 1003.8h0M187.9 1004.6h0M188.3 1003.9h0M188.6 1004.2h0M188.9 1004.4h0M189.2 1005.5h0M189.6 1004.7h0M189.9 1004.3h0M190.2 1004.8h0M190.6 1003.7h0M190.9 1004.4h0M191.2 1004.6h0M191.5 1003.9h0M191.9 1003.9h0M192.2 1003.5h0M192.5 1003.8h0M192.8 1003.1h0M193.2 1003.7h0M193.5 1003.7h0M193.8 1004.5h0M194.2 1004.6h0M194.5 1004.5h0M194.8 1005.1h0M195.1 1005.3h0M195.5 1005.5h0M195.8 1005.6h0M196.1 1005.7h0M196.4 1006.0h0M196.8 1006.2h0M197.1 1006.8h0M197.4 1007.3h0M197.7 1008.0h0M198.1 1007.7h0M198.4 1007.6h0M198.7 1007.7h0M199.1 1006.2h0M199.4 1007.2h0M199.7 1006.1h0M200.0 1005.8h0M200.4 1005.8h0M200.7 1004.5h0M201.0 1005.2h0M201.3 1005.2h0M201.7 1004.0h0M202.0 1004.7h0M202.3 1004.7h0M202.6 1004.3h0M203.0 1003.9h0M203.3 1003.3h0M203.6 1003.0h0M204.0 1003.4h0M204.3 1002.4h0M204.6 1002.0h0M204.9 1003.4h0M205.3 1003.5h0M205.6 1003.4h0M205.9 1003.5h0M206.2 1004.5h0M206.6 1004.9h0M206.9 1005.2h0M207.2 1004.7h0M207.6 1005.1h0M207.9 1006.5h0M208.2 1006.7h0M208.5 1006.4h0M208.9 1006.6h0M209.2 1005.9h0M209.5 1006.0h0M209.8 1005.4h0M210.2 1005.9h0M210.5 1006.1h0M210.8 1005.8h0M211.1 1006.6h0M211.5 1006.8h0M211.8 1006.3h0M212.1 1006.0h0M212.5 1007.0h0M212.8 1006.1h0M213.1 1006.1h0M213.4 1006.6h0M213.8 1006.4h0M214.1 1006.6h0M214.4 1006.5h0M214.7 1006.3h0M215.1 1006.9h0M215.4 1006.3h0M215.7 1006.4h0M216.0 1006.4h0M216.4 1007.5h0M216.7 1007.5h0M217.0 1006.6h0M217.4 1007.1h0M217.7 1007.1h0M218.0 1007.2h0M218.3 1007.4h0M218.7 1007.1h0M219.0 1007.3h0M219.3 1007.3h0M219.6 1006.9h0M220.0 1007.5h0M220.3 1006.7h0M220.6 1008.0h0M221.0 1006.3h0M221.3 1007.7h0M221.6 1006.6h0M221.9 1006.0h0M222.3 1005.9h0M222.6 1005.1h0M222.9 1004.9h0M223.2 1005.0h0M223.6 1003.8h0M223.9 1003.0h0M224.2 1003.1h0M224.5 1003.3h0M224.9 1003.1h0M225.2 1003.0h0M225.5 1003.3h0M225.9 1003.2h0M226.2 1003.6h0M226.5 1003.9h0M226.8 1005.0h0M227.2 1003.7h0M227.5 1004.7h0M227.8 1004.3h0M228.1 1004.4h0M228.5 1004.0h0M228.8 1003.6h0M229.1 1002.7h0M229.4 1002.4h0M229.8 1002.4h0M230.1 1001.6h0M230.4 1002.2h0M230.8 1001.5h0M231.1 1001.6h0M231.4 1000.6h0M231.7 1000.7h0M232.1 1000.1h0M232.4 999.8h0M232.7 1001.1h0M233.0 999.5h0M233.4 1000.2h0M233.7 1000.4h0M234.0 1001.0h0M234.4 1000.4h0M234.7 1001.1h0M235.0 1000.2h0M235.3 1000.2h0M235.7 999.5h0M236.0 1000.2h0M236.3 999.7h0M236.6 999.6h0M237.0 999.3h0M237.3 1000.1h0M237.6 999.7h0M237.9 1000.5h0M238.3 1000.4h0M238.6 1000.0h0M238.9 999.9h0M239.3 1000.3h0M239.6 1000.0h0M239.9 999.6h0M240.2 1000.0h0M240.6 999.8h0M240.9 1000.1h0M241.2 999.2h0M241.5 999.0h0M241.9 999.6h0M242.2 999.7h0M242.5 999.0h0M242.8 999.4h0M243.2 999.8h0M243.5 1000.0h0M243.8 999.7h0M244.2 998.7h0M244.5 1000.0h0M244.8 999.1h0M245.1 1000.6h0M245.5 1001.1h0M245.8 1000.9h0M246.1 1001.9h0M246.4 1002.0h0M246.8 1003.0h0M247.1 1003.4h0M247.4 1003.7h0M247.7 1003.7h0M248.1 1004.4h0M248.4 1005.3h0M248.7 1004.8h0M249.1 1005.5h0M249.4 1005.9h0M249.7 1006.4h0M250.0 1007.1h0M250.4 1005.3h0M250.7 1005.8h0M251.0 1005.1h0M251.3 1004.4h0M251.7 1004.1h0M252.0 1004.1h0M252.3 1003.9h0M252.7 1003.4h0M253.0 1002.8h0M253.3 1002.6h0M253.6 1002.7h0M254.0 1002.0h0M254.3 1001.7h0M254.6 1001.2h0M254.9 1001.0h0M255.3 1000.4h0M255.6 1001.6h0M255.9 1002.1h0M256.2 1003.2h0M256.6 1004.3h0M256.9 1005.2h0M257.2 1005.7h0M257.6 1006.2h0M257.9 1006.8h0M258.2 1007.3h0M258.5 1007.3h0M258.9 1007.3h0M259.2 1006.5h0M259.5 1006.8h0M259.8 1007.0h0M260.2 1006.4h0M260.5 1007.1h0M260.8 1006.5h0M261.1 1006.4h0M261.5 1006.4h0M261.8 1006.6h0M262.1 1005.8h0M262.5 1005.4h0M262.8 1006.4h0M263.1 1005.8h0M263.4 1005.5h0M263.8 1004.8h0M264.1 1005.7h0M264.4 1005.8h0M264.7 1005.4h0M265.1 1004.5h0M265.4 1005.2h0M265.7 1005.0h0M266.1 1004.3h0M266.4 1005.7h0M266.7 1005.6h0M267.0 1004.4h0M267.4 1004.3h0M267.7 1005.0h0M268.0 1004.2h0M268.3 1004.3h0M268.7 1004.2h0M269.0 1004.4h0M269.3 1004.2h0M269.6 1004.3h0M270.0 1003.8h0M270.3 1003.9h0M270.6 1003.2h0M271.0 1003.7h0M271.3 1004.7h0M271.6 1004.1h0M271.9 1003.8h0M272.3 1004.3h0M272.6 1004.2h0M272.9 1004.7h0M273.2 1004.5h0M273.6 1005.3h0M273.9 1004.7h0M274.2 1005.7h0M274.5 1004.8h0M274.9 1005.9h0M275.2 1006.0h0M275.5 1004.9h0M275.9 1005.1h0M276.2 1004.8h0M276.5 1004.6h0M276.8 1004.6h0M277.2 1004.8h0M277.5 1004.3h0M277.8 1004.1h0M278.1 1004.0h0M278.5 1003.3h0M278.8 1004.2h0M279.1 1003.8h0M279.5 1003.5h0M279.8 1003.7h0M280.1 1003.9h0M280.4 1003.5h0M280.8 1002.8h0M281.1 1003.2h0M281.4 1002.7h0M281.7 1003.1h0M282.1 1002.5h0M282.4 1002.8h0M282.7 1002.8h0M283.0 1002.3h0M283.4 1002.2h0M283.7 1002.0h0M284.0 1003.7h0M284.4 1003.4h0M284.7 1003.5h0M285.0 1004.2h0M285.3 1005.3h0M285.7 1006.0h0M286.0 1006.4h0M286.3 1006.4h0M286.6 1006.3h0M287.0 1006.0h0M287.3 1005.8h0M287.6 1006.2h0M287.9 1006.1h0M288.3 1006.0h0M306.0 1004.5h0M306.3 1004.1h0M306.7 1004.2h0M307.0 1005.5h0M307.3 1004.9h0M307.6 1006.1h0M308.0 1005.6h0M308.3 1005.3h0M308.6 1005.9h0M308.9 1005.8h0M309.3 1006.1h0M309.6 1006.0h0M309.9 1005.2h0M310.2 1005.6h0M310.6 1006.2h0M310.9 1006.3h0M311.2 1006.1h0M311.6 1005.4h0M311.9 1006.1h0M312.2 1005.8h0M312.5 1006.4h0M312.9 1006.7h0M313.2 1005.8h0M313.5 1006.3h0M313.8 1006.6h0M314.2 1006.6h0M314.5 1006.6h0M314.8 1006.6h0M315.2 1007.0h0M315.5 1006.0h0M315.8 1006.3h0M316.1 1006.1h0M316.5 1006.6h0M316.8 1006.4h0M317.1 1006.5h0M317.4 1006.2h0M317.8 1006.3h0M318.1 1006.5h0M318.4 1006.9h0M318.7 1007.1h0M319.1 1007.0h0M319.4 1007.0h0M319.7 1007.0h0M320.1 1007.2h0M320.4 1006.2h0M320.7 1006.7h0M321.0 1007.6h0M321.4 1007.2h0M321.7 1006.9h0M322.0 1006.0h0M322.3 1005.3h0M322.7 1005.7h0M323.0 1004.8h0M323.3 1004.7h0M323.6 1003.8h0M324.0 1003.4h0M324.3 1003.4h0M324.6 1002.9h0M325.0 1002.8h0M325.3 1002.6h0M325.6 1002.5h0M325.9 1001.6h0M326.3 1001.4h0M326.6 1001.2h0M326.9 1001.5h0M327.2 1002.2h0M327.6 1003.2h0M327.9 1003.7h0M328.2 1003.8h0M328.6 1005.0h0M328.9 1005.0h0M329.2 1006.6h0M329.5 1006.4h0M329.9 1005.6h0M330.2 1005.1h0M330.5 1005.4h0M330.8 1004.7h0M331.2 1004.3h0M331.5 1004.0h0M331.8 1004.2h0M332.1 1004.0h0M332.5 1004.3h0M332.8 1003.4h0M333.1 1003.1h0M333.5 1002.4h0M333.8 1003.2h0M334.1 1002.8h0M334.4 1002.6h0M334.8 1001.6h0M335.1 1002.6h0M335.4 1002.0h0M335.7 1000.7h0M336.1 1001.2h0M336.4 1001.8h0M336.7 1001.3h0M337.0 1000.9h0M337.4 1000.9h0M337.7 1001.1h0M338.0 1001.3h0M338.4 1000.6h0M338.7 1000.8h0M339.0 1000.5h0M339.3 1000.5h0M339.7 1000.8h0M340.0 1000.0h0M340.3 1000.7h0M340.6 1000.2h0M341.0 1000.6h0M341.3 1000.3h0M341.6 1000.3h0M342.0 1000.3h0M342.3 999.9h0M342.6 999.5h0M342.9 999.2h0M343.3 999.3h0M343.6 999.8h0M343.9 999.1h0M344.2 999.4h0M344.6 998.9h0M344.9 1000.0h0M345.2 999.0h0M345.5 999.8h0M345.9 999.1h0M346.2 999.7h0M346.5 999.2h0M346.9 999.6h0M347.2 1000.2h0M347.5 999.9h0M347.8 999.6h0M348.2 999.5h0M348.5 1000.3h0M348.8 999.9h0M349.1 999.8h0M349.5 999.6h0M349.8 999.4h0M350.1 999.8h0M350.4 1000.0h0M350.8 999.4h0M351.1 1000.1h0M351.4 1000.1h0M351.8 1001.0h0M352.1 1001.0h0M352.4 1002.0h0M352.7 1002.0h0M353.1 1002.5h0M353.4 1002.8h0M353.7 1003.8h0M354.0 1003.9h0M354.4 1004.6h0M354.7 1004.8h0M355.0 1004.9h0M355.4 1004.5h0M355.7 1006.0h0M356.0 1006.2h0M356.3 1006.4h0M356.7 1006.1h0M357.0 1006.3h0M357.3 1006.2h0M357.6 1006.4h0M358.0 1005.7h0M358.3 1006.1h0M358.6 1007.2h0M358.9 1006.5h0M359.3 1006.6h0M359.6 1007.5h0M359.9 1007.0h0M360.3 1006.9h0M360.6 1007.0h0M360.9 1006.7h0M361.2 1007.5h0M361.6 1006.6h0M361.9 1006.6h0M362.2 1006.7h0M362.5 1007.0h0M362.9 1006.9h0M363.2 1007.1h0M363.5 1006.5h0M363.8 1006.8h0M364.2 1006.3h0M364.5 1007.2h0M364.8 1006.5h0M365.2 1007.3h0M365.5 1007.2h0M365.8 1007.5h0M366.1 1007.0h0M366.5 1007.2h0M366.8 1007.0h0M367.1 1006.7h0M367.4 1006.9h0M367.8 1005.8h0M368.1 1004.6h0M368.4 1004.0h0M368.7 1003.2h0M369.1 1001.9h0M369.4 1000.8h0M369.7 999.8h0M370.1 998.8h0M370.4 998.9h0M370.7 999.1h0M371.0 999.3h0M371.4 1000.5h0M371.7 1000.8h0M372.0 1001.7h0M372.3 1002.0h0M372.7 1002.0h0M373.0 1003.1h0M373.3 1004.1h0M373.7 1004.2h0M374.0 1004.8h0M374.3 1005.1h0M374.6 1006.6h0M375.0 1007.0h0M375.3 1007.2h0M375.6 1007.7h0M375.9 1006.2h0M376.3 1007.0h0M376.6 1006.1h0M376.9 1005.9h0M377.2 1005.1h0M377.6 1004.2h0M377.9 1003.8h0M378.2 1003.3h0M378.6 1002.9h0M378.9 1003.9h0M379.2 1003.5h0M379.5 1004.7h0M379.9 1004.6h0M380.2 1005.0h0M380.5 1005.5h0M380.8 1005.6h0M381.2 1006.2h0M381.5 1005.1h0M381.8 1005.4h0M382.1 1005.1h0M382.5 1005.1h0M382.8 1004.9h0M383.1 1005.1h0M383.5 1004.2h0M383.8 1005.2h0M384.1 1004.5h0M384.4 1004.5h0M384.8 1004.4h0M385.1 1004.1h0M385.4 1004.3h0M385.7 1003.6h0M386.1 1003.5h0M386.4 1003.6h0M386.7 1003.2h0M387.1 1003.9h0M387.4 1004.4h0M387.7 1004.1h0M388.0 1004.2h0M388.4 1003.3h0M388.7 1004.5h0M389.0 1004.2h0M389.3 1004.5h0M389.7 1004.2h0M390.0 1005.1h0M390.3 1005.0h0M390.6 1005.5h0M391.0 1005.9h0M391.3 1006.2h0M391.6 1006.3h0M392.0 1005.6h0M392.3 1006.2h0M392.6 1006.5h0M392.9 1006.6h0M393.3 1007.0h0M393.6 1006.9h0M393.9 1006.9h0M394.2 1006.6h0M394.6 1006.5h0M394.9 1007.5h0M395.2 1006.8h0M395.5 1006.4h0M395.9 1007.3h0M396.2 1007.0h0M396.5 1006.9h0M396.9 1006.6h0M397.2 1006.7h0M397.5 1007.1h0M397.8 1006.8h0M398.2 1006.6h0M398.5 1006.9h0M398.8 1006.3h0M399.1 1006.9h0M399.5 1007.4h0M399.8 1007.3h0M400.1 1007.1h0M400.5 1007.1h0M400.8 1006.8h0M401.1 1007.0h0M401.4 1006.5h0M401.8 1006.8h0M402.1 1006.6h0M402.4 1007.4h0M402.7 1007.3h0M403.1 1006.9h0M403.4 1007.1h0M403.7 1006.9h0M404.0 1007.1h0M404.4 1007.4h0M404.7 1006.6h0M405.0 1006.8h0M405.4 1007.8h0M405.7 1007.5h0M406.0 1006.6h0M406.3 1005.7h0M406.7 1005.3h0M407.0 1005.1h0M407.3 1003.7h0M407.6 1003.4h0M408.0 1002.3h0M408.3 1002.0h0M408.6 1001.1h0M408.9 1000.5h0M409.3 999.8h0M409.6 999.7h0M409.9 998.5h0M410.3 998.9h0M410.6 1000.0h0M410.9 1000.2h0M411.2 1000.7h0M411.6 1001.0h0M411.9 1001.5h0M412.2 1002.7h0M412.5 1002.6h0M412.9 1003.4h0M413.2 1004.3h0M413.5 1004.2h0M413.9 1005.3h0M414.2 1006.0h0M414.5 1005.8h0M414.8 1006.3h0M415.2 1007.2h0M415.5 1005.7h0M415.8 1004.8h0M416.1 1004.4h0M416.5 1002.6h0M416.8 1002.4h0M417.1 1001.4h0M417.4 1001.4h0M417.8 999.4h0M418.1 999.2h0M418.4 999.4h0M418.8 1000.8h0M419.1 1000.4h0M419.4 1000.9h0M419.7 1001.4h0M420.1 1003.7h0M420.4 1003.1h0M420.7 1003.8h0M421.0 1005.6h0M421.4 1005.4h0M421.7 1005.8h0M422.0 1005.9h0M422.3 1007.0h0M422.7 1006.7h0M423.0 1006.8h0M423.3 1006.7h0M423.7 1006.9h0M424.0 1006.5h0M424.3 1006.5h0M424.6 1007.3h0M425.0 1006.4h0M425.3 1007.1h0M425.6 1007.0h0M425.9 1006.5h0M426.3 1006.9h0M426.6 1006.7h0M426.9 1006.6h0M427.3 1006.7h0M427.6 1007.1h0M427.9 1007.3h0M428.2 1006.7h0M428.6 1006.7h0M428.9 1006.9h0M429.2 1007.1h0M429.5 1006.7h0M429.9 1007.0h0M430.2 1007.5h0M430.5 1007.0h0M430.8 1006.9h0M431.2 1006.8h0M431.5 1007.4h0M431.8 1007.4h0M432.2 1007.0h0M432.5 1007.3h0M432.8 1007.2h0M433.1 1006.8h0M433.5 1007.0h0M433.8 1006.5h0M434.1 1007.1h0M434.4 1006.6h0M434.8 1006.7h0M435.1 1005.9h0M435.4 1006.5h0M435.7 1006.3h0M436.1 1005.5h0M436.4 1005.9h0M436.7 1005.6h0M437.1 1005.1h0M437.4 1004.8h0M437.7 1005.2h0M438.0 1004.3h0M438.4 1004.3h0M438.7 1003.9h0M439.0 1003.6h0M439.3 1003.4h0M439.7 1002.7h0M440.0 1002.7h0M440.3 1002.6h0M440.7 1002.4h0M441.0 1002.3h0M441.3 1002.5h0M441.6 1002.6h0M442.0 1003.2h0M442.3 1003.3h0M442.6 1002.9h0M442.9 1003.8h0M443.3 1003.4h0M443.6 1003.8h0M443.9 1004.5h0M444.2 1005.0h0M444.6 1004.5h0M444.9 1005.2h0M445.2 1005.3h0M445.6 1005.9h0M445.9 1005.0h0M446.2 1005.3h0M446.5 1005.3h0M446.9 1005.1h0M447.2 1005.1h0M447.5 1005.0h0M447.8 1004.8h0M448.2 1005.1h0M448.5 1005.8h0M448.8 1004.6h0M449.1 1004.6h0M449.5 1004.7h0M449.8 1004.1h0M450.1 1005.1h0M450.5 1005.6h0M450.8 1004.0h0M451.1 1004.3h0M451.4 1005.0h0M451.8 1004.5h0M452.1 1004.0h0M452.4 1004.6h0M452.7 1003.9h0M453.1 1003.3h0M453.4 1003.5h0M453.7 1004.0h0M454.1 1003.8h0M454.4 1004.2h0M454.7 1003.7h0M455.0 1003.8h0M455.4 1004.0h0M455.7 1004.1h0M456.0 1002.8h0M456.3 1003.4h0M456.7 1003.8h0M457.0 1003.5h0M457.3 1002.8h0M457.6 1002.7h0M458.0 1003.4h0M458.3 1003.1h0M458.6 1002.9h0M459.0 1003.4h0M459.3 1003.8h0M459.6 1003.8h0M459.9 1003.5h0M460.3 1003.9h0M460.6 1004.2h0M460.9 1003.9h0M461.2 1003.5h0M461.6 1003.7h0M461.9 1004.1h0M462.2 1003.4h0M462.5 1004.5h0M462.9 1004.3h0M463.2 1004.9h0M463.5 1004.2h0M463.9 1004.6h0M464.2 1005.2h0M464.5 1005.0h0M464.8 1004.0h0M465.2 1004.3h0M465.5 1004.4h0M465.8 1004.1h0M466.1 1004.9h0M466.5 1004.6h0M466.8 1004.7h0M467.1 1004.5h0M467.4 1004.2h0M467.8 1003.8h0M468.1 1003.6h0M468.4 1003.6h0M468.8 1002.9h0M469.1 1004.0h0M469.4 1003.7h0M469.7 1003.5h0M470.1 1003.9h0M470.4 1003.6h0M470.7 1003.3h0M471.0 1003.7h0M471.4 1003.2h0M471.7 1002.8h0M472.0 1003.6h0M472.4 1004.0h0M472.7 1003.1h0M473.0 1003.4h0M473.3 1002.9h0M473.7 1003.1h0M474.0 1002.7h0M474.3 1002.4h0M474.6 1002.4h0M475.0 1002.8h0M475.3 1003.0h0M475.6 1003.4h0M475.9 1003.2h0M476.3 1002.7h0M476.6 1002.3h0M476.9 1002.5h0M477.3 1002.4h0M477.6 1002.7h0M477.9 1002.7h0M478.2 1003.0h0M478.6 1002.6h0M478.9 1003.8h0M479.2 1003.2h0M479.5 1004.1h0M479.9 1004.0h0M480.2 1004.4h0M480.5 1004.4h0M480.8 1004.0h0M481.2 1004.4h0M481.5 1004.2h0M481.8 1003.8h0M482.2 1003.6h0M482.5 1002.8h0M482.8 1002.8h0M483.1 1002.5h0M483.5 1002.1h0M483.8 1002.2h0M484.1 1001.4h0M484.4 1002.9h0M484.8 1002.5h0M485.1 1002.8h0M485.4 1003.6h0M485.8 1003.9h0M486.1 1003.7h0M486.4 1004.5h0M486.7 1005.5h0M487.1 1005.7h0M487.4 1004.6h0M487.7 1004.8h0M488.0 1003.6h0M488.4 1003.2h0M488.7 1003.4h0M489.0 1002.7h0M489.3 1002.8h0M489.7 1002.3h0M490.0 1002.0h0M490.3 1001.1h0M490.7 1001.4h0M491.0 1000.6h0M491.3 1000.1h0M491.6 999.5h0M492.0 1000.1h0M492.3 999.6h0M492.6 999.4h0M492.9 999.3h0M493.3 999.2h0M493.6 999.3h0M493.9 998.8h0M494.2 999.4h0M494.6 999.5h0M494.9 1000.0h0M495.2 999.7h0M495.6 999.8h0M495.9 1000.0h0M496.2 1000.4h0M496.5 1000.2h0M496.9 1000.0h0M497.2 1000.9h0M497.5 1001.5h0M497.8 1000.6h0M498.2 1000.7h0M498.5 1001.2h0M498.8 1001.4h0M499.2 1000.3h0M499.5 1001.6h0M499.8 1002.0h0M500.1 1001.8h0M500.5 1001.7h0M500.8 1002.5h0M501.1 1002.8h0M501.4 1003.0h0M501.8 1003.6h0M502.1 1003.8h0M502.4 1004.3h0M502.7 1005.0h0M503.1 1004.9h0M503.4 1005.1h0M503.7 1004.2h0M504.1 1004.7h0M504.4 1004.3h0M504.7 1004.7h0M505.0 1004.0h0M505.4 1004.1h0M505.7 1003.0h0M506.0 1003.4h0M506.3 1003.0h0M506.7 1003.6h0M507.0 1003.3h0M507.3 1002.7h0M507.6 1003.0h0M508.0 1002.0h0M508.3 1002.5h0M508.6 1002.2h0M509.0 1002.1h0M509.3 1002.1h0M509.6 1001.7h0M509.9 1002.1h0M510.3 1001.7h0M510.6 1001.3h0M510.9 1001.5h0M511.2 1001.5h0M511.6 1001.6h0M511.9 1001.3h0M512.2 1001.0h0M512.6 1001.3h0M512.9 1001.7h0M513.2 1000.9h0M513.5 1001.0h0M513.9 1000.6h0M514.2 1000.7h0M514.5 1000.1h0M514.8 1001.0h0M515.2 1000.8h0M515.5 1000.1h0M515.8 1000.6h0M516.1 1000.1h0M516.5 1000.1h0M516.8 1000.7h0M517.1 999.7h0M517.5 999.3h0M517.8 999.7h0M518.1 1000.1h0M518.4 999.4h0M518.8 1000.5h0M519.1 1000.5h0M519.4 1000.7h0M519.7 1001.5h0M520.1 1002.3h0M520.4 1002.1h0M520.7 1002.4h0M521.0 1003.1h0M521.4 1003.5h0M521.7 1003.3h0M522.0 1004.0h0M522.4 1004.5h0M522.7 1005.0h0M523.0 1005.1h0M523.3 1005.5h0M523.7 1006.0h0M524.0 1006.8h0M524.3 1006.8h0M524.6 1007.0h0M525.0 1006.2h0M525.3 1005.3h0M525.6 1004.9h0M526.0 1004.6h0M526.3 1004.3h0M526.6 1003.9h0M526.9 1003.2h0M527.3 1003.0h0M527.6 1002.5h0M527.9 1002.2h0M528.2 1001.4h0M528.6 1000.9h0M528.9 999.9h0M529.2 1001.0h0M529.5 1002.0h0M529.9 1002.3h0M530.2 1003.3h0M530.5 1003.5h0M530.9 1004.2h0M531.2 1004.1h0M531.5 1006.2h0M531.8 1006.5h0M532.2 1007.1h0M532.5 1006.1h0M532.8 1005.1h0M533.1 1004.8h0M533.5 1003.8h0M533.8 1002.5h0M534.1 1001.4h0M534.4 1001.2h0M534.8 1000.5h0M535.1 998.6h0M535.4 999.1h0M535.8 1000.1h0M536.1 1001.9h0M536.4 1002.7h0M536.7 1003.7h0M537.1 1004.7h0M537.4 1005.9h0M537.7 1005.6h0M538.0 1005.0h0M538.4 1005.2h0M538.7 1005.0h0M539.0 1004.6h0M539.4 1004.4h0M539.7 1003.9h0M540.0 1003.7h0M540.3 1003.5h0M540.7 1002.6h0M541.0 1002.7h0M541.3 1002.6h0M541.6 1001.8h0M542.0 1002.3h0M542.3 1002.4h0M542.6 1002.7h0M542.9 1003.1h0M543.3 1003.3h0M543.6 1003.4h0M543.9 1004.2h0M544.3 1004.1h0M544.6 1004.1h0M544.9 1004.4h0M545.2 1004.6h0M545.6 1004.2h0M545.9 1005.1h0M546.2 1005.6h0M546.5 1005.9h0M546.9 1005.7h0M547.2 1005.2h0M547.5 1005.1h0M547.8 1004.1h0M548.2 1004.7h0M548.5 1003.7h0M548.8 1003.4h0M549.2 1003.6h0M549.5 1002.6h0M549.8 1002.3h0M550.1 1002.3h0M550.5 1000.9h0M550.8 1001.1h0M551.1 1001.1h0M551.4 1000.8h0M551.8 1000.5h0M552.1 999.8h0M552.4 1000.2h0M552.8 1001.2h0M553.1 1001.6h0M553.4 1002.0h0M553.7 1002.4h0M554.1 1002.9h0M554.4 1003.6h0M554.7 1003.6h0M555.0 1004.1h0M555.4 1004.9h0M555.7 1006.1h0M556.0 1005.2h0M556.3 1004.7h0M556.7 1004.6h0M557.0 1004.2h0M557.3 1004.0h0M557.7 1004.3h0M558.0 1004.4h0M558.3 1003.2h0M558.6 1003.6h0M559.0 1003.3h0M559.3 1003.5h0M559.6 1003.4h0M559.9 1002.9h0M560.3 1003.7h0M560.6 1003.3h0M560.9 1003.7h0M561.2 1003.2h0M561.6 1003.1h0M561.9 1003.0h0M562.2 1003.2h0M562.6 1003.7h0M562.9 1003.1h0M563.2 1002.8h0M563.5 1002.8h0M563.9 1002.4h0M564.2 1002.9h0M564.5 1003.4h0M564.8 1003.2h0M565.2 1003.0h0M565.5 1002.6h0M565.8 1003.4h0M566.1 1002.6h0M566.5 1002.7h0M566.8 1003.2h0M567.1 1002.7h0M567.5 1003.1h0M567.8 1002.8h0M568.1 1002.9h0M568.4 1002.7h0M568.8 1003.2h0M569.1 1002.6h0M569.4 1003.5h0M569.7 1002.9h0M570.1 1002.9h0M570.4 1002.1h0M570.7 1002.5h0M571.1 1002.8h0M571.4 1003.0h0M571.7 1002.8h0M572.0 1003.2h0M572.4 1002.3h0M572.7 1004.1h0M573.0 1003.3h0M573.3 1004.3h0M573.7 1003.2h0M574.0 1003.9h0M574.3 1003.2h0M574.6 1004.1h0M575.0 1003.6h0M575.3 1004.0h0M575.6 1003.8h0M576.0 1004.3h0M576.3 1005.5h0M576.6 1004.8h0M576.9 1005.2h0M577.3 1004.5h0M577.6 1004.5h0M577.9 1004.3h0M578.2 1003.8h0M578.6 1003.5h0M578.9 1003.4h0M579.2 1002.1h0M579.5 1002.3h0M579.9 1002.1h0M580.2 1002.2h0M580.5 1001.5h0M580.9 1000.9h0M581.2 1000.7h0M581.5 1001.1h0M581.8 1001.2h0M582.2 1001.8h0M582.5 1001.7h0M582.8 1002.4h0M583.1 1002.5h0M583.5 1002.7h0M583.8 1002.4h0M584.1 1002.8h0M584.5 1003.1h0M584.8 1003.8h0M585.1 1003.8h0M585.4 1003.7h0M585.8 1003.8h0M586.1 1004.9h0M586.4 1004.8h0M586.7 1004.9h0M587.1 1004.9h0M587.4 1004.9h0M587.7 1004.6h0M588.0 1005.2h0M588.4 1004.1h0M588.7 1004.9h0M589.0 1004.4h0M589.4 1004.1h0M589.7 1003.8h0M590.0 1003.8h0M590.3 1003.7h0M590.7 1003.4h0M591.0 1003.8h0M591.3 1003.4h0M591.6 1003.0h0M592.0 1003.7h0M592.3 1003.8h0M592.6 1003.6h0M592.9 1002.8h0M593.3 1002.9h0M593.6 1003.6h0M593.9 1003.5h0M594.3 1003.5h0M594.6 1003.4h0M594.9 1004.5h0M595.2 1004.2h0M595.6 1004.2h0M595.9 1004.1h0M596.2 1004.3h0M596.5 1004.5h0M596.9 1004.4h0M597.2 1005.5h0M597.5 1003.7h0M597.9 1004.6h0M598.2 1004.7h0M598.5 1005.3h0M598.8 1005.0h0M599.2 1004.6h0M599.5 1004.8h0M599.8 1005.5h0M600.1 1006.0h0M600.5 1005.7h0M600.8 1005.9h0M601.1 1005.6h0M601.4 1006.5h0M601.8 1006.2h0M602.1 1006.2h0M602.4 1005.3h0M602.8 1003.7h0M603.1 1003.3h0M603.4 1002.3h0M603.7 1000.8h0M604.1 999.3h0M604.4 999.5h0M604.7 1000.3h0M605.0 1000.6h0M605.4 1001.5h0M605.7 1002.6h0M606.0 1003.1h0M606.3 1003.9h0M606.7 1004.4h0M607.0 1005.3h0M607.3 1006.4h0M607.7 1006.2h0M608.0 1006.0h0M608.3 1005.4h0M608.6 1005.2h0M609.0 1005.4h0M609.3 1004.9h0M609.6 1004.5h0M609.9 1003.9h0M610.3 1004.0h0M610.6 1003.2h0M610.9 1003.6h0M611.3 1003.1h0M611.6 1003.2h0M611.9 1003.2h0M612.2 1002.6h0M612.6 1002.2h0M612.9 1002.0h0M613.2 1002.0h0M613.5 1002.4h0M613.9 1002.7h0M614.2 1002.8h0M614.5 1002.7h0M614.8 1002.7h0M615.2 1004.4h0M615.5 1003.3h0M615.8 1003.3h0M616.2 1003.5h0M616.5 1004.0h0M616.8 1004.1h0M617.1 1004.7h0M617.5 1004.8h0M617.8 1004.8h0M618.1 1005.6h0M618.4 1005.7h0M618.8 1005.2h0M619.1 1005.5h0M619.4 1004.7h0M619.7 1004.9h0M620.1 1004.0h0M620.4 1003.8h0M620.7 1003.7h0M621.1 1003.8h0M621.4 1003.9h0M621.7 1004.7h0M622.0 1004.2h0M622.4 1004.3h0M622.7 1004.1h0M623.0 1004.9h0M623.3 1005.0h0M623.7 1004.6h0M624.0 1004.7h0M624.3 1005.7h0M624.7 1005.4h0M625.0 1005.5h0M625.3 1005.9h0M625.6 1006.7h0M626.0 1006.9h0M626.3 1006.5h0M626.6 1006.1h0M626.9 1007.2h0M627.3 1006.8h0M627.6 1006.2h0M627.9 1006.9h0M628.2 1006.2h0M628.6 1005.1h0M628.9 1004.8h0M629.2 1004.6h0M629.6 1004.3h0M629.9 1003.7h0M630.2 1003.7h0M630.5 1002.2h0M630.9 1003.0h0M631.2 1002.8h0M631.5 1001.9h0M631.8 1001.3h0M632.2 1001.9h0M632.5 1001.7h0M632.8 1001.9h0M633.1 1001.5h0M633.5 1001.7h0M633.8 1001.6h0M634.1 1001.6h0M634.5 1001.2h0M634.8 1000.3h0M635.1 1000.8h0M635.4 1000.6h0M635.8 999.8h0M636.1 1000.7h0M636.4 1000.8h0M636.7 1000.1h0M637.1 1000.6h0M637.4 1000.0h0M637.7 999.6h0M638.1 1000.3h0M638.4 1000.0h0M638.7 999.1h0M639.0 1000.0h0M639.4 999.7h0M639.7 1000.3h0M640.0 1001.4h0M640.3 1002.6h0M640.7 1002.6h0M641.0 1004.3h0M641.3 1004.9h0M641.6 1006.1h0M642.0 1007.0h0M642.3 1008.2h0M642.6 1007.1h0M643.0 1007.3h0M643.3 1006.4h0M643.6 1006.9h0M643.9 1006.3h0M644.3 1005.7h0M644.6 1005.5h0M644.9 1005.5h0M645.2 1005.0h0M645.6 1005.0h0M645.9 1004.3h0M646.2 1004.9h0M646.5 1003.6h0M646.9 1002.9h0M647.2 1002.7h0M647.5 1002.4h0M647.9 1002.5h0M648.2 1002.3h0M648.5 1003.5h0M648.8 1004.2h0M649.2 1005.0h0M649.5 1007.0h0M649.8 1006.4h0M650.1 1007.4h0M650.5 1006.5h0M650.8 1006.2h0M651.1 1004.7h0M651.5 1003.9h0M651.8 1004.0h0M652.1 1002.9h0M652.4 1001.4h0M652.8 1001.5h0M653.1 1002.0h0M653.4 1002.9h0M653.7 1002.8h0M654.1 1004.6h0M654.4 1005.1h0M654.7 1005.6h0M655.0 1005.4h0M655.4 1004.8h0M655.7 1004.3h0M656.0 1004.5h0M656.4 1003.5h0M656.7 1002.9h0M657.0 1002.7h0M657.3 1002.0h0M657.7 1002.0h0M658.0 1002.1h0M658.3 1001.2h0M658.6 1001.2h0M659.0 1000.5h0M659.3 1000.9h0M659.6 1001.3h0M659.9 1000.6h0M660.3 999.8h0M660.6 1000.1h0M660.9 1000.8h0M661.3 1000.7h0M661.6 1001.9h0M661.9 1002.1h0M662.2 1001.9h0M662.6 1002.7h0M662.9 1003.0h0M663.2 1003.0h0M663.5 1003.5h0M663.9 1004.5h0M664.2 1004.6h0M664.5 1005.6h0M664.8 1005.4h0M665.2 1005.7h0M665.5 1006.6h0M665.8 1005.2h0M666.2 1004.8h0M666.5 1005.1h0M666.8 1004.7h0M667.1 1004.2h0M667.5 1004.6h0M667.8 1003.9h0M668.1 1003.9h0M668.4 1004.3h0M668.8 1003.8h0M669.1 1003.5h0M669.4 1002.6h0M669.8 1002.7h0M670.1 1002.2h0M670.4 1002.4h0M670.7 1002.5h0M671.1 1001.6h0M671.4 1001.8h0M671.7 1003.0h0M672.0 1003.6h0M672.4 1003.5h0M672.7 1004.7h0M673.0 1004.8h0M673.3 1005.6h0M673.7 1005.3h0M674.0 1005.8h0M674.3 1006.4h0M674.7 1006.9h0M675.0 1007.3h0M675.3 1006.7h0M675.6 1005.6h0M676.0 1005.8h0M676.3 1004.9h0M676.6 1005.2h0M676.9 1004.6h0M677.3 1004.3h0M677.6 1003.9h0M677.9 1003.2h0M678.2 1003.8h0M678.6 1002.4h0M678.9 1002.1h0M679.2 1001.9h0M679.6 1001.5h0M679.9 1001.2h0M680.2 1000.5h0M680.5 1000.4h0M680.9 1000.3h0M681.2 999.6h0M681.5 999.3h0M681.8 999.5h0M682.2 999.6h0M682.5 999.5h0M682.8 999.8h0M683.2 999.7h0M683.5 1000.2h0M683.8 999.6h0M684.1 999.2h0M684.5 999.7h0M684.8 999.9h0M685.1 999.2h0M685.4 999.5h0M685.8 999.5h0M686.1 999.4h0M686.4 999.3h0M686.7 999.5h0M687.1 999.8h0M687.4 998.9h0M687.7 999.5h0M688.1 999.8h0M688.4 999.4h0M688.7 999.1h0M689.0 1000.0h0M689.4 999.0h0M689.7 999.9h0M690.0 999.6h0M690.3 1000.6h0M690.7 1001.4h0M691.0 1001.4h0M691.3 1001.9h0M691.6 1002.9h0M692.0 1003.2h0M692.3 1004.0h0M692.6 1004.0h0M693.0 1005.3h0M693.3 1005.4h0M693.6 1006.5h0M693.9 1006.0h0M694.3 1006.8h0M694.6 1006.3h0M694.9 1005.8h0M695.2 1005.9h0M695.6 1005.8h0M695.9 1005.9h0M696.2 1005.6h0M696.6 1006.0h0M696.9 1005.2h0M697.2 1004.9h0M697.5 1004.8h0M697.9 1005.0h0M698.2 1004.4h0M698.5 1004.6h0M698.8 1004.3h0M699.2 1004.4h0M699.5 1004.5h0M699.8 1004.6h0M700.1 1005.2h0M700.5 1003.9h0M700.8 1004.1h0M701.1 1003.3h0M701.5 1004.8h0M701.8 1004.0h0M702.1 1004.7h0M702.4 1004.5h0M702.8 1004.9h0M703.1 1004.6h0M703.4 1004.9h0M703.7 1004.7h0M704.1 1005.1h0M704.4 1005.1h0M704.7 1005.0h0M705.0 1005.3h0M705.4 1005.7h0M705.7 1005.1h0M706.0 1005.2h0M706.4 1004.7h0M706.7 1004.6h0M707.0 1004.4h0M707.3 1004.8h0M707.7 1003.2h0M708.0 1003.5h0M708.3 1002.5h0M708.6 1001.8h0M709.0 1002.5h0M709.3 1001.4h0M709.6 1001.4h0M710.0 1000.9h0M710.3 1001.1h0M710.6 1000.3h0M710.9 999.9h0M711.3 999.8h0M711.6 1000.0h0M711.9 1001.0h0M712.2 1001.6h0M712.6 1001.2h0M712.9 1002.4h0M713.2 1002.8h0M713.5 1003.1h0M713.9 1003.4h0M714.2 1003.7h0M714.5 1004.5h0M714.9 1004.8h0M715.2 1004.5h0M715.5 1005.0h0M715.8 1005.5h0M716.2 1005.5h0M716.5 1005.7h0M716.8 1005.2h0M717.1 1005.7h0M717.5 1005.5h0M717.8 1005.7h0M718.1 1005.7h0M718.4 1005.5h0M718.8 1005.5h0M719.1 1005.6h0M719.4 1005.4h0M719.8 1005.4h0M720.1 1005.5h0M720.4 1005.6h0M720.7 1005.4h0M721.1 1005.1h0M721.4 1004.9h0M721.7 1005.2h0M722.0 1005.3h0M722.4 1005.2h0M722.7 1004.6h0M723.0 1004.9h0M723.4 1005.5h0M723.7 1005.2h0M724.0 1005.3h0M724.3 1005.2h0M724.7 1005.7h0M725.0 1005.1h0M725.3 1005.5h0M725.6 1005.2h0M726.0 1004.5h0M726.3 1004.6h0M726.6 1005.3h0M726.9 1005.3h0M727.3 1005.2h0M727.6 1005.6h0M727.9 1005.2h0M728.3 1005.0h0M728.6 1005.2h0M728.9 1004.6h0M729.2 1004.8h0M729.6 1004.9h0M729.9 1004.1h0M730.2 1004.3h0M730.5 1004.5h0M730.9 1003.8h0M731.2 1003.9h0M731.5 1004.5h0M731.8 1004.1h0M732.2 1004.3h0M732.5 1004.6h0M732.8 1003.3h0M733.2 1003.4h0M733.5 1004.3h0M733.8 1003.6h0M734.1 1004.2h0M734.5 1003.2h0M734.8 1003.5h0M735.1 1003.5h0M735.4 1003.0h0M735.8 1003.5h0M736.1 1003.6h0M736.4 1003.3h0M736.8 1003.8h0M737.1 1003.4h0M737.4 1003.7h0M737.7 1003.5h0M738.1 1003.6h0M738.4 1003.6h0M738.7 1004.3h0M739.0 1003.3h0M739.4 1004.1h0M739.7 1003.5h0M740.0 1004.3h0M740.3 1004.3h0M740.7 1004.3h0M741.0 1003.9h0M741.3 1004.5h0M741.7 1004.2h0M742.0 1004.9h0M742.3 1004.6h0M742.6 1004.4h0M743.0 1004.6h0M743.3 1005.2h0M743.6 1004.5h0M743.9 1005.0h0M744.3 1004.1h0M744.6 1004.8h0M744.9 1004.0h0M745.2 1004.6h0M745.6 1004.8h0M745.9 1005.1h0M746.2 1005.0h0M746.6 1004.9h0M746.9 1005.8h0M747.2 1004.8h0M747.5 1005.6h0M747.9 1005.3h0M748.2 1006.1h0M748.5 1004.7h0M748.8 1004.3h0M749.2 1004.1h0M749.5 1003.8h0M749.8 1003.7h0M750.2 1003.2h0M750.5 1002.6h0M750.8 1002.8h0M751.1 1002.2h0M751.5 1001.8h0M751.8 1001.8h0M752.1 1001.4h0M752.4 1001.1h0M752.8 1001.0h0M753.1 999.7h0M753.4 1000.4h0M753.7 999.3h0M754.1 999.2h0M754.4 1000.0h0M754.7 999.5h0M890.0 1003.4h0M890.3 1004.0h0M890.7 1004.3h0M891.0 1004.4h0M891.3 1003.9h0M891.6 1005.6h0M892.0 1005.5h0M892.3 1005.2h0M892.6 1005.5h0M892.9 1005.4h0M893.3 1005.5h0M893.6 1005.5h0M893.9 1006.7h0M894.2 1006.4h0M894.6 1006.3h0M894.9 1005.5h0M895.2 1005.3h0M895.6 1004.6h0M895.9 1004.8h0M896.2 1004.1h0M896.5 1003.9h0M896.9 1003.4h0M897.2 1003.0h0M897.5 1002.8h0M897.8 1001.6h0M898.2 1001.5h0M898.5 1000.8h0M898.8 1001.1h0M899.2 1001.9h0M899.5 1001.9h0M899.8 1002.2h0M900.1 1002.4h0M900.5 1002.8h0M900.8 1003.3h0M901.1 1003.7h0M901.4 1004.5h0M901.8 1005.2h0M902.1 1006.0h0M902.4 1006.0h0M902.7 1006.4h0M903.1 1006.6h0M903.4 1006.1h0M903.7 1006.3h0M904.1 1006.1h0M904.4 1006.7h0M904.7 1006.0h0M905.0 1006.3h0M905.4 1006.6h0M905.7 1006.8h0M906.0 1006.9h0M906.3 1007.1h0M906.7 1006.1h0M907.0 1007.2h0M907.3 1006.5h0M907.6 1006.8h0M908.0 1006.9h0M908.3 1006.9h0M908.6 1006.8h0M909.0 1006.5h0M909.3 1006.7h0M909.6 1006.9h0M909.9 1007.4h0M910.3 1007.6h0M910.6 1006.3h0M910.9 1007.4h0M911.2 1007.6h0M911.6 1006.7h0M911.9 1007.6h0M912.2 1006.9h0M912.6 1006.8h0M912.9 1007.1h0M913.2 1006.9h0M913.5 1007.1h0M913.9 1006.4h0M914.2 1005.4h0M914.5 1004.7h0M914.8 1004.1h0M915.2 1003.3h0M915.5 1003.1h0M915.8 1002.9h0M916.1 1001.4h0M916.5 1001.0h0M916.8 999.9h0M917.1 998.9h0M917.5 998.9h0M917.8 998.1h0M918.1 999.0h0M918.4 999.9h0M918.8 1001.6h0M919.1 1003.2h0M919.4 1004.5h0M919.7 1006.8h0M920.1 1007.3h0M920.4 1006.8h0M920.7 1005.9h0M921.0 1006.6h0M921.4 1005.5h0M921.7 1004.2h0M922.0 1004.7h0M922.4 1004.2h0M922.7 1002.9h0M923.0 1002.1h0M923.3 1002.5h0M923.7 1002.3h0M924.0 1001.8h0M924.3 1001.2h0M924.6 1001.4h0M925.0 1001.8h0M925.3 1001.8h0M925.6 1002.2h0M926.0 1002.4h0M926.3 1002.9h0M926.6 1003.7h0M926.9 1003.4h0M927.3 1004.0h0M927.6 1004.6h0M927.9 1004.9h0M928.2 1005.0h0M928.6 1005.5h0M928.9 1005.9h0M929.2 1006.0h0M929.5 1006.2h0M929.9 1007.1h0M930.2 1007.3h0M930.5 1008.1h0M930.9 1007.4h0M931.2 1006.6h0M931.5 1005.8h0M931.8 1005.4h0M932.2 1004.8h0M932.5 1004.4h0M932.8 1003.5h0M933.1 1003.3h0M933.5 1002.2h0M933.8 1001.6h0M934.1 1002.2h0M934.4 1002.6h0M934.8 1003.6h0M935.1 1004.2h0M935.4 1005.4h0M935.8 1005.9h0M936.1 1006.4h0M936.4 1006.9h0M936.7 1006.2h0M937.1 1006.1h0M937.4 1005.5h0M937.7 1005.5h0M938.0 1004.3h0M938.4 1004.1h0M938.7 1003.1h0M939.0 1003.3h0M939.4 1002.3h0M939.7 1001.4h0M940.0 1000.8h0M940.3 1000.9h0M940.7 999.9h0M941.0 998.3h0M941.3 998.4h0M941.6 998.2h0M942.0 999.6h0M942.3 999.3h0M942.6 999.2h0M942.9 999.7h0M943.3 1000.0h0M943.6 1000.2h0M943.9 1000.9h0M944.3 1001.0h0M944.6 1002.3h0M944.9 1001.2h0M945.2 1002.5h0M945.6 1003.0h0M945.9 1002.7h0M946.2 1003.4h0M946.5 1003.6h0M946.9 1004.6h0M947.2 1004.6h0M947.5 1004.8h0M947.8 1005.6h0M948.2 1004.6h0M948.5 1004.0h0M948.8 1003.3h0M949.2 1002.8h0M949.5 1002.4h0M949.8 1001.1h0M950.1 1000.5h0M950.5 999.5h0M950.8 999.3h0M951.1 999.0h0M951.4 999.7h0M951.8 999.6h0M952.1 1000.2h0M952.4 999.8h0M952.7 1000.1h0M953.1 1000.8h0M953.4 1002.1h0M953.7 1002.7h0M954.1 1002.7h0M954.4 1003.3h0M954.7 1002.9h0M955.0 1003.8h0M955.4 1004.4h0M955.7 1004.7h0M956.0 1004.7h0M956.3 1005.7h0M956.7 1004.9h0M957.0 1005.3h0M957.3 1004.7h0M957.7 1004.6h0M958.0 1004.0h0M958.3 1003.9h0M958.6 1003.2h0M959.0 1003.2h0M959.3 1003.4h0M959.6 1003.4h0M959.9 1003.0h0M960.3 1002.6h0M960.6 1002.3h0M960.9 1002.4h0M961.2 1001.7h0M961.6 1001.7h0M961.9 1002.1h0M962.2 1002.1h0M962.6 1002.0h0M962.9 1001.9h0M963.2 1001.8h0M963.5 1002.3h0M963.9 1001.9h0M964.2 1002.3h0M964.5 1001.6h0M964.8 1001.3h0M965.2 1001.9h0M965.5 1001.4h0M965.8 1001.6h0M966.1 1001.6h0M966.5 1000.6h0M966.8 1001.0h0M967.1 1001.1h0M967.5 1001.3h0M967.8 1001.0h0M968.1 1001.2h0M968.4 1000.9h0M968.8 1001.7h0M969.1 1002.1h0M969.4 1003.0h0M969.7 1004.1h0M970.1 1003.7h0M970.4 1004.7h0M970.7 1006.1h0M971.1 1007.0h0M971.4 1007.5h0M971.7 1007.8h0M972.0 1007.7h0M972.4 1008.0h0M972.7 1007.7h0M973.0 1007.4h0M973.3 1007.2h0M973.7 1008.0h0M974.0 1007.3h0M974.3 1007.6h0M974.6 1007.6h0M975.0 1007.3h0M975.3 1007.4h0M975.6 1006.9h0M976.0 1006.8h0M976.3 1007.2h0M976.6 1007.2h0M976.9 1006.3h0M977.3 1006.3h0M977.6 1006.8h0M977.9 1006.9h0M978.2 1006.5h0M978.6 1006.3h0M978.9 1007.0h0M979.2 1006.1h0M979.5 1006.7h0M979.9 1006.3h0M980.2 1006.8h0M980.5 1006.6h0M980.9 1006.7h0M981.2 1006.5h0M981.5 1006.1h0M981.8 1006.8h0M982.2 1006.5h0M982.5 1006.0h0M982.8 1006.1h0M983.1 1005.0h0M983.5 1006.0h0M983.8 1004.4h0M984.1 1005.3h0M984.5 1004.5h0M984.8 1004.0h0M985.1 1004.2h0M985.4 1004.7h0M985.8 1004.1h0M986.1 1003.7h0M986.4 1003.3h0M986.7 1002.9h0M987.1 1002.7h0M987.4 1002.3h0M987.7 1003.1h0M988.0 1002.4h0M988.4 1003.4h0M988.7 1002.8h0M989.0 1003.3h0M989.4 1003.6h0M989.7 1002.6h0M990.0 1003.0h0M990.3 1002.7h0M990.7 1003.6h0M991.0 1003.5h0M991.3 1003.2h0M991.6 1003.4h0M992.0 1003.2h0M992.3 1003.5h0M992.6 1003.4h0M992.9 1003.7h0M993.3 1002.9h0M993.6 1003.5h0M993.9 1003.8h0M994.3 1003.2h0M994.6 1003.3h0M994.9 1003.5h0M995.2 1003.5h0M995.6 1003.7h0M995.9 1003.7h0M996.2 1004.5h0M996.5 1004.3h0M996.9 1004.2h0M997.2 1003.7h0M997.5 1003.4h0M997.9 1003.9h0M998.2 1004.0h0M998.5 1003.5h0M998.8 1004.1h0M999.2 1003.8h0M999.5 1003.9h0M999.8 1004.6h0M1000.1 1004.0h0M1000.5 1004.1h0M1000.8 1004.6h0M1001.1 1004.6h0M1001.4 1004.6h0M1001.8 1003.4h0M1002.1 1002.9h0M1002.4 1003.2h0M1002.8 1002.6h0M1003.1 1003.4h0M1003.4 1002.2h0M1003.7 1001.7h0M1004.1 1001.6h0M1004.4 1002.3h0M1004.7 1001.3h0M1005.0 1001.5h0M1005.4 1000.8h0M1005.7 1001.2h0M1006.0 1000.7h0M1006.3 1000.6h0M1006.7 1000.0h0M1007.0 1000.0h0M1007.3 999.6h0M1007.7 999.7h0M1008.0 999.8h0M1008.3 1000.0h0M1008.6 1000.0h0M1009.0 999.9h0M1009.3 999.6h0M1009.6 999.9h0M1009.9 999.8h0M1010.3 999.9h0M1010.6 999.9h0M1010.9 1000.1h0M1011.3 1000.5h0M1011.6 999.7h0M1011.9 999.7h0M1012.2 1000.2h0M1012.6 999.2h0M1012.9 1000.3h0M1013.2 999.5h0M1013.5 999.7h0M1013.9 999.7h0M1014.2 999.4h0M1014.5 999.5h0M1014.8 999.8h0M1015.2 1000.2h0M1015.5 1000.2h0M1015.8 999.7h0M1016.2 999.2h0M1016.5 999.4h0M1016.8 999.9h0M1017.1 1000.4h0M1017.5 1001.0h0M1017.8 1001.3h0M1018.1 1002.8h0M1018.4 1002.9h0M1018.8 1003.7h0M1019.1 1004.8h0M1019.4 1004.9h0M1019.7 1003.7h0M1020.1 1003.7h0M1020.4 1003.6h0M1020.7 1003.1h0M1021.1 1002.4h0M1021.4 1002.4h0M1021.7 1001.5h0M1022.0 1001.8h0M1022.4 1001.6h0M1022.7 1001.0h0M1023.0 1001.0h0M1023.3 1000.4h0M1023.7 999.5h0M1024.0 998.9h0M1024.3 999.2h0M1024.7 1000.4h0M1025.0 1001.9h0M1025.3 1002.9h0M1025.6 1003.5h0M1026.0 1004.6h0M1026.3 1005.9h0M1026.6 1005.8h0M1026.9 1004.7h0M1027.3 1004.5h0M1027.6 1004.4h0M1027.9 1004.0h0M1028.2 1003.2h0M1028.6 1003.1h0M1028.9 1002.8h0M1029.2 1003.0h0M1029.6 1002.7h0M1029.9 1002.4h0M1030.2 1002.1h0M1030.5 1000.9h0M1030.9 1000.3h0M1031.2 1000.4h0M1031.5 999.5h0M1031.8 999.1h0M1032.2 998.9h0M1032.5 999.2h0M1032.8 998.2h0M1033.1 998.3h0M1033.5 999.1h0M1033.8 998.3h0M1034.1 999.0h0M1034.5 999.4h0M1034.8 999.3h0M1035.1 999.9h0M1035.4 999.5h0M1035.8 1000.0h0M1036.1 999.1h0M1036.4 999.5h0M1036.7 1000.1h0M1037.1 999.5h0M1037.4 1000.4h0M1037.7 999.8h0M1038.1 999.8h0M1038.4 1000.0h0M1038.7 1000.5h0M1039.0 1000.2h0M1039.4 1000.3h0M1039.7 1000.3h0M1040.0 999.9h0M1040.3 999.9h0M1040.7 1000.0h0M1041.0 1000.9h0M1041.3 1001.0h0M1041.6 1000.8h0M1042.0 1000.7h0M1042.3 1001.7h0M1042.6 1001.2h0M1043.0 1000.5h0M1043.3 1001.6h0M1043.6 1001.5h0M1043.9 1001.6h0M1044.3 1001.2h0M1044.6 1001.5h0M1044.9 1001.7h0M1045.2 1002.2h0M1045.6 1001.6h0M1045.9 1002.2h0M1046.2 1002.7h0M1046.5 1002.8h0M1046.9 1002.9h0M1047.2 1004.1h0M1047.5 1004.4h0M1047.9 1004.6h0M1048.2 1004.9h0M1048.5 1006.0h0M1048.8 1005.5h0M1049.2 1005.2h0M1049.5 1006.1h0M1049.8 1005.9h0M1050.1 1007.7h0M1050.5 1007.0h0M1050.8 1006.8h0M1051.1 1007.1h0M1051.4 1007.4h0M1051.8 1007.0h0M1052.1 1006.0h0M1052.4 1006.0h0M1052.8 1005.2h0M1053.1 1005.1h0M1053.4 1003.9h0M1053.7 1003.4h0M1054.1 1002.3h0M1054.4 1002.2h0M1054.7 1002.0h0M1055.0 1001.3h0M1055.4 1001.2h0M1055.7 1000.2h0M1056.0 999.7h0M1056.4 998.9h0M1056.7 998.2h0M1057.0 999.6h0M1057.3 999.4h0M1057.7 999.8h0M1058.0 1001.0h0M1058.3 1000.5h0M1058.6 1002.0h0M1059.0 1001.4h0M1059.3 1002.6h0M1059.6 1003.1h0M1059.9 1003.9h0M1060.3 1004.2h0M1060.6 1005.5h0M1060.9 1006.0h0M1061.3 1006.9h0M1061.6 1006.6h0M1061.9 1007.6h0M1062.2 1007.2h0M1062.6 1007.2h0M1062.9 1007.9h0M1063.2 1007.2h0M1063.5 1007.3h0M1063.9 1007.3h0M1064.2 1007.2h0M1064.5 1007.4h0M1064.8 1007.3h0M1065.2 1007.0h0M1065.5 1007.7h0M1065.8 1007.8h0M1066.2 1007.6h0M1066.5 1006.9h0M1066.8 1007.4h0M1067.1 1006.6h0M1067.5 1008.3h0M1067.8 1007.5h0M1068.1 1007.4h0M1068.4 1007.1h0M1068.8 1006.5h0M1069.1 1006.7h0M1069.4 1006.5h0M1069.8 1005.4h0M1070.1 1004.7h0M1070.4 1005.8h0M1070.7 1004.2h0M1071.1 1003.9h0M1071.4 1003.9h0M1071.7 1003.3h0M1072.0 1002.6h0M1072.4 1002.3h0M1072.7 1002.0h0M1073.0 1001.9h0M1073.3 1000.9h0M1073.7 1000.8h0M1074.0 1000.1h0M1074.3 999.9h0M1074.7 999.2h0M1075.0 998.6h0M1075.3 998.7h0M1075.6 998.6h0M1076.0 999.3h0M1076.3 998.7h0M1076.6 998.8h0M1076.9 999.1h0M1077.3 999.0h0M1077.6 1000.0h0M1077.9 998.9h0M1078.2 999.1h0M1078.6 999.8h0M1078.9 998.9h0M1079.2 999.3h0M1079.6 999.0h0M1079.9 999.2h0M1080.2 999.0h0M1080.5 999.1h0M1080.9 999.3h0M1081.2 999.0h0M1081.5 998.9h0M1081.8 1000.1h0M1082.2 999.3h0M1082.5 999.5h0M1082.8 999.7h0M1083.2 998.9h0M1083.5 999.0h0M1083.8 999.8h0M1084.1 999.8h0M1084.5 999.2h0M1084.8 999.7h0M1085.1 1000.0h0M1085.4 1001.0h0M1085.8 1000.7h0M1086.1 1000.7h0M1086.4 1001.7h0M1086.7 1002.0h0M1087.1 1001.7h0M1087.4 1002.5h0M1087.7 1002.7h0M1088.1 1003.4h0M1088.4 1003.6h0M1088.7 1005.1h0M1089.0 1005.2h0M1089.4 1005.3h0M1089.7 1003.1h0M1090.0 1003.2h0M1090.3 1002.5h0M1090.7 1002.1h0M1091.0 1001.4h0M1091.3 1001.4h0M1091.6 998.8h0M1092.0 999.1h0M1092.3 1000.3h0M1092.6 1002.0h0M1093.0 1002.8h0M1093.3 1003.9h0M1093.6 1005.3h0M1093.9 1006.3h0M1094.3 1007.0h0M1094.6 1006.1h0M1094.9 1005.4h0M1095.2 1005.0h0M1095.6 1004.5h0M1095.9 1004.2h0M1096.2 1004.0h0M1096.6 1003.0h0M1096.9 1002.8h0M1097.2 1003.2h0M1097.5 1002.8h0M1097.9 1003.8h0M1098.2 1003.6h0M1098.5 1003.3h0M1098.8 1003.5h0M1099.2 1004.1h0M1099.5 1004.2h0M1099.8 1004.2h0M1100.1 1004.6h0M1100.5 1005.0h0M1100.8 1004.8h0M1101.1 1004.0h0M1101.5 1003.1h0M1101.8 1001.8h0M1102.1 1001.2h0M1102.4 1000.5h0M1102.8 999.3h0M1103.1 997.8h0M1103.4 999.0h0M1103.7 999.3h0M1104.1 999.8h0M1104.4 999.8h0M1104.7 1000.8h0M1105.0 1000.5h0M1105.4 1000.8h0M1105.7 1001.7h0M1106.0 1002.2h0M1106.4 1002.8h0M1106.7 1002.6h0M1107.0 1003.4h0M1107.3 1003.6h0M1107.7 1003.9h0M1108.0 1004.4h0M1108.3 1004.2h0M1108.6 1004.4h0M1109.0 1006.1h0M1109.3 1006.0h0M1109.6 1005.1h0M1110.0 1005.0h0M1110.3 1004.3h0M1110.6 1003.4h0M1110.9 1002.4h0M1111.3 1001.9h0M1111.6 1001.8h0M1111.9 1001.1h0M1112.2 1000.7h0M1112.6 1000.0h0M1112.9 1000.1h0M1113.2 1000.7h0M1113.5 1000.5h0M1113.9 1000.4h0M1114.2 1000.8h0M1114.5 1002.1h0M1114.9 1001.8h0M1115.2 1002.3h0M1115.5 1002.3h0M1115.8 1003.2h0M1116.2 1002.8h0M1116.5 1003.6h0M1116.8 1003.6h0M1117.1 1003.9h0M1117.5 1005.2h0M1117.8 1004.9h0M1118.1 1003.9h0M1118.4 1004.0h0M1118.8 1003.2h0M1119.1 1002.9h0M1119.4 1002.8h0M1119.8 1002.0h0M1120.1 1001.2h0M1120.4 1000.7h0M1120.7 1000.1h0M1121.1 1000.6h0M1121.4 999.4h0M1121.7 999.7h0M1122.0 998.8h0M1122.4 998.4h0M1122.7 998.5h0M1123.0 999.1h0M1123.4 999.3h0M1123.7 1000.4h0M1124.0 1000.4h0M1124.3 1001.1h0M1124.7 1001.7h0M1125.0 1002.6h0M1125.3 1002.5h0M1125.6 1003.1h0M1126.0 1003.4h0M1126.3 1004.2h0M1126.6 1004.8h0M1126.9 1005.0h0M1127.3 1005.5h0M1127.6 1005.9h0M1127.9 1006.0h0M1128.3 1007.4h0M1128.6 1006.7h0M1128.9 1008.0h0M1129.2 1006.0h0M1129.6 1006.2h0M1129.9 1004.7h0M1130.2 1005.2h0M1130.5 1004.0h0M1130.9 1004.3h0M1131.2 1003.9h0M1131.5 1003.3h0M1131.8 1003.4h0M1132.2 1004.1h0M1132.5 1003.1h0M1132.8 1004.2h0M1133.2 1003.7h0M1133.5 1004.7h0M1133.8 1004.8h0M1134.1 1004.6h0M1134.5 1005.1h0M1134.8 1004.7h0M1135.1 1005.8h0M1135.4 1005.0h0M1135.8 1005.4h0M1136.1 1005.7h0M1136.4 1005.4h0M1136.8 1005.7h0M1137.1 1005.9h0M1137.4 1005.6h0M1137.7 1005.6h0M1138.1 1005.2h0M1138.4 1004.5h0M1138.7 1004.7h0M1139.0 1004.1h0M1139.4 1004.2h0M1139.7 1003.5h0M1140.0 1003.2h0M1140.3 1003.2h0M1140.7 1003.2h0M1141.0 1002.8h0M1141.3 1002.4h0M1141.7 1001.5h0M1142.0 1001.4h0M1142.3 1001.1h0M1142.6 1000.5h0M1143.0 1000.1h0M1143.3 999.7h0M1143.6 1000.9h0M1143.9 1001.1h0M1144.3 1001.5h0M1144.6 1002.7h0M1144.9 1002.8h0M1145.2 1003.7h0M1145.6 1004.0h0M1145.9 1004.3h0M1146.2 1005.3h0M1146.6 1004.9h0M1146.9 1004.7h0M1147.2 1004.2h0M1147.5 1004.3h0M1147.9 1003.8h0M1148.2 1004.0h0M1148.5 1003.8h0M1148.8 1003.2h0M1149.2 1003.1h0M1149.5 1003.0h0M1149.8 1002.9h0M1150.1 1002.4h0M1150.5 1002.1h0M1150.8 1002.5h0M1151.1 1002.5h0M1151.5 1002.4h0M1151.8 1001.3h0M1152.1 1002.1h0M1152.4 1002.4h0M1152.8 1002.1h0M1153.1 1002.1h0M1153.4 1003.2h0M1153.7 1003.0h0M1154.1 1003.8h0M1154.4 1003.8h0M1154.7 1003.2h0M1155.1 1004.0h0M1155.4 1004.4h0M1155.7 1004.5h0M1156.0 1004.7h0M1156.4 1005.1h0M1156.7 1005.5h0M1157.0 1005.0h0M1157.3 1003.3h0M1157.7 1003.8h0M1158.0 1002.6h0M1158.3 1002.8h0M1158.6 1001.6h0M1159.0 1002.3h0M1159.3 1003.0h0M1159.6 1002.7h0M1160.0 1004.2h0M1160.3 1004.4h0M1160.6 1005.1h0M1160.9 1005.5h0M1161.3 1005.8h0M1161.6 1006.5h0M1161.9 1006.7h0M1162.2 1006.2h0M1162.6 1007.3h0M1162.9 1007.1h0M1163.2 1006.8h0M1163.5 1006.6h0M1163.9 1005.9h0M1164.2 1005.9h0M1164.5 1005.9h0M1164.9 1005.9h0M1165.2 1005.0h0M1165.5 1006.2h0M1165.8 1006.1h0M1166.2 1005.6h0M1166.5 1005.4h0M1166.8 1005.4h0M1167.1 1005.6h0M1167.5 1005.6h0M1167.8 1005.1h0M1168.1 1005.2h0M1168.5 1005.0h0M1168.8 1005.1h0M1169.1 1004.2h0M1169.4 1004.4h0M1169.8 1003.8h0M1170.1 1004.5h0M1170.4 1004.2h0M1170.7 1004.2h0M1171.1 1004.0h0M1171.4 1004.0h0M1171.7 1003.9h0M1172.0 1004.4h0M1172.4 1003.8h0M1172.7 1003.6h0M1173.0 1004.7h0M1173.4 1004.2h0M1173.7 1004.0h0M1174.0 1003.9h0M1174.3 1004.5h0M1174.7 1004.4h0M1175.0 1004.1h0M1175.3 1004.2h0M1175.6 1004.8h0M1176.0 1004.7h0M1176.3 1004.0h0M1176.6 1004.2h0M1176.9 1004.4h0M1177.3 1004.2h0M1177.6 1003.9h0M1177.9 1004.0h0M1178.3 1003.9h0M1178.6 1003.8h0M1178.9 1004.2h0M1179.2 1002.9h0M1179.6 1003.0h0M1179.9 1002.8h0M1180.2 1003.3h0M1180.5 1003.1h0M1180.9 1002.8h0M1181.2 1002.7h0M1181.5 1003.9h0M1181.9 1003.3h0M1182.2 1004.0h0M1182.5 1003.9h0M1182.8 1004.4h0M1183.2 1003.7h0M1183.5 1004.4h0M1183.8 1004.8h0M1184.1 1004.5h0M1184.5 1005.3h0M1184.8 1005.2h0M1185.1 1004.2h0M1185.4 1003.5h0M1185.8 1002.6h0M1186.1 1001.6h0M1186.4 1001.1h0M1186.8 1000.4h0M1187.1 999.2h0M1187.4 998.7h0M1187.7 997.8h0M1188.1 998.6h0M1188.4 999.7h0M1188.7 1000.2h0M1189.0 1000.9h0M1189.4 1000.5h0M1189.7 1001.3h0M1190.0 1002.2h0M1190.3 1002.9h0M1190.7 1003.0h0M1191.0 1003.7h0M1191.3 1004.1h0M1191.7 1005.1h0M1192.0 1005.7h0M1192.3 1005.3h0M1192.6 1006.7h0M1193.0 1006.0h0M1193.3 1005.2h0M1193.6 1006.0h0M1193.9 1004.8h0M1194.3 1004.6h0M1194.6 1004.4h0M1194.9 1003.9h0M1195.3 1004.1h0M1195.6 1004.1h0M1195.9 1002.3h0M1196.2 1002.7h0M1196.6 1001.9h0M1196.9 1001.5h0M1197.2 1001.5h0M1197.5 1001.1h0M1197.9 1001.3h0M1198.2 1001.5h0M1198.5 1002.4h0M1198.8 1002.6h0M1199.2 1003.6h0M1199.5 1004.1h0M1199.8 1004.5h0M1200.2 1004.8h0M1200.5 1005.3h0M1200.8 1005.2h0M1201.1 1005.3h0M1201.5 1005.2h0M1201.8 1004.2h0M1202.1 1004.4h0M1202.4 1004.1h0M1202.8 1003.7h0M1203.1 1003.7h0M1203.4 1003.6h0M1203.7 1002.9h0M1204.1 1002.7h0M1204.4 1002.6h0M1204.7 1002.0h0M1205.1 1002.5h0M1205.4 1003.1h0M1205.7 1003.9h0M1206.0 1003.8h0M1206.4 1003.5h0M1206.7 1004.2h0M1207.0 1004.6h0M1207.3 1005.4h0M1207.7 1005.4h0M1208.0 1006.5h0M1208.3 1006.8h0M1208.7 1006.9h0M1209.0 1008.0h0M1209.3 1007.4h0M1209.6 1007.2h0M1210.0 1006.7h0M1210.3 1007.4h0M1210.6 1006.9h0M1210.9 1007.2h0M1211.3 1007.1h0M1211.6 1007.8h0M1211.9 1007.1h0M1212.2 1006.2h0M1212.6 1006.4h0M1212.9 1006.4h0M1213.2 1005.5h0M1213.6 1006.1h0M1213.9 1006.7h0M1214.2 1006.2h0M1214.5 1006.1h0M1214.9 1005.4h0M1215.2 1006.2h0M1215.5 1005.7h0M1215.8 1005.4h0M1216.2 1005.9h0M1216.5 1005.5h0M1216.8 1006.2h0M1217.1 1005.3h0M1217.5 1006.1h0M1217.8 1005.4h0M1218.1 1004.5h0M1218.5 1004.9h0M1218.8 1004.9h0M1219.1 1004.8h0M1219.4 1004.0h0M1219.8 1004.5h0M1220.1 1004.2h0M1220.4 1004.7h0M1220.7 1004.6h0M1221.1 1004.7h0M1221.4 1004.2h0M1221.7 1004.2h0M1222.1 1003.3h0M1222.4 1003.2h0M1222.7 1003.2h0M1223.0 1003.1h0M1223.4 1003.7h0M1223.7 1002.6h0M1224.0 1002.1h0M1224.3 1001.7h0M1224.7 1002.8h0M1225.0 1002.3h0M1225.3 1001.1h0M1225.6 1001.3h0M1226.0 1001.1h0M1226.3 1001.5h0M1226.6 1001.4h0M1227.0 1002.6h0M1227.3 1002.4h0M1227.6 1002.1h0M1227.9 1002.7h0M1228.3 1003.3h0M1228.6 1003.1h0M1228.9 1003.5h0M1229.2 1004.2h0M1229.6 1003.9h0M1229.9 1004.2h0M1230.2 1004.8h0M1230.5 1004.7h0M1230.9 1005.7h0M1231.2 1004.5h0M1231.5 1004.3h0M1231.9 1004.0h0M1232.2 1003.3h0M1232.5 1002.1h0M1232.8 1002.2h0M1233.2 1001.5h0M1233.5 1001.1h0M1233.8 1000.6h0M1234.1 999.9h0M1234.5 999.5h0M1234.8 999.8h0M1235.1 1000.2h0M1235.5 1000.1h0M1235.8 1000.6h0M1236.1 1000.7h0M1236.4 1001.0h0M1236.8 1000.1h0M1237.1 1000.8h0M1237.4 1001.0h0M1237.7 1001.0h0M1238.1 1000.7h0M1238.4 1001.1h0M1238.7 1000.9h0M1239.0 1000.9h0M1239.4 1000.5h0M1239.7 1001.5h0M1240.0 1001.0h0M1240.4 1001.4h0M1240.7 1001.3h0M1241.0 1000.7h0M1241.3 1001.1h0M1241.7 1001.9h0M1242.0 1002.1h0M1242.3 1002.8h0M1242.6 1002.9h0M1243.0 1003.9h0M1243.3 1004.1h0M1243.6 1004.9h0M1243.9 1005.3h0M1244.3 1005.9h0M1244.6 1006.5h0M1244.9 1006.8h0M1245.3 1007.0h0M1245.6 1008.0h0M1245.9 1007.4h0M1246.2 1006.5h0M1246.6 1006.3h0M1246.9 1005.1h0M1247.2 1004.5h0M1247.5 1005.0h0M1247.9 1003.8h0M1248.2 1003.3h0M1248.5 1002.5h0M1248.8 1002.8h0M1249.2 1003.8h0M1249.5 1003.9h0M1249.8 1004.0h0M1250.2 1004.4h0M1250.5 1004.3h0M1250.8 1004.6h0M1251.1 1005.0h0M1251.5 1005.1h0M1251.8 1005.5h0M1252.1 1006.1h0M1252.4 1006.6h0M1252.8 1007.0h0M1253.1 1006.7h0M1253.4 1006.7h0M1253.8 1006.2h0M1254.1 1006.2h0M1254.4 1005.8h0M1254.7 1005.2h0M1255.1 1004.4h0M1255.4 1004.3h0M1255.7 1003.9h0M1256.0 1003.8h0M1256.4 1003.0h0M1256.7 1002.5h0M1257.0 1002.6h0M1257.3 1001.2h0M1257.7 1001.7h0M1258.0 1000.6h0M1258.3 1000.6h0M1258.7 1000.1h0M1259.0 1000.0h0M1259.3 999.5h0M1259.6 998.6h0M1260.0 998.8h0M1260.3 998.9h0M1260.6 998.5h0M1260.9 998.6h0M1261.3 998.8h0M1261.6 998.8h0M1261.9 998.3h0M1262.2 999.0h0M1262.6 998.8h0M1262.9 998.8h0M1263.2 999.5h0M1263.6 999.7h0M1263.9 999.0h0M1264.2 998.7h0M1264.5 999.0h0M1264.9 999.3h0M1265.2 999.3h0M1265.5 998.8h0M1265.8 999.3h0M1266.2 999.7h0M1266.5 998.9h0M1266.8 999.1h0M1267.2 999.1h0M1267.5 998.9h0M1267.8 998.8h0M1268.1 999.1h0M1268.5 999.4h0M1268.8 1000.1h0M1269.1 999.2h0M1269.4 999.4h0M1269.8 998.9h0M1270.1 999.0h0M1270.4 999.3h0M1270.7 999.0h0M1271.1 999.8h0M1271.4 1000.7h0M1271.7 1002.0h0M1272.1 1002.7h0M1272.4 1003.5h0M1272.7 1004.1h0M1273.0 1005.7h0M1273.4 1006.1h0M1273.7 1006.4h0M1274.0 1007.8h0M1274.3 1007.0h0M1274.7 1006.5h0M1275.0 1005.8h0M1275.3 1005.0h0M1275.6 1004.9h0M1276.0 1005.0h0M1276.3 1004.8h0M1276.6 1004.2h0M1277.0 1003.8h0M1277.3 1003.3h0M1277.6 1003.3h0M1277.9 1002.2h0M1278.3 1003.4h0M1278.6 1003.3h0M1278.9 1003.9h0M1279.2 1004.7h0M1279.6 1004.7h0M1279.9 1005.1h0M1280.2 1005.6h0M1280.6 1005.6h0M1280.9 1006.4h0M1281.2 1005.7h0M1281.5 1006.6h0M1281.9 1007.8h0M1282.2 1007.9h0M1282.5 1006.0h0M1282.8 1005.8h0M1283.2 1005.4h0M1283.5 1005.2h0M1283.8 1004.8h0M1284.1 1004.4h0M1284.5 1002.3h0M1284.8 1002.1h0M1285.1 1002.3h0M1285.5 1000.9h0M1285.8 1001.7h0M1286.1 1000.3h0M1286.4 999.7h0M1286.8 999.9h0M1287.1 1000.0h0M1287.4 1000.5h0M1287.7 1000.4h0M1288.1 1000.2h0M1288.4 1000.6h0M1288.7 1001.1h0M1289.0 1001.1h0M1289.4 1002.4h0M1289.7 1001.4h0M1290.0 1002.4h0M1290.4 1003.1h0M1290.7 1003.1h0M1291.0 1003.4h0M1291.3 1003.5h0M1291.7 1003.7h0M1292.0 1004.9h0M1292.3 1003.9h0M1292.6 1004.0h0M1293.0 1004.7h0M1293.3 1003.5h0M1293.6 1003.2h0M1294.0 1003.0h0M1294.3 1002.4h0M1294.6 1003.1h0M1294.9 1002.0h0M1295.3 1002.3h0M1295.6 1000.8h0M1295.9 1001.6h0M1296.2 1001.4h0M1296.6 1000.2h0M1296.9 1000.1h0M1297.2 999.9h0M1297.5 999.5h0M1297.9 999.0h0M1298.2 998.3h0M1298.5 998.8h0M1298.9 998.4h0M1299.2 998.2h0M1299.5 998.1h0M1299.8 998.1h0M1300.2 998.6h0M1300.5 998.1h0M1300.8 998.7h0M1301.1 998.4h0M1301.5 998.5h0M1301.8 998.5h0M1302.1 998.0h0M1302.4 997.9h0M1302.8 998.2h0" stroke="#000" stroke-width="2.50" stroke-linecap="round" fill="none"/>
<line x1="105.5" y1="763.5" x2="1485.5" y2="763.5" stroke="#9a9a9a" stroke-width="1.11" stroke-dasharray="1.11 1.84"/>
<line x1="105.5" y1="802.5" x2="1485.5" y2="802.5" stroke="#9a9a9a" stroke-width="1.11" stroke-dasharray="1.11 1.84"/>
<line x1="105.5" y1="840.5" x2="1485.5" y2="840.5" stroke="#9a9a9a" stroke-width="1.11" stroke-dasharray="1.11 1.84"/>
<line x1="105.5" y1="878.5" x2="1485.5" y2="878.5" stroke="#9a9a9a" stroke-width="1.11" stroke-dasharray="1.11 1.84"/>
<line x1="105.5" y1="916.5" x2="1485.5" y2="916.5" stroke="#9a9a9a" stroke-width="1.11" stroke-dasharray="1.11 1.84"/>
<line x1="105.5" y1="957.5" x2="1485.5" y2="957.5" stroke="#9a9a9a" stroke-width="1.11" stroke-dasharray="1.11 1.84"/>
<line x1="105.5" y1="983.5" x2="1485.5" y2="983.5" stroke="#9a9a9a" stroke-width="1.11" stroke-dasharray="1.11 1.84"/>
<line x1="105.5" y1="1009.5" x2="1485.5" y2="1009.5" stroke="#9a9a9a" stroke-width="1.11" stroke-dasharray="1.11 1.84"/>
<line x1="164.50" y1="763.5" x2="185.6" y2="763.5" stroke="#d0d0d0" stroke-width="0.95" stroke-dasharray="1.0 1.95"/>
<line x1="164.50" y1="957.5" x2="185.6" y2="957.5" stroke="#ffc4c4" stroke-width="0.95" stroke-dasharray="1.0 1.95"/>
<line x1="291.35" y1="763.5" x2="306.8" y2="763.5" stroke="#d0d0d0" stroke-width="0.95" stroke-dasharray="1.0 1.95"/>
<line x1="291.35" y1="957.5" x2="306.8" y2="957.5" stroke="#ffc4c4" stroke-width="0.95" stroke-dasharray="1.0 1.95"/>
<line x1="754.50" y1="763.5" x2="890.9" y2="763.5" stroke="#d0d0d0" stroke-width="0.95" stroke-dasharray="1.0 1.95"/>
<line x1="754.50" y1="957.5" x2="890.9" y2="957.5" stroke="#ffc4c4" stroke-width="0.95" stroke-dasharray="1.0 1.95"/>
</g>
<rect x="105.5" y="725.5" width="1380.0" height="286.0" fill="none" stroke="#000" stroke-width="1"/>
<line x1="162.5" y1="1011.5" x2="162.5" y2="1016.7" stroke="#000" stroke-width="1"/>
<text x="163.8" y="1031.8" text-anchor="middle" font-size="13.89">0</text>
<line x1="322.5" y1="1011.5" x2="322.5" y2="1016.7" stroke="#000" stroke-width="1"/>
<text x="321.6" y="1031.8" text-anchor="middle" font-size="13.89">500</text>
<line x1="481.5" y1="1011.5" x2="481.5" y2="1016.7" stroke="#000" stroke-width="1"/>
<text x="481.0" y="1031.8" text-anchor="middle" font-size="13.89">1000</text>
<line x1="640.5" y1="1011.5" x2="640.5" y2="1016.7" stroke="#000" stroke-width="1"/>
<text x="640.3" y="1031.8" text-anchor="middle" font-size="13.89">1500</text>
<line x1="800.5" y1="1011.5" x2="800.5" y2="1016.7" stroke="#000" stroke-width="1"/>
<text x="799.7" y="1031.8" text-anchor="middle" font-size="13.89">2000</text>
<line x1="959.5" y1="1011.5" x2="959.5" y2="1016.7" stroke="#000" stroke-width="1"/>
<text x="959.0" y="1031.8" text-anchor="middle" font-size="13.89">2500</text>
<line x1="1118.5" y1="1011.5" x2="1118.5" y2="1016.7" stroke="#000" stroke-width="1"/>
<text x="1118.4" y="1031.8" text-anchor="middle" font-size="13.89">3000</text>
<line x1="1278.5" y1="1011.5" x2="1278.5" y2="1016.7" stroke="#000" stroke-width="1"/>
<text x="1277.8" y="1031.8" text-anchor="middle" font-size="13.89">3500</text>
<line x1="1437.5" y1="1011.5" x2="1437.5" y2="1016.7" stroke="#000" stroke-width="1"/>
<text x="1437.1" y="1031.8" text-anchor="middle" font-size="13.89">4000</text>
<line x1="100.3" y1="763.5" x2="105.5" y2="763.5" stroke="#000" stroke-width="1"/>
<text x="95.8" y="768.1" text-anchor="end" font-size="13.89">not Kalman</text>
<line x1="100.3" y1="802.5" x2="105.5" y2="802.5" stroke="#000" stroke-width="1"/>
<text x="95.8" y="807.1" text-anchor="end" font-size="13.89">not track</text>
<line x1="100.3" y1="840.5" x2="105.5" y2="840.5" stroke="#000" stroke-width="1"/>
<text x="95.8" y="845.1" text-anchor="end" font-size="13.89">Ion. rad.</text>
<line x1="100.3" y1="878.5" x2="105.5" y2="878.5" stroke="#000" stroke-width="1"/>
<text x="95.8" y="883.1" text-anchor="end" font-size="13.89">dr &gt; 5</text>
<line x1="100.3" y1="916.5" x2="105.5" y2="916.5" stroke="#000" stroke-width="1"/>
<text x="95.8" y="921.1" text-anchor="end" font-size="13.89">OBS not OK</text>
<line x1="100.3" y1="957.5" x2="105.5" y2="957.5" stroke="#000" stroke-width="1"/>
<text x="95.8" y="962.1" text-anchor="end" font-size="13.89">10</text>
<line x1="100.3" y1="983.5" x2="105.5" y2="983.5" stroke="#000" stroke-width="1"/>
<text x="95.8" y="988.1" text-anchor="end" font-size="13.89">5</text>
<line x1="100.3" y1="1009.5" x2="105.5" y2="1009.5" stroke="#000" stroke-width="1"/>
<text x="95.8" y="1014.1" text-anchor="end" font-size="13.89">0</text>
<line x1="102.7" y1="970.5" x2="105.5" y2="970.5" stroke="#000" stroke-width="0.83"/>
<line x1="102.7" y1="996.3" x2="105.5" y2="996.3" stroke="#000" stroke-width="0.83"/>
<text transform="translate(69.5,983.3) rotate(-90)" text-anchor="middle" font-size="13.89">dr</text>
</svg>
</body></html>
